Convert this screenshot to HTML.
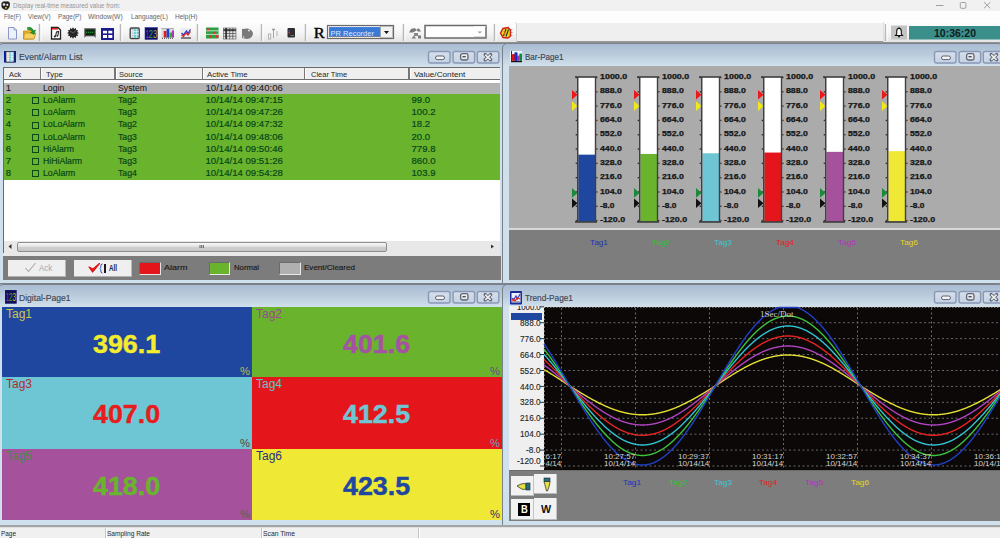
<!DOCTYPE html>
<html><head><meta charset="utf-8">
<style>
*{margin:0;padding:0;box-sizing:border-box}
html,body{width:1000px;height:538px;overflow:hidden;background:#aabcd4;font-family:"Liberation Sans",sans-serif;position:relative}
.a{position:absolute}
.t{position:absolute;white-space:nowrap}
.win{position:absolute;background:linear-gradient(#a9bcd3 0px,#b9cadb 10px,#d0e0ec 22px,#cfe1ed 100%);border:1px solid #7a8189;border-left-width:1.5px;border-radius:5px 5px 0 0;overflow:hidden}
.wt{position:absolute;font-size:9.5px;color:#3a4250;white-space:nowrap;line-height:12px}
.wb{position:absolute;width:23px;height:12px;border:1px solid #94a4bc;border-radius:2px;background:linear-gradient(#d7e1ec,#c3d0e0)}
.c{position:absolute;font-size:8.6px;white-space:nowrap;line-height:12px}
.hd{position:absolute;font-size:8px;white-space:nowrap;line-height:12px;color:#333}
.chk{position:absolute;width:7px;height:7px;border:1px solid #124a12}
.bl{font-size:9px;line-height:12px;font-weight:bold;color:#1a1a1a}
.dv{font-size:25px;line-height:30px;font-weight:bold;text-align:center;letter-spacing:0.6px}
.tl{font-size:9px;line-height:12px;color:#222}
.xl{font-size:8px;line-height:9px;color:#c8c8c8}
</style></head><body>
<!-- title bar -->
<div class="a" style="left:0;top:0;width:1000px;height:11px;background:#f1f1f1"></div>
<!-- menu -->
<div class="a" style="left:0;top:11px;width:1000px;height:10px;background:#fdfdfd"></div>
<!-- toolbar -->
<div class="a" style="left:0;top:21px;width:1000px;height:22.3px;background:linear-gradient(#ffffff 0,#ffffff 2px,#efefef 2px,#efefef 20.3px,#9a9a9a 20.3px,#8c8c8c 22.3px)"></div>
<div class="a" style="left:0;top:21.5px;width:517px;height:20px;background:linear-gradient(#fdfdfd,#f6f6f6 50%,#e4e4e4);border-right:1px solid #d0d0d0;border-radius:0 3px 0 0"></div>
<div class="a" style="left:883px;top:21.5px;width:117px;height:20px;background:linear-gradient(#fdfdfd,#f6f6f6 50%,#e4e4e4);border-left:1px solid #e0e0e0"></div>
<svg class="a" style="left:0;top:0" width="1000" height="45">
<line x1="39.5" y1="24" x2="39.5" y2="41" stroke="#b8b8b8" stroke-width="1.5"/>
<line x1="41.0" y1="24" x2="41.0" y2="41" stroke="#ffffff" stroke-width="1"/>
<line x1="120.5" y1="24" x2="120.5" y2="41" stroke="#b8b8b8" stroke-width="1.5"/>
<line x1="122.0" y1="24" x2="122.0" y2="41" stroke="#ffffff" stroke-width="1"/>
<line x1="197.5" y1="24" x2="197.5" y2="41" stroke="#b8b8b8" stroke-width="1.5"/>
<line x1="199.0" y1="24" x2="199.0" y2="41" stroke="#ffffff" stroke-width="1"/>
<line x1="261.5" y1="24" x2="261.5" y2="41" stroke="#b8b8b8" stroke-width="1.5"/>
<line x1="263.0" y1="24" x2="263.0" y2="41" stroke="#ffffff" stroke-width="1"/>
<line x1="305.5" y1="24" x2="305.5" y2="41" stroke="#b8b8b8" stroke-width="1.5"/>
<line x1="307.0" y1="24" x2="307.0" y2="41" stroke="#ffffff" stroke-width="1"/>
<line x1="403.5" y1="24" x2="403.5" y2="41" stroke="#b8b8b8" stroke-width="1.5"/>
<line x1="405.0" y1="24" x2="405.0" y2="41" stroke="#ffffff" stroke-width="1"/>
<line x1="494.5" y1="24" x2="494.5" y2="41" stroke="#b8b8b8" stroke-width="1.5"/>
<line x1="496.0" y1="24" x2="496.0" y2="41" stroke="#ffffff" stroke-width="1"/>
<line x1="885.5" y1="24" x2="885.5" y2="41" stroke="#b8b8b8" stroke-width="1.5"/>
<line x1="887.0" y1="24" x2="887.0" y2="41" stroke="#ffffff" stroke-width="1"/>
<path d="M8.5,27.5 H14 L16.5,30 V39 H8.5 Z" fill="#eaf2fb" stroke="#8c96c8" stroke-width="1"/>
<path d="M14,27.5 V30 H16.5" fill="#c8d0e8" stroke="#8c96c8" stroke-width="0.8"/>
<path d="M23.5,31 H28 L29,30 H33 V39 H23.5 Z" fill="#e8b830" stroke="#c08a10" stroke-width="0.8"/>
<path d="M24.5,33 H36 L34,39 H23.5 Z" fill="#f6d060" stroke="#c08a10" stroke-width="0.8"/>
<path d="M27.5,27.5 Q32,26.5 33.5,31 L35.5,30 L34,34.5 L30.5,32.5 L32.3,31.8 Q31,29 27.5,29.5 Z" fill="#1e9a30" stroke="#0c6a1c" stroke-width="0.5"/>
<path d="M51.5,27.5 H58 L60.5,30 V39 H51.5 Z" fill="#fff" stroke="#222" stroke-width="1.3"/>
<rect x="52" y="28" width="6" height="1.6" fill="#e82020"/>
<path d="M55.5,36.5 L56.5,32 L58.5,31.5 L58,35.5" fill="none" stroke="#222" stroke-width="1.1"/><circle cx="54.8" cy="36.6" r="1" fill="#222"/><circle cx="57.3" cy="35.8" r="0.9" fill="#222"/>
<polygon points="79.00,33.00 77.15,34.06 78.20,35.85 76.04,35.89 76.00,37.94 74.11,36.95 73.00,38.70 71.89,36.95 70.00,37.94 69.96,35.89 67.80,35.85 68.85,34.06 67.00,33.00 68.85,31.94 67.80,30.15 69.96,30.11 70.00,28.06 71.89,29.05 73.00,27.30 74.11,29.05 76.00,28.06 76.04,30.11 78.20,30.15 77.15,31.94" fill="#262626"/>
<path d="M70,31 L73,33 L76.5,30" stroke="#777" stroke-width="0.7" fill="none"/>
<rect x="84.3" y="28.3" width="11.4" height="8" fill="#4a4a4a"/>
<rect x="85.5" y="29.5" width="9" height="5.6" fill="#0a2a10"/>
<line x1="86" y1="32.3" x2="94" y2="32.3" stroke="#30b040" stroke-width="1.1" stroke-dasharray="1.2,0.8"/>
<path d="M84.5,37.5 L85.5,36 M95.5,37.5 L94.5,36" stroke="#555" stroke-width="1"/>
<rect x="101.5" y="28.5" width="12" height="11" fill="#1c1c90" stroke="#1c1c90"/>
<rect x="103" y="30.8" width="4" height="2.6" fill="#fff"/><rect x="108.3" y="30.8" width="4" height="2.6" fill="#fff"/>
<rect x="103" y="35" width="4" height="3" fill="#fff"/><rect x="108.3" y="35" width="4" height="3" fill="#fff"/>
<rect x="130.2" y="28" width="9" height="10.6" rx="1" fill="#c8f0f4" stroke="#444" stroke-width="1.4"/>
<line x1="132.8" y1="29" x2="132.8" y2="38" stroke="#e07070" stroke-width="0.8" stroke-dasharray="1,1"/><line x1="135" y1="29" x2="135" y2="38" stroke="#40c0d0" stroke-width="1.3"/><line x1="137.3" y1="29" x2="137.3" y2="38" stroke="#60d0e0" stroke-width="1.1"/>
<line x1="131" y1="31.5" x2="139" y2="31.5" stroke="#fff" stroke-width="0.5"/><line x1="131" y1="34.5" x2="139" y2="34.5" stroke="#fff" stroke-width="0.5"/>
<rect x="145" y="27.5" width="12.5" height="12" fill="#0e0e5a" stroke="#3a3aa0" stroke-width="0.6"/>
<text x="145.4" y="37.6" font-family="Liberation Sans" font-size="10" fill="#8a3ab8" textLength="3.6" lengthAdjust="spacingAndGlyphs">1</text><text x="148.8" y="37.6" font-family="Liberation Sans" font-size="10" fill="#28b040" textLength="4.2" lengthAdjust="spacingAndGlyphs">2</text><text x="153" y="37.6" font-family="Liberation Sans" font-size="10" fill="#b8a828" textLength="4.2" lengthAdjust="spacingAndGlyphs">3</text>
<rect x="161.5" y="28" width="12.5" height="10" fill="#d8d8d8"/>
<line x1="161.5" y1="28.5" x2="174" y2="28.5" stroke="#777" stroke-width="0.8" stroke-dasharray="1,1"/>
<rect x="163.8" y="31" width="2.6" height="6.5" fill="#e81818"/><rect x="166.6" y="29" width="2.6" height="8.5" fill="#2040d0"/><rect x="169.4" y="32.5" width="2.6" height="5" fill="#30b030"/><rect x="172" y="30.5" width="2" height="7" fill="#b030c0"/>
<line x1="162" y1="38.3" x2="174" y2="38.3" stroke="#444" stroke-width="1" stroke-dasharray="1,1"/>
<rect x="180.5" y="28.3" width="10.5" height="10" fill="#ececec"/>
<polyline points="181.5,33 183.5,35 186.5,31 188,33.5 190.5,29.5" fill="none" stroke="#2a40c8" stroke-width="1.4"/><polyline points="181.5,35 183.5,36.5 186,33 188,35 190.5,31.5" fill="none" stroke="#e02020" stroke-width="1.2"/>
<line x1="181" y1="38" x2="191" y2="38" stroke="#333" stroke-width="1.2"/>
<rect x="206" y="27.5" width="12.5" height="11" fill="#2aa040"/>
<rect x="206.8" y="28.5" width="2.6" height="2.6" fill="#e83030"/>
<rect x="213" y="31.8" width="2.6" height="2.6" fill="#e83030"/>
<rect x="209" y="35.2" width="2.6" height="2.6" fill="#e83030"/>
<rect x="216" y="35.2" width="2.6" height="2.6" fill="#e83030"/>
<line x1="206" y1="30.8" x2="218.5" y2="30.8" stroke="#fff" stroke-width="0.7"/><line x1="206" y1="34.4" x2="218.5" y2="34.4" stroke="#fff" stroke-width="0.7"/>
<rect x="223.5" y="28" width="12.5" height="11" fill="#e8e8e8" stroke="#555" stroke-width="0.6"/>
<line x1="226.6" y1="28" x2="226.6" y2="39" stroke="#555" stroke-width="0.8"/>
<line x1="223.5" y1="30.8" x2="236" y2="30.8" stroke="#555" stroke-width="0.8"/>
<line x1="229.7" y1="28" x2="229.7" y2="39" stroke="#555" stroke-width="0.8"/>
<line x1="223.5" y1="33.5" x2="236" y2="33.5" stroke="#555" stroke-width="0.8"/>
<line x1="232.8" y1="28" x2="232.8" y2="39" stroke="#555" stroke-width="0.8"/>
<line x1="223.5" y1="36.2" x2="236" y2="36.2" stroke="#555" stroke-width="0.8"/>
<line x1="226" y1="28" x2="226" y2="39" stroke="#222" stroke-width="1.4"/><line x1="223.5" y1="30" x2="236" y2="30" stroke="#222" stroke-width="1.4"/>
<path d="M242,29 L248,28.5 Q253,30 253,34 Q252,38.5 247,39 L242,38 Z" fill="#7a7a7a"/>
<circle cx="249" cy="30.5" r="0.9" fill="#eee"/><circle cx="243.5" cy="37" r="0.7" fill="#eee"/>
<rect x="268.5" y="34" width="2.2" height="5" fill="none" stroke="#b0b0b0" stroke-width="0.9"/>
<line x1="273.5" y1="30" x2="273.5" y2="38" stroke="#a8a8a8" stroke-width="1"/><ellipse cx="273.5" cy="29.5" rx="1.8" ry="1" fill="#a0a0a0"/><line x1="277" y1="31" x2="277" y2="36" stroke="#b0b0b0" stroke-width="1"/>
<rect x="287.5" y="28" width="7.5" height="9.5" rx="1" fill="#2e2e2e"/>
<rect x="288.5" y="30" width="1.5" height="1.5" fill="#3050c0"/><rect x="288.5" y="32" width="1.5" height="1.5" fill="#e03030"/><line x1="290.5" y1="35.5" x2="294" y2="35.5" stroke="#aaa" stroke-width="0.6"/>
<text x="313.8" y="38.3" font-family="Liberation Serif" font-size="14" fill="#000" stroke="#000" stroke-width="0.4" textLength="11" lengthAdjust="spacingAndGlyphs">R</text>
<rect x="327.5" y="25.5" width="66" height="13" fill="#fff" stroke="#6a6a6a" stroke-width="1.2"/>
<rect x="329" y="27" width="52" height="10" fill="#3a7ad6" stroke="#c8a070" stroke-width="0.7" stroke-dasharray="1,1"/>
<text x="330.5" y="35.5" font-family="Liberation Sans" font-size="8" fill="#dfe8ff" textLength="43.5" lengthAdjust="spacingAndGlyphs">PR Recorder</text>
<rect x="380.5" y="26.5" width="12" height="11" fill="#f2f2f2" stroke="#9a9a9a" stroke-width="0.6"/>
<path d="M384,31 H389 L386.5,34 Z" fill="#111"/>
<path d="M409,32.5 L411,29 L415,28 L416.5,30.5 L413,32.5 Z" fill="#7a7a7a"/><path d="M416.5,29 L419,28.5 L421,31.5 L417.5,31.5 Z" fill="#7a7a7a"/>
<rect x="414" y="33" width="4" height="3" fill="#888"/><path d="M411.5,38.5 L414,35.5 L416,38.5 Z" fill="#7a7a7a"/><rect x="418" y="35.5" width="3" height="3" fill="#7a7a7a"/>
<rect x="425" y="25.5" width="61" height="12.5" fill="#fff" stroke="#6a6a6a" stroke-width="1.5"/>
<path d="M474,37 V26.5 H486" fill="none" stroke="#fff" stroke-width="0.6"/><path d="M474,37.3 H486" stroke="#8a8a8a" stroke-width="1.2"/>
<path d="M477.5,31.5 H482 L479.8,33.5 Z" fill="#999"/>
<path d="M500.5,33 L503,28.5 L508,27.5 L510.5,30 L510.5,36 L508,38 L503,37.5 Z" fill="#e8d818" stroke="#d02020" stroke-width="1.5"/>
<path d="M503.5,36 L506,29 M506,36.5 L508.5,29.5" stroke="#2a2a2a" stroke-width="1.1"/><path d="M504,31 L505,35" stroke="#e07020" stroke-width="0.9"/>
<path d="M511.5,29 L512,30 M511.8,32 L512,33 M511.5,35 L512,36" stroke="#888" stroke-width="1"/>
<rect x="891" y="25.5" width="16" height="14" fill="#c4c4c4"/>
<path d="M895.5,35.5 H902.5 L901.3,34 V31.3 Q901.3,28.5 899,28.3 Q896.7,28.5 896.7,31.3 V34 Z" fill="#fff" stroke="#111" stroke-width="1.1"/>
<circle cx="899" cy="36.6" r="1" fill="#111"/><rect x="898.5" y="27.3" width="1" height="1.2" fill="#111"/>
<rect x="909" y="26" width="91" height="13.5" fill="#3a8f8b"/>
<text x="934" y="37.3" font-family="Liberation Sans" font-weight="bold" font-size="11.5" fill="#102020" textLength="42" lengthAdjust="spacingAndGlyphs">10:36:20</text>
</svg>
<svg class="a" style="left:0;top:0" width="1000" height="12">
<path d="M1.5,3 Q3,0.5 6,1.5 Q9,0.5 10,3.5 Q10,8 7,10 Q4,10 2,8 Q1,6 1.5,3 Z" fill="#222"/>
<circle cx="4" cy="4.5" r="1.3" fill="#eee"/><circle cx="7.3" cy="4.8" r="1.1" fill="#eee"/><circle cx="6" cy="7.8" r="1" fill="#c8c020"/>
<line x1="936" y1="5.5" x2="943.5" y2="5.5" stroke="#8a8a8a" stroke-width="0.8"/>
<rect x="960.3" y="2.5" width="5.6" height="5.8" rx="1" fill="none" stroke="#8a8a8a" stroke-width="0.8"/>
<path d="M984,2.2 L990.3,8.3 M990.3,2.2 L984,8.3" stroke="#8a8a8a" stroke-width="0.8"/>
</svg>
<div class="t" style="left:13.00px;top:2.31px;font-size:6.3px;line-height:8px;color:#959595;transform:scaleX(0.9791);transform-origin:0 0;">Display real-time measured value from:</div>
<div class="t" style="left:3.90px;top:12.48px;font-size:7px;line-height:9px;color:#666666;transform:scaleX(0.8359);transform-origin:0 0;">File(F)</div>
<div class="t" style="left:28.00px;top:12.48px;font-size:7px;line-height:9px;color:#666666;transform:scaleX(0.9311);transform-origin:0 0;">View(V)</div>
<div class="t" style="left:57.90px;top:12.48px;font-size:7px;line-height:9px;color:#666666;transform:scaleX(0.9112);transform-origin:0 0;">Page(P)</div>
<div class="t" style="left:88.20px;top:12.48px;font-size:7px;line-height:9px;color:#666666;transform:scaleX(0.9595);transform-origin:0 0;">Window(W)</div>
<div class="t" style="left:130.50px;top:12.48px;font-size:7px;line-height:9px;color:#666666;transform:scaleX(0.9320);transform-origin:0 0;">Language(L)</div>
<div class="t" style="left:175.00px;top:12.48px;font-size:7px;line-height:9px;color:#666666;transform:scaleX(0.9330);transform-origin:0 0;">Help(H)</div>

<!-- ============ Event window ============ -->
<div class="win" style="left:-2px;top:43px;width:512px;height:241px"></div>
<div class="t" style="left:18.50px;top:51.17px;font-size:9.6px;line-height:12px;color:#3c4452;transform:scaleX(0.9085);transform-origin:0 0;-webkit-text-stroke:0.15px #3c4452">Event/Alarm List</div>
<svg class="a" style="left:3.5px;top:50.5px" width="13" height="12"><rect x="0" y="0" width="12" height="11.5" fill="#0a1a9a"/><rect x="2" y="0.5" width="8" height="10.5" fill="#f4ffff" stroke="#333" stroke-width="0.8"/><line x1="4" y1="1" x2="4" y2="11" stroke="#f08080" stroke-width="1" stroke-dasharray="1.2,1.2"/><line x1="6" y1="1" x2="6" y2="11" stroke="#40c0c8" stroke-width="1.2"/><line x1="8" y1="1" x2="8" y2="11" stroke="#50c8d8" stroke-width="1" stroke-dasharray="1.5,1"/></svg>
<svg class="a" style="left:427.3px;top:50px" width="76" height="15">
<defs><linearGradient id="bg" x1="0" y1="0" x2="0" y2="1"><stop offset="0" stop-color="#d6e0ec"/><stop offset="1" stop-color="#c4d2e2"/></linearGradient></defs>
<rect x="1.5" y="1.5" width="21.5" height="11.5" rx="2" fill="url(#bg)" stroke="#8a98b6" stroke-width="1.4"/>
<rect x="26.1" y="1.5" width="21.5" height="11.5" rx="2" fill="url(#bg)" stroke="#8a98b6" stroke-width="1.4"/>
<rect x="50.3" y="1.5" width="21.5" height="11.5" rx="2" fill="url(#bg)" stroke="#8a98b6" stroke-width="1.4"/>
<rect x="8.5" y="6" width="9" height="3.6" rx="1.8" fill="#f4f4f4" stroke="#5a6070" stroke-width="1"/>
<rect x="33.6" y="3.6" width="7.4" height="6.4" rx="1.8" fill="#ececec" stroke="#5e6474" stroke-width="1.3"/>
<rect x="35.5" y="6" width="3.2" height="1.4" fill="#4a5060"/>
<path d="M58.2,4.6 L63.6,9.8 M63.6,4.6 L58.2,9.8" stroke="#5e6474" stroke-width="3.4" stroke-linecap="round"/>
<path d="M58.2,4.6 L63.6,9.8 M63.6,4.6 L58.2,9.8" stroke="#eeeeee" stroke-width="1.6"/>
</svg>
<div class="a" style="left:3px;top:67px;width:497px;height:189px;background:#fff;border-left:1px solid #6a6a6a;border-top:1px solid #6a6a6a"></div>
<div class="a" style="left:4px;top:68px;width:495.5px;height:12px;background:#efefef;border-bottom:1.5px solid #6e6e6e"></div>
<div class="a" style="left:39.6px;top:68px;width:1.5px;height:11px;background:#767676"></div>
<div class="a" style="left:41.1px;top:68px;width:1px;height:11px;background:#fff"></div>
<div class="a" style="left:114.1px;top:68px;width:1.5px;height:11px;background:#767676"></div>
<div class="a" style="left:115.6px;top:68px;width:1px;height:11px;background:#fff"></div>
<div class="a" style="left:201.9px;top:68px;width:1.5px;height:11px;background:#767676"></div>
<div class="a" style="left:203.4px;top:68px;width:1px;height:11px;background:#fff"></div>
<div class="a" style="left:303.8px;top:68px;width:1.5px;height:11px;background:#767676"></div>
<div class="a" style="left:305.3px;top:68px;width:1px;height:11px;background:#fff"></div>
<div class="a" style="left:408.1px;top:68px;width:1.5px;height:11px;background:#767676"></div>
<div class="a" style="left:409.6px;top:68px;width:1px;height:11px;background:#fff"></div>
<div class="t" style="left:9.00px;top:70.03px;font-size:7.4px;line-height:10px;color:#262626;transform:scaleX(0.9971);transform-origin:0 0;">Ack</div>
<div class="t" style="left:45.50px;top:70.03px;font-size:7.4px;line-height:10px;color:#262626;transform:scaleX(1.0471);transform-origin:0 0;">Type</div>
<div class="t" style="left:119.00px;top:70.03px;font-size:7.4px;line-height:10px;color:#262626;transform:scaleX(1.0193);transform-origin:0 0;">Source</div>
<div class="t" style="left:207.30px;top:70.03px;font-size:7.4px;line-height:10px;color:#262626;transform:scaleX(1.0642);transform-origin:0 0;">Active Time</div>
<div class="t" style="left:310.80px;top:70.03px;font-size:7.4px;line-height:10px;color:#262626;transform:scaleX(1.0146);transform-origin:0 0;">Clear Time</div>
<div class="t" style="left:413.70px;top:70.03px;font-size:7.4px;line-height:10px;color:#262626;transform:scaleX(1.1089);transform-origin:0 0;">Value/Content</div>
<div class="a" style="left:4px;top:82.5px;width:495.5px;height:11.5px;background:#b3b3b3"></div>
<div class="a" style="left:4px;top:94px;width:495.5px;height:86.2px;background:#6ab42d"></div>
<div class="t" style="left:5.80px;top:81.77px;font-size:9.6px;line-height:12px;color:#161616;transform:scaleX(1.0000);transform-origin:0 0;-webkit-text-stroke:0.05px #161616">1</div>
<div class="t" style="left:42.60px;top:81.77px;font-size:9.6px;line-height:12px;color:#161616;transform:scaleX(0.9050);transform-origin:0 0;-webkit-text-stroke:0.05px #161616">Login</div>
<div class="t" style="left:117.50px;top:81.77px;font-size:9.6px;line-height:12px;color:#161616;transform:scaleX(0.9050);transform-origin:0 0;-webkit-text-stroke:0.05px #161616">System</div>
<div class="t" style="left:205.50px;top:81.77px;font-size:9.6px;line-height:12px;color:#161616;transform:scaleX(1.0000);transform-origin:0 0;-webkit-text-stroke:0.05px #161616">10/14/14 09:40:06</div>
<div class="t" style="left:5.80px;top:93.97px;font-size:9.6px;line-height:12px;color:#07461a;transform:scaleX(1.0000);transform-origin:0 0;-webkit-text-stroke:0.2px #07461a">2</div>
<div class="a" style="left:32.2px;top:97.1px;width:7px;height:7px;border:1.3px solid #0a4a1a"></div>
<div class="t" style="left:42.60px;top:93.97px;font-size:9.6px;line-height:12px;color:#07461a;transform:scaleX(0.9050);transform-origin:0 0;-webkit-text-stroke:0.2px #07461a">LoAlarm</div>
<div class="t" style="left:117.50px;top:93.97px;font-size:9.6px;line-height:12px;color:#07461a;transform:scaleX(0.9050);transform-origin:0 0;-webkit-text-stroke:0.2px #07461a">Tag2</div>
<div class="t" style="left:205.50px;top:93.97px;font-size:9.6px;line-height:12px;color:#07461a;transform:scaleX(1.0000);transform-origin:0 0;-webkit-text-stroke:0.2px #07461a">10/14/14 09:47:15</div>
<div class="t" style="left:411.50px;top:93.97px;font-size:9.6px;line-height:12px;color:#07461a;transform:scaleX(1.0000);transform-origin:0 0;-webkit-text-stroke:0.2px #07461a">99.0</div>
<div class="t" style="left:5.80px;top:106.17px;font-size:9.6px;line-height:12px;color:#07461a;transform:scaleX(1.0000);transform-origin:0 0;-webkit-text-stroke:0.2px #07461a">3</div>
<div class="a" style="left:32.2px;top:109.3px;width:7px;height:7px;border:1.3px solid #0a4a1a"></div>
<div class="t" style="left:42.60px;top:106.17px;font-size:9.6px;line-height:12px;color:#07461a;transform:scaleX(0.9050);transform-origin:0 0;-webkit-text-stroke:0.2px #07461a">LoAlarm</div>
<div class="t" style="left:117.50px;top:106.17px;font-size:9.6px;line-height:12px;color:#07461a;transform:scaleX(0.9050);transform-origin:0 0;-webkit-text-stroke:0.2px #07461a">Tag3</div>
<div class="t" style="left:205.50px;top:106.17px;font-size:9.6px;line-height:12px;color:#07461a;transform:scaleX(1.0000);transform-origin:0 0;-webkit-text-stroke:0.2px #07461a">10/14/14 09:47:26</div>
<div class="t" style="left:411.50px;top:106.17px;font-size:9.6px;line-height:12px;color:#07461a;transform:scaleX(1.0000);transform-origin:0 0;-webkit-text-stroke:0.2px #07461a">100.2</div>
<div class="t" style="left:5.80px;top:118.37px;font-size:9.6px;line-height:12px;color:#07461a;transform:scaleX(1.0000);transform-origin:0 0;-webkit-text-stroke:0.2px #07461a">4</div>
<div class="a" style="left:32.2px;top:121.5px;width:7px;height:7px;border:1.3px solid #0a4a1a"></div>
<div class="t" style="left:42.60px;top:118.37px;font-size:9.6px;line-height:12px;color:#07461a;transform:scaleX(0.9050);transform-origin:0 0;-webkit-text-stroke:0.2px #07461a">LoLoAlarm</div>
<div class="t" style="left:117.50px;top:118.37px;font-size:9.6px;line-height:12px;color:#07461a;transform:scaleX(0.9050);transform-origin:0 0;-webkit-text-stroke:0.2px #07461a">Tag2</div>
<div class="t" style="left:205.50px;top:118.37px;font-size:9.6px;line-height:12px;color:#07461a;transform:scaleX(1.0000);transform-origin:0 0;-webkit-text-stroke:0.2px #07461a">10/14/14 09:47:32</div>
<div class="t" style="left:411.50px;top:118.37px;font-size:9.6px;line-height:12px;color:#07461a;transform:scaleX(1.0000);transform-origin:0 0;-webkit-text-stroke:0.2px #07461a">18.2</div>
<div class="t" style="left:5.80px;top:130.57px;font-size:9.6px;line-height:12px;color:#07461a;transform:scaleX(1.0000);transform-origin:0 0;-webkit-text-stroke:0.2px #07461a">5</div>
<div class="a" style="left:32.2px;top:133.7px;width:7px;height:7px;border:1.3px solid #0a4a1a"></div>
<div class="t" style="left:42.60px;top:130.57px;font-size:9.6px;line-height:12px;color:#07461a;transform:scaleX(0.9050);transform-origin:0 0;-webkit-text-stroke:0.2px #07461a">LoLoAlarm</div>
<div class="t" style="left:117.50px;top:130.57px;font-size:9.6px;line-height:12px;color:#07461a;transform:scaleX(0.9050);transform-origin:0 0;-webkit-text-stroke:0.2px #07461a">Tag3</div>
<div class="t" style="left:205.50px;top:130.57px;font-size:9.6px;line-height:12px;color:#07461a;transform:scaleX(1.0000);transform-origin:0 0;-webkit-text-stroke:0.2px #07461a">10/14/14 09:48:06</div>
<div class="t" style="left:411.50px;top:130.57px;font-size:9.6px;line-height:12px;color:#07461a;transform:scaleX(1.0000);transform-origin:0 0;-webkit-text-stroke:0.2px #07461a">20.0</div>
<div class="t" style="left:5.80px;top:142.77px;font-size:9.6px;line-height:12px;color:#07461a;transform:scaleX(1.0000);transform-origin:0 0;-webkit-text-stroke:0.2px #07461a">6</div>
<div class="a" style="left:32.2px;top:145.9px;width:7px;height:7px;border:1.3px solid #0a4a1a"></div>
<div class="t" style="left:42.60px;top:142.77px;font-size:9.6px;line-height:12px;color:#07461a;transform:scaleX(0.9050);transform-origin:0 0;-webkit-text-stroke:0.2px #07461a">HiAlarm</div>
<div class="t" style="left:117.50px;top:142.77px;font-size:9.6px;line-height:12px;color:#07461a;transform:scaleX(0.9050);transform-origin:0 0;-webkit-text-stroke:0.2px #07461a">Tag3</div>
<div class="t" style="left:205.50px;top:142.77px;font-size:9.6px;line-height:12px;color:#07461a;transform:scaleX(1.0000);transform-origin:0 0;-webkit-text-stroke:0.2px #07461a">10/14/14 09:50:46</div>
<div class="t" style="left:411.50px;top:142.77px;font-size:9.6px;line-height:12px;color:#07461a;transform:scaleX(1.0000);transform-origin:0 0;-webkit-text-stroke:0.2px #07461a">779.8</div>
<div class="t" style="left:5.80px;top:154.97px;font-size:9.6px;line-height:12px;color:#07461a;transform:scaleX(1.0000);transform-origin:0 0;-webkit-text-stroke:0.2px #07461a">7</div>
<div class="a" style="left:32.2px;top:158.1px;width:7px;height:7px;border:1.3px solid #0a4a1a"></div>
<div class="t" style="left:42.60px;top:154.97px;font-size:9.6px;line-height:12px;color:#07461a;transform:scaleX(0.9050);transform-origin:0 0;-webkit-text-stroke:0.2px #07461a">HiHiAlarm</div>
<div class="t" style="left:117.50px;top:154.97px;font-size:9.6px;line-height:12px;color:#07461a;transform:scaleX(0.9050);transform-origin:0 0;-webkit-text-stroke:0.2px #07461a">Tag3</div>
<div class="t" style="left:205.50px;top:154.97px;font-size:9.6px;line-height:12px;color:#07461a;transform:scaleX(1.0000);transform-origin:0 0;-webkit-text-stroke:0.2px #07461a">10/14/14 09:51:26</div>
<div class="t" style="left:411.50px;top:154.97px;font-size:9.6px;line-height:12px;color:#07461a;transform:scaleX(1.0000);transform-origin:0 0;-webkit-text-stroke:0.2px #07461a">860.0</div>
<div class="t" style="left:5.80px;top:167.17px;font-size:9.6px;line-height:12px;color:#07461a;transform:scaleX(1.0000);transform-origin:0 0;-webkit-text-stroke:0.2px #07461a">8</div>
<div class="a" style="left:32.2px;top:170.3px;width:7px;height:7px;border:1.3px solid #0a4a1a"></div>
<div class="t" style="left:42.60px;top:167.17px;font-size:9.6px;line-height:12px;color:#07461a;transform:scaleX(0.9050);transform-origin:0 0;-webkit-text-stroke:0.2px #07461a">LoAlarm</div>
<div class="t" style="left:117.50px;top:167.17px;font-size:9.6px;line-height:12px;color:#07461a;transform:scaleX(0.9050);transform-origin:0 0;-webkit-text-stroke:0.2px #07461a">Tag4</div>
<div class="t" style="left:205.50px;top:167.17px;font-size:9.6px;line-height:12px;color:#07461a;transform:scaleX(1.0000);transform-origin:0 0;-webkit-text-stroke:0.2px #07461a">10/14/14 09:54:28</div>
<div class="t" style="left:411.50px;top:167.17px;font-size:9.6px;line-height:12px;color:#07461a;transform:scaleX(1.0000);transform-origin:0 0;-webkit-text-stroke:0.2px #07461a">103.9</div>
<div class="a" style="left:4px;top:240.5px;width:495.5px;height:12px;background:#e8e8e8"></div>
<div class="a" style="left:17px;top:241.5px;width:370px;height:10px;background:linear-gradient(#fafafa,#e2e2e2 45%,#cfcfcf 55%,#c4c4c4);border:1px solid #8e8e8e;border-radius:2px"></div>
<svg class="a" style="left:0;top:236px" width="500" height="20"><path d="M8.5,10.5 L11.5,8 V13 Z" fill="#333"/><path d="M491,8.5 L494,10.5 L491,12.5 Z" fill="#333"/><path d="M200,9 V12 M201.7,9 V12 M203.4,9 V12" stroke="#444" stroke-width="0.8"/></svg>
<div class="a" style="left:3px;top:252.5px;width:497px;height:3px;background:#e8e8e8"></div>
<div class="a" style="left:3px;top:255.5px;width:498px;height:24px;background:#7b7c7b"></div>
<div class="a" style="left:8.1px;top:259.5px;width:57.7px;height:17.1px;background:#efefef;border-right:1px solid #b8b8b8;border-bottom:1.5px solid #b0b0b0"></div>
<div class="a" style="left:73.5px;top:259.5px;width:58.2px;height:17.1px;background:#efefef;border-right:1px solid #b8b8b8;border-bottom:1.5px solid #b0b0b0"></div>
<svg class="a" style="left:0;top:256px" width="140" height="24"><path d="M25.5,12 L28.5,15.5 L35.5,7" fill="none" stroke="#a8a8a8" stroke-width="1.1"/><path d="M89,11 L92.5,16 L99.5,7.5 L93,13 Z" fill="#e01818" stroke="#e01818" stroke-width="1.2" stroke-linejoin="round"/><path d="M102.5,8 Q100.5,8 100.8,10.5 Q101,12 99.8,12.5 Q101,13 100.8,14.5 Q100.5,17 102.5,17" fill="none" stroke="#3050c0" stroke-width="1"/><rect x="104" y="8" width="2" height="9" fill="#1a1a1a"/></svg>
<div class="t" style="left:38.50px;top:262.59px;font-size:8.6px;line-height:11px;color:#a2a8b8;transform:scaleX(0.9277);transform-origin:0 0;">Ack</div>
<div class="t" style="left:109.20px;top:262.59px;font-size:8.6px;line-height:11px;font-weight:bold;color:#1c2438;transform:scaleX(0.7280);transform-origin:0 0;">All</div>
<div class="a" style="left:139.4px;top:261.8px;width:21.6px;height:13px;background:#e5161b;border-top:1px solid #6a6a6a;border-left:1px solid #6a6a6a;border-right:1.5px solid #e8e8e8;border-bottom:1.5px solid #e8e8e8"></div>
<div class="a" style="left:208.8px;top:261.8px;width:21.6px;height:13px;background:#6ab42d;border-top:1px solid #6a6a6a;border-left:1px solid #6a6a6a;border-right:1.5px solid #e8e8e8;border-bottom:1.5px solid #e8e8e8"></div>
<div class="a" style="left:279px;top:261.8px;width:21.6px;height:13px;background:#b0b0b0;border-top:1px solid #6a6a6a;border-left:1px solid #6a6a6a;border-right:1.5px solid #e8e8e8;border-bottom:1.5px solid #e8e8e8"></div>
<div class="t" style="left:164.00px;top:262.91px;font-size:7.6px;line-height:10px;color:#1a1a1a;transform:scaleX(1.1840);transform-origin:0 0;-webkit-text-stroke:0.15px #1a1a1a">Alarm</div>
<div class="t" style="left:234.00px;top:262.91px;font-size:7.6px;line-height:10px;color:#1a1a1a;transform:scaleX(1.0207);transform-origin:0 0;-webkit-text-stroke:0.15px #1a1a1a">Normal</div>
<div class="t" style="left:304.00px;top:262.91px;font-size:7.6px;line-height:10px;color:#1a1a1a;transform:scaleX(1.0589);transform-origin:0 0;-webkit-text-stroke:0.15px #1a1a1a">Event/Cleared</div>

<!-- ============ Bar window ============ -->
<div class="win" style="left:502px;top:43px;width:501px;height:241px"></div>
<div class="t" style="left:525.00px;top:51.17px;font-size:9.6px;line-height:12px;color:#3c4452;transform:scaleX(0.8388);transform-origin:0 0;-webkit-text-stroke:0.15px #3c4452">Bar-Page1</div>
<svg class="a" style="left:509.5px;top:51px" width="13" height="12"><rect x="0" y="0" width="12" height="11" fill="#eef2f4"/><rect x="1" y="0" width="1" height="11" fill="#333"/><rect x="2" y="3" width="3" height="7" rx="1" fill="#f00a0a"/><rect x="4.5" y="1.3" width="3" height="8.7" rx="1" fill="#1030c8"/><rect x="7" y="4.5" width="2.5" height="5.5" rx="1" fill="#a030b0"/><rect x="9.3" y="2.5" width="2.7" height="7.5" rx="1" fill="#108a30"/><rect x="1" y="10" width="11" height="1.2" fill="#111"/></svg>
<svg class="a" style="left:932.6px;top:50px" width="76" height="15">
<defs><linearGradient id="bg" x1="0" y1="0" x2="0" y2="1"><stop offset="0" stop-color="#d6e0ec"/><stop offset="1" stop-color="#c4d2e2"/></linearGradient></defs>
<rect x="1.5" y="1.5" width="21.5" height="11.5" rx="2" fill="url(#bg)" stroke="#8a98b6" stroke-width="1.4"/>
<rect x="26.1" y="1.5" width="21.5" height="11.5" rx="2" fill="url(#bg)" stroke="#8a98b6" stroke-width="1.4"/>
<rect x="50.3" y="1.5" width="21.5" height="11.5" rx="2" fill="url(#bg)" stroke="#8a98b6" stroke-width="1.4"/>
<rect x="8.5" y="6" width="9" height="3.6" rx="1.8" fill="#f4f4f4" stroke="#5a6070" stroke-width="1"/>
<rect x="33.6" y="3.6" width="7.4" height="6.4" rx="1.8" fill="#ececec" stroke="#5e6474" stroke-width="1.3"/>
<rect x="35.5" y="6" width="3.2" height="1.4" fill="#4a5060"/>
<path d="M58.2,4.6 L63.6,9.8 M63.6,4.6 L58.2,9.8" stroke="#5e6474" stroke-width="3.4" stroke-linecap="round"/>
<path d="M58.2,4.6 L63.6,9.8 M63.6,4.6 L58.2,9.8" stroke="#eeeeee" stroke-width="1.6"/>
</svg>
<div class="a" style="left:509px;top:66px;width:491px;height:162px;background:#ababab"></div>
<div class="a" style="left:509px;top:228px;width:491px;height:2px;background:#d8d8d8"></div>
<div class="a" style="left:509px;top:230px;width:491px;height:49.5px;background:#7c7d7c"></div>
<svg class="a" style="left:509px;top:66px" width="491" height="162"><g transform="translate(-509,-66)">
<rect x="578.3" y="77" width="17.4" height="145" fill="#fff"/>
<rect x="578.3" y="154.66" width="17.4" height="67.34" fill="#1f47a0"/>
<rect x="577" y="77" width="1.4" height="145" fill="#404040"/>
<rect x="594.8" y="77" width="1.4" height="145" fill="#404040"/>
<rect x="575" y="76.2" width="22" height="1.6" fill="#404040"/>
<rect x="575" y="221.1" width="22" height="1.7" fill="#404040"/>
<rect x="575.7" y="76.80" width="1.3" height="1.4" fill="#333"/>
<rect x="596.2" y="76.80" width="1.3" height="1.4" fill="#333"/>
<rect x="575.7" y="91.11" width="1.3" height="1.4" fill="#333"/>
<rect x="596.2" y="91.11" width="1.3" height="1.4" fill="#333"/>
<rect x="575.7" y="105.42" width="1.3" height="1.4" fill="#333"/>
<rect x="596.2" y="105.42" width="1.3" height="1.4" fill="#333"/>
<rect x="575.7" y="119.73" width="1.3" height="1.4" fill="#333"/>
<rect x="596.2" y="119.73" width="1.3" height="1.4" fill="#333"/>
<rect x="575.7" y="134.04" width="1.3" height="1.4" fill="#333"/>
<rect x="596.2" y="134.04" width="1.3" height="1.4" fill="#333"/>
<rect x="575.7" y="148.35" width="1.3" height="1.4" fill="#333"/>
<rect x="596.2" y="148.35" width="1.3" height="1.4" fill="#333"/>
<rect x="575.7" y="162.66" width="1.3" height="1.4" fill="#333"/>
<rect x="596.2" y="162.66" width="1.3" height="1.4" fill="#333"/>
<rect x="575.7" y="176.97" width="1.3" height="1.4" fill="#333"/>
<rect x="596.2" y="176.97" width="1.3" height="1.4" fill="#333"/>
<rect x="575.7" y="191.28" width="1.3" height="1.4" fill="#333"/>
<rect x="596.2" y="191.28" width="1.3" height="1.4" fill="#333"/>
<rect x="575.7" y="205.59" width="1.3" height="1.4" fill="#333"/>
<rect x="596.2" y="205.59" width="1.3" height="1.4" fill="#333"/>
<rect x="575.7" y="219.90" width="1.3" height="1.4" fill="#333"/>
<rect x="596.2" y="219.90" width="1.3" height="1.4" fill="#333"/>
<path d="M572,89.9 L577.5,94.7 L572,99.5 Z" fill="#ee1818"/>
<path d="M572,101.3 L577.5,106.1 L572,110.9 Z" fill="#f0e818"/>
<path d="M572,188.1 L577.5,192.9 L572,197.7 Z" fill="#1a8a3a"/>
<path d="M572,198.5 L577.5,203.3 L572,208.1 Z" fill="#111"/>
<rect x="640.3" y="77" width="17.4" height="145" fill="#fff"/>
<rect x="640.3" y="153.96" width="17.4" height="68.04" fill="#6ab42d"/>
<rect x="639" y="77" width="1.4" height="145" fill="#404040"/>
<rect x="656.8" y="77" width="1.4" height="145" fill="#404040"/>
<rect x="637" y="76.2" width="22" height="1.6" fill="#404040"/>
<rect x="637" y="221.1" width="22" height="1.7" fill="#404040"/>
<rect x="637.7" y="76.80" width="1.3" height="1.4" fill="#333"/>
<rect x="658.2" y="76.80" width="1.3" height="1.4" fill="#333"/>
<rect x="637.7" y="91.11" width="1.3" height="1.4" fill="#333"/>
<rect x="658.2" y="91.11" width="1.3" height="1.4" fill="#333"/>
<rect x="637.7" y="105.42" width="1.3" height="1.4" fill="#333"/>
<rect x="658.2" y="105.42" width="1.3" height="1.4" fill="#333"/>
<rect x="637.7" y="119.73" width="1.3" height="1.4" fill="#333"/>
<rect x="658.2" y="119.73" width="1.3" height="1.4" fill="#333"/>
<rect x="637.7" y="134.04" width="1.3" height="1.4" fill="#333"/>
<rect x="658.2" y="134.04" width="1.3" height="1.4" fill="#333"/>
<rect x="637.7" y="148.35" width="1.3" height="1.4" fill="#333"/>
<rect x="658.2" y="148.35" width="1.3" height="1.4" fill="#333"/>
<rect x="637.7" y="162.66" width="1.3" height="1.4" fill="#333"/>
<rect x="658.2" y="162.66" width="1.3" height="1.4" fill="#333"/>
<rect x="637.7" y="176.97" width="1.3" height="1.4" fill="#333"/>
<rect x="658.2" y="176.97" width="1.3" height="1.4" fill="#333"/>
<rect x="637.7" y="191.28" width="1.3" height="1.4" fill="#333"/>
<rect x="658.2" y="191.28" width="1.3" height="1.4" fill="#333"/>
<rect x="637.7" y="205.59" width="1.3" height="1.4" fill="#333"/>
<rect x="658.2" y="205.59" width="1.3" height="1.4" fill="#333"/>
<rect x="637.7" y="219.90" width="1.3" height="1.4" fill="#333"/>
<rect x="658.2" y="219.90" width="1.3" height="1.4" fill="#333"/>
<path d="M634,89.9 L639.5,94.7 L634,99.5 Z" fill="#ee1818"/>
<path d="M634,101.3 L639.5,106.1 L634,110.9 Z" fill="#f0e818"/>
<path d="M634,188.1 L639.5,192.9 L634,197.7 Z" fill="#1a8a3a"/>
<path d="M634,198.5 L639.5,203.3 L634,208.1 Z" fill="#111"/>
<rect x="702.3" y="77" width="17.4" height="145" fill="#fff"/>
<rect x="702.3" y="153.27" width="17.4" height="68.73" fill="#6ec6d5"/>
<rect x="701" y="77" width="1.4" height="145" fill="#404040"/>
<rect x="718.8" y="77" width="1.4" height="145" fill="#404040"/>
<rect x="699" y="76.2" width="22" height="1.6" fill="#404040"/>
<rect x="699" y="221.1" width="22" height="1.7" fill="#404040"/>
<rect x="699.7" y="76.80" width="1.3" height="1.4" fill="#333"/>
<rect x="720.2" y="76.80" width="1.3" height="1.4" fill="#333"/>
<rect x="699.7" y="91.11" width="1.3" height="1.4" fill="#333"/>
<rect x="720.2" y="91.11" width="1.3" height="1.4" fill="#333"/>
<rect x="699.7" y="105.42" width="1.3" height="1.4" fill="#333"/>
<rect x="720.2" y="105.42" width="1.3" height="1.4" fill="#333"/>
<rect x="699.7" y="119.73" width="1.3" height="1.4" fill="#333"/>
<rect x="720.2" y="119.73" width="1.3" height="1.4" fill="#333"/>
<rect x="699.7" y="134.04" width="1.3" height="1.4" fill="#333"/>
<rect x="720.2" y="134.04" width="1.3" height="1.4" fill="#333"/>
<rect x="699.7" y="148.35" width="1.3" height="1.4" fill="#333"/>
<rect x="720.2" y="148.35" width="1.3" height="1.4" fill="#333"/>
<rect x="699.7" y="162.66" width="1.3" height="1.4" fill="#333"/>
<rect x="720.2" y="162.66" width="1.3" height="1.4" fill="#333"/>
<rect x="699.7" y="176.97" width="1.3" height="1.4" fill="#333"/>
<rect x="720.2" y="176.97" width="1.3" height="1.4" fill="#333"/>
<rect x="699.7" y="191.28" width="1.3" height="1.4" fill="#333"/>
<rect x="720.2" y="191.28" width="1.3" height="1.4" fill="#333"/>
<rect x="699.7" y="205.59" width="1.3" height="1.4" fill="#333"/>
<rect x="720.2" y="205.59" width="1.3" height="1.4" fill="#333"/>
<rect x="699.7" y="219.90" width="1.3" height="1.4" fill="#333"/>
<rect x="720.2" y="219.90" width="1.3" height="1.4" fill="#333"/>
<path d="M696,89.9 L701.5,94.7 L696,99.5 Z" fill="#ee1818"/>
<path d="M696,101.3 L701.5,106.1 L696,110.9 Z" fill="#f0e818"/>
<path d="M696,188.1 L701.5,192.9 L696,197.7 Z" fill="#1a8a3a"/>
<path d="M696,198.5 L701.5,203.3 L696,208.1 Z" fill="#111"/>
<rect x="764.3" y="77" width="17.4" height="145" fill="#fff"/>
<rect x="764.3" y="152.56" width="17.4" height="69.44" fill="#e5161b"/>
<rect x="763" y="77" width="1.4" height="145" fill="#404040"/>
<rect x="780.8" y="77" width="1.4" height="145" fill="#404040"/>
<rect x="761" y="76.2" width="22" height="1.6" fill="#404040"/>
<rect x="761" y="221.1" width="22" height="1.7" fill="#404040"/>
<rect x="761.7" y="76.80" width="1.3" height="1.4" fill="#333"/>
<rect x="782.2" y="76.80" width="1.3" height="1.4" fill="#333"/>
<rect x="761.7" y="91.11" width="1.3" height="1.4" fill="#333"/>
<rect x="782.2" y="91.11" width="1.3" height="1.4" fill="#333"/>
<rect x="761.7" y="105.42" width="1.3" height="1.4" fill="#333"/>
<rect x="782.2" y="105.42" width="1.3" height="1.4" fill="#333"/>
<rect x="761.7" y="119.73" width="1.3" height="1.4" fill="#333"/>
<rect x="782.2" y="119.73" width="1.3" height="1.4" fill="#333"/>
<rect x="761.7" y="134.04" width="1.3" height="1.4" fill="#333"/>
<rect x="782.2" y="134.04" width="1.3" height="1.4" fill="#333"/>
<rect x="761.7" y="148.35" width="1.3" height="1.4" fill="#333"/>
<rect x="782.2" y="148.35" width="1.3" height="1.4" fill="#333"/>
<rect x="761.7" y="162.66" width="1.3" height="1.4" fill="#333"/>
<rect x="782.2" y="162.66" width="1.3" height="1.4" fill="#333"/>
<rect x="761.7" y="176.97" width="1.3" height="1.4" fill="#333"/>
<rect x="782.2" y="176.97" width="1.3" height="1.4" fill="#333"/>
<rect x="761.7" y="191.28" width="1.3" height="1.4" fill="#333"/>
<rect x="782.2" y="191.28" width="1.3" height="1.4" fill="#333"/>
<rect x="761.7" y="205.59" width="1.3" height="1.4" fill="#333"/>
<rect x="782.2" y="205.59" width="1.3" height="1.4" fill="#333"/>
<rect x="761.7" y="219.90" width="1.3" height="1.4" fill="#333"/>
<rect x="782.2" y="219.90" width="1.3" height="1.4" fill="#333"/>
<path d="M758,89.9 L763.5,94.7 L758,99.5 Z" fill="#ee1818"/>
<path d="M758,101.3 L763.5,106.1 L758,110.9 Z" fill="#f0e818"/>
<path d="M758,188.1 L763.5,192.9 L758,197.7 Z" fill="#1a8a3a"/>
<path d="M758,198.5 L763.5,203.3 L758,208.1 Z" fill="#111"/>
<rect x="826.3" y="77" width="17.4" height="145" fill="#fff"/>
<rect x="826.3" y="151.86" width="17.4" height="70.14" fill="#a5519c"/>
<rect x="825" y="77" width="1.4" height="145" fill="#404040"/>
<rect x="842.8" y="77" width="1.4" height="145" fill="#404040"/>
<rect x="823" y="76.2" width="22" height="1.6" fill="#404040"/>
<rect x="823" y="221.1" width="22" height="1.7" fill="#404040"/>
<rect x="823.7" y="76.80" width="1.3" height="1.4" fill="#333"/>
<rect x="844.2" y="76.80" width="1.3" height="1.4" fill="#333"/>
<rect x="823.7" y="91.11" width="1.3" height="1.4" fill="#333"/>
<rect x="844.2" y="91.11" width="1.3" height="1.4" fill="#333"/>
<rect x="823.7" y="105.42" width="1.3" height="1.4" fill="#333"/>
<rect x="844.2" y="105.42" width="1.3" height="1.4" fill="#333"/>
<rect x="823.7" y="119.73" width="1.3" height="1.4" fill="#333"/>
<rect x="844.2" y="119.73" width="1.3" height="1.4" fill="#333"/>
<rect x="823.7" y="134.04" width="1.3" height="1.4" fill="#333"/>
<rect x="844.2" y="134.04" width="1.3" height="1.4" fill="#333"/>
<rect x="823.7" y="148.35" width="1.3" height="1.4" fill="#333"/>
<rect x="844.2" y="148.35" width="1.3" height="1.4" fill="#333"/>
<rect x="823.7" y="162.66" width="1.3" height="1.4" fill="#333"/>
<rect x="844.2" y="162.66" width="1.3" height="1.4" fill="#333"/>
<rect x="823.7" y="176.97" width="1.3" height="1.4" fill="#333"/>
<rect x="844.2" y="176.97" width="1.3" height="1.4" fill="#333"/>
<rect x="823.7" y="191.28" width="1.3" height="1.4" fill="#333"/>
<rect x="844.2" y="191.28" width="1.3" height="1.4" fill="#333"/>
<rect x="823.7" y="205.59" width="1.3" height="1.4" fill="#333"/>
<rect x="844.2" y="205.59" width="1.3" height="1.4" fill="#333"/>
<rect x="823.7" y="219.90" width="1.3" height="1.4" fill="#333"/>
<rect x="844.2" y="219.90" width="1.3" height="1.4" fill="#333"/>
<path d="M820,89.9 L825.5,94.7 L820,99.5 Z" fill="#ee1818"/>
<path d="M820,101.3 L825.5,106.1 L820,110.9 Z" fill="#f0e818"/>
<path d="M820,188.1 L825.5,192.9 L820,197.7 Z" fill="#1a8a3a"/>
<path d="M820,198.5 L825.5,203.3 L820,208.1 Z" fill="#111"/>
<rect x="888.3" y="77" width="17.4" height="145" fill="#fff"/>
<rect x="888.3" y="151.16" width="17.4" height="70.84" fill="#efe936"/>
<rect x="887" y="77" width="1.4" height="145" fill="#404040"/>
<rect x="904.8" y="77" width="1.4" height="145" fill="#404040"/>
<rect x="885" y="76.2" width="22" height="1.6" fill="#404040"/>
<rect x="885" y="221.1" width="22" height="1.7" fill="#404040"/>
<rect x="885.7" y="76.80" width="1.3" height="1.4" fill="#333"/>
<rect x="906.2" y="76.80" width="1.3" height="1.4" fill="#333"/>
<rect x="885.7" y="91.11" width="1.3" height="1.4" fill="#333"/>
<rect x="906.2" y="91.11" width="1.3" height="1.4" fill="#333"/>
<rect x="885.7" y="105.42" width="1.3" height="1.4" fill="#333"/>
<rect x="906.2" y="105.42" width="1.3" height="1.4" fill="#333"/>
<rect x="885.7" y="119.73" width="1.3" height="1.4" fill="#333"/>
<rect x="906.2" y="119.73" width="1.3" height="1.4" fill="#333"/>
<rect x="885.7" y="134.04" width="1.3" height="1.4" fill="#333"/>
<rect x="906.2" y="134.04" width="1.3" height="1.4" fill="#333"/>
<rect x="885.7" y="148.35" width="1.3" height="1.4" fill="#333"/>
<rect x="906.2" y="148.35" width="1.3" height="1.4" fill="#333"/>
<rect x="885.7" y="162.66" width="1.3" height="1.4" fill="#333"/>
<rect x="906.2" y="162.66" width="1.3" height="1.4" fill="#333"/>
<rect x="885.7" y="176.97" width="1.3" height="1.4" fill="#333"/>
<rect x="906.2" y="176.97" width="1.3" height="1.4" fill="#333"/>
<rect x="885.7" y="191.28" width="1.3" height="1.4" fill="#333"/>
<rect x="906.2" y="191.28" width="1.3" height="1.4" fill="#333"/>
<rect x="885.7" y="205.59" width="1.3" height="1.4" fill="#333"/>
<rect x="906.2" y="205.59" width="1.3" height="1.4" fill="#333"/>
<rect x="885.7" y="219.90" width="1.3" height="1.4" fill="#333"/>
<rect x="906.2" y="219.90" width="1.3" height="1.4" fill="#333"/>
<path d="M882,89.9 L887.5,94.7 L882,99.5 Z" fill="#ee1818"/>
<path d="M882,101.3 L887.5,106.1 L882,110.9 Z" fill="#f0e818"/>
<path d="M882,188.1 L887.5,192.9 L882,197.7 Z" fill="#1a8a3a"/>
<path d="M882,198.5 L887.5,203.3 L882,208.1 Z" fill="#111"/>
</g></svg>
<div class="t" style="left:599.50px;top:72.08px;font-size:7px;line-height:9px;font-weight:bold;color:#161616;transform:scaleX(1.2704);transform-origin:0 0;-webkit-text-stroke:0.25px #161616">1000.0</div>
<div class="t" style="left:599.50px;top:86.39px;font-size:7px;line-height:9px;font-weight:bold;color:#161616;transform:scaleX(1.2445);transform-origin:0 0;-webkit-text-stroke:0.25px #161616">888.0</div>
<div class="t" style="left:599.50px;top:100.70px;font-size:7px;line-height:9px;font-weight:bold;color:#161616;transform:scaleX(1.2445);transform-origin:0 0;-webkit-text-stroke:0.25px #161616">776.0</div>
<div class="t" style="left:599.50px;top:115.01px;font-size:7px;line-height:9px;font-weight:bold;color:#161616;transform:scaleX(1.2445);transform-origin:0 0;-webkit-text-stroke:0.25px #161616">664.0</div>
<div class="t" style="left:599.50px;top:129.32px;font-size:7px;line-height:9px;font-weight:bold;color:#161616;transform:scaleX(1.2445);transform-origin:0 0;-webkit-text-stroke:0.25px #161616">552.0</div>
<div class="t" style="left:599.50px;top:143.63px;font-size:7px;line-height:9px;font-weight:bold;color:#161616;transform:scaleX(1.2445);transform-origin:0 0;-webkit-text-stroke:0.25px #161616">440.0</div>
<div class="t" style="left:599.50px;top:157.94px;font-size:7px;line-height:9px;font-weight:bold;color:#161616;transform:scaleX(1.2445);transform-origin:0 0;-webkit-text-stroke:0.25px #161616">328.0</div>
<div class="t" style="left:599.50px;top:172.25px;font-size:7px;line-height:9px;font-weight:bold;color:#161616;transform:scaleX(1.2445);transform-origin:0 0;-webkit-text-stroke:0.25px #161616">216.0</div>
<div class="t" style="left:599.50px;top:186.56px;font-size:7px;line-height:9px;font-weight:bold;color:#161616;transform:scaleX(1.2445);transform-origin:0 0;-webkit-text-stroke:0.25px #161616">104.0</div>
<div class="t" style="left:599.50px;top:200.87px;font-size:7px;line-height:9px;font-weight:bold;color:#161616;transform:scaleX(1.1938);transform-origin:0 0;-webkit-text-stroke:0.25px #161616">-8.0</div>
<div class="t" style="left:599.50px;top:215.18px;font-size:7px;line-height:9px;font-weight:bold;color:#161616;transform:scaleX(1.2646);transform-origin:0 0;-webkit-text-stroke:0.25px #161616">-120.0</div>
<div class="t" style="left:589.80px;top:237.91px;font-size:7.6px;line-height:10px;color:#2434b8;transform:scaleX(1.0922);transform-origin:0 0;">Tag1</div>
<div class="t" style="left:661.50px;top:72.08px;font-size:7px;line-height:9px;font-weight:bold;color:#161616;transform:scaleX(1.2704);transform-origin:0 0;-webkit-text-stroke:0.25px #161616">1000.0</div>
<div class="t" style="left:661.50px;top:86.39px;font-size:7px;line-height:9px;font-weight:bold;color:#161616;transform:scaleX(1.2445);transform-origin:0 0;-webkit-text-stroke:0.25px #161616">888.0</div>
<div class="t" style="left:661.50px;top:100.70px;font-size:7px;line-height:9px;font-weight:bold;color:#161616;transform:scaleX(1.2445);transform-origin:0 0;-webkit-text-stroke:0.25px #161616">776.0</div>
<div class="t" style="left:661.50px;top:115.01px;font-size:7px;line-height:9px;font-weight:bold;color:#161616;transform:scaleX(1.2445);transform-origin:0 0;-webkit-text-stroke:0.25px #161616">664.0</div>
<div class="t" style="left:661.50px;top:129.32px;font-size:7px;line-height:9px;font-weight:bold;color:#161616;transform:scaleX(1.2445);transform-origin:0 0;-webkit-text-stroke:0.25px #161616">552.0</div>
<div class="t" style="left:661.50px;top:143.63px;font-size:7px;line-height:9px;font-weight:bold;color:#161616;transform:scaleX(1.2445);transform-origin:0 0;-webkit-text-stroke:0.25px #161616">440.0</div>
<div class="t" style="left:661.50px;top:157.94px;font-size:7px;line-height:9px;font-weight:bold;color:#161616;transform:scaleX(1.2445);transform-origin:0 0;-webkit-text-stroke:0.25px #161616">328.0</div>
<div class="t" style="left:661.50px;top:172.25px;font-size:7px;line-height:9px;font-weight:bold;color:#161616;transform:scaleX(1.2445);transform-origin:0 0;-webkit-text-stroke:0.25px #161616">216.0</div>
<div class="t" style="left:661.50px;top:186.56px;font-size:7px;line-height:9px;font-weight:bold;color:#161616;transform:scaleX(1.2445);transform-origin:0 0;-webkit-text-stroke:0.25px #161616">104.0</div>
<div class="t" style="left:661.50px;top:200.87px;font-size:7px;line-height:9px;font-weight:bold;color:#161616;transform:scaleX(1.1938);transform-origin:0 0;-webkit-text-stroke:0.25px #161616">-8.0</div>
<div class="t" style="left:661.50px;top:215.18px;font-size:7px;line-height:9px;font-weight:bold;color:#161616;transform:scaleX(1.2646);transform-origin:0 0;-webkit-text-stroke:0.25px #161616">-120.0</div>
<div class="t" style="left:651.80px;top:237.91px;font-size:7.6px;line-height:10px;color:#34c034;transform:scaleX(1.0922);transform-origin:0 0;">Tag2</div>
<div class="t" style="left:723.50px;top:72.08px;font-size:7px;line-height:9px;font-weight:bold;color:#161616;transform:scaleX(1.2704);transform-origin:0 0;-webkit-text-stroke:0.25px #161616">1000.0</div>
<div class="t" style="left:723.50px;top:86.39px;font-size:7px;line-height:9px;font-weight:bold;color:#161616;transform:scaleX(1.2445);transform-origin:0 0;-webkit-text-stroke:0.25px #161616">888.0</div>
<div class="t" style="left:723.50px;top:100.70px;font-size:7px;line-height:9px;font-weight:bold;color:#161616;transform:scaleX(1.2445);transform-origin:0 0;-webkit-text-stroke:0.25px #161616">776.0</div>
<div class="t" style="left:723.50px;top:115.01px;font-size:7px;line-height:9px;font-weight:bold;color:#161616;transform:scaleX(1.2445);transform-origin:0 0;-webkit-text-stroke:0.25px #161616">664.0</div>
<div class="t" style="left:723.50px;top:129.32px;font-size:7px;line-height:9px;font-weight:bold;color:#161616;transform:scaleX(1.2445);transform-origin:0 0;-webkit-text-stroke:0.25px #161616">552.0</div>
<div class="t" style="left:723.50px;top:143.63px;font-size:7px;line-height:9px;font-weight:bold;color:#161616;transform:scaleX(1.2445);transform-origin:0 0;-webkit-text-stroke:0.25px #161616">440.0</div>
<div class="t" style="left:723.50px;top:157.94px;font-size:7px;line-height:9px;font-weight:bold;color:#161616;transform:scaleX(1.2445);transform-origin:0 0;-webkit-text-stroke:0.25px #161616">328.0</div>
<div class="t" style="left:723.50px;top:172.25px;font-size:7px;line-height:9px;font-weight:bold;color:#161616;transform:scaleX(1.2445);transform-origin:0 0;-webkit-text-stroke:0.25px #161616">216.0</div>
<div class="t" style="left:723.50px;top:186.56px;font-size:7px;line-height:9px;font-weight:bold;color:#161616;transform:scaleX(1.2445);transform-origin:0 0;-webkit-text-stroke:0.25px #161616">104.0</div>
<div class="t" style="left:723.50px;top:200.87px;font-size:7px;line-height:9px;font-weight:bold;color:#161616;transform:scaleX(1.1938);transform-origin:0 0;-webkit-text-stroke:0.25px #161616">-8.0</div>
<div class="t" style="left:723.50px;top:215.18px;font-size:7px;line-height:9px;font-weight:bold;color:#161616;transform:scaleX(1.2646);transform-origin:0 0;-webkit-text-stroke:0.25px #161616">-120.0</div>
<div class="t" style="left:713.80px;top:237.91px;font-size:7.6px;line-height:10px;color:#44c4d4;transform:scaleX(1.0922);transform-origin:0 0;">Tag3</div>
<div class="t" style="left:785.50px;top:72.08px;font-size:7px;line-height:9px;font-weight:bold;color:#161616;transform:scaleX(1.2704);transform-origin:0 0;-webkit-text-stroke:0.25px #161616">1000.0</div>
<div class="t" style="left:785.50px;top:86.39px;font-size:7px;line-height:9px;font-weight:bold;color:#161616;transform:scaleX(1.2445);transform-origin:0 0;-webkit-text-stroke:0.25px #161616">888.0</div>
<div class="t" style="left:785.50px;top:100.70px;font-size:7px;line-height:9px;font-weight:bold;color:#161616;transform:scaleX(1.2445);transform-origin:0 0;-webkit-text-stroke:0.25px #161616">776.0</div>
<div class="t" style="left:785.50px;top:115.01px;font-size:7px;line-height:9px;font-weight:bold;color:#161616;transform:scaleX(1.2445);transform-origin:0 0;-webkit-text-stroke:0.25px #161616">664.0</div>
<div class="t" style="left:785.50px;top:129.32px;font-size:7px;line-height:9px;font-weight:bold;color:#161616;transform:scaleX(1.2445);transform-origin:0 0;-webkit-text-stroke:0.25px #161616">552.0</div>
<div class="t" style="left:785.50px;top:143.63px;font-size:7px;line-height:9px;font-weight:bold;color:#161616;transform:scaleX(1.2445);transform-origin:0 0;-webkit-text-stroke:0.25px #161616">440.0</div>
<div class="t" style="left:785.50px;top:157.94px;font-size:7px;line-height:9px;font-weight:bold;color:#161616;transform:scaleX(1.2445);transform-origin:0 0;-webkit-text-stroke:0.25px #161616">328.0</div>
<div class="t" style="left:785.50px;top:172.25px;font-size:7px;line-height:9px;font-weight:bold;color:#161616;transform:scaleX(1.2445);transform-origin:0 0;-webkit-text-stroke:0.25px #161616">216.0</div>
<div class="t" style="left:785.50px;top:186.56px;font-size:7px;line-height:9px;font-weight:bold;color:#161616;transform:scaleX(1.2445);transform-origin:0 0;-webkit-text-stroke:0.25px #161616">104.0</div>
<div class="t" style="left:785.50px;top:200.87px;font-size:7px;line-height:9px;font-weight:bold;color:#161616;transform:scaleX(1.1938);transform-origin:0 0;-webkit-text-stroke:0.25px #161616">-8.0</div>
<div class="t" style="left:785.50px;top:215.18px;font-size:7px;line-height:9px;font-weight:bold;color:#161616;transform:scaleX(1.2646);transform-origin:0 0;-webkit-text-stroke:0.25px #161616">-120.0</div>
<div class="t" style="left:775.80px;top:237.91px;font-size:7.6px;line-height:10px;color:#e42222;transform:scaleX(1.0922);transform-origin:0 0;">Tag4</div>
<div class="t" style="left:847.50px;top:72.08px;font-size:7px;line-height:9px;font-weight:bold;color:#161616;transform:scaleX(1.2704);transform-origin:0 0;-webkit-text-stroke:0.25px #161616">1000.0</div>
<div class="t" style="left:847.50px;top:86.39px;font-size:7px;line-height:9px;font-weight:bold;color:#161616;transform:scaleX(1.2445);transform-origin:0 0;-webkit-text-stroke:0.25px #161616">888.0</div>
<div class="t" style="left:847.50px;top:100.70px;font-size:7px;line-height:9px;font-weight:bold;color:#161616;transform:scaleX(1.2445);transform-origin:0 0;-webkit-text-stroke:0.25px #161616">776.0</div>
<div class="t" style="left:847.50px;top:115.01px;font-size:7px;line-height:9px;font-weight:bold;color:#161616;transform:scaleX(1.2445);transform-origin:0 0;-webkit-text-stroke:0.25px #161616">664.0</div>
<div class="t" style="left:847.50px;top:129.32px;font-size:7px;line-height:9px;font-weight:bold;color:#161616;transform:scaleX(1.2445);transform-origin:0 0;-webkit-text-stroke:0.25px #161616">552.0</div>
<div class="t" style="left:847.50px;top:143.63px;font-size:7px;line-height:9px;font-weight:bold;color:#161616;transform:scaleX(1.2445);transform-origin:0 0;-webkit-text-stroke:0.25px #161616">440.0</div>
<div class="t" style="left:847.50px;top:157.94px;font-size:7px;line-height:9px;font-weight:bold;color:#161616;transform:scaleX(1.2445);transform-origin:0 0;-webkit-text-stroke:0.25px #161616">328.0</div>
<div class="t" style="left:847.50px;top:172.25px;font-size:7px;line-height:9px;font-weight:bold;color:#161616;transform:scaleX(1.2445);transform-origin:0 0;-webkit-text-stroke:0.25px #161616">216.0</div>
<div class="t" style="left:847.50px;top:186.56px;font-size:7px;line-height:9px;font-weight:bold;color:#161616;transform:scaleX(1.2445);transform-origin:0 0;-webkit-text-stroke:0.25px #161616">104.0</div>
<div class="t" style="left:847.50px;top:200.87px;font-size:7px;line-height:9px;font-weight:bold;color:#161616;transform:scaleX(1.1938);transform-origin:0 0;-webkit-text-stroke:0.25px #161616">-8.0</div>
<div class="t" style="left:847.50px;top:215.18px;font-size:7px;line-height:9px;font-weight:bold;color:#161616;transform:scaleX(1.2646);transform-origin:0 0;-webkit-text-stroke:0.25px #161616">-120.0</div>
<div class="t" style="left:837.80px;top:237.91px;font-size:7.6px;line-height:10px;color:#b434c4;transform:scaleX(1.0922);transform-origin:0 0;">Tag5</div>
<div class="t" style="left:909.50px;top:72.08px;font-size:7px;line-height:9px;font-weight:bold;color:#161616;transform:scaleX(1.2704);transform-origin:0 0;-webkit-text-stroke:0.25px #161616">1000.0</div>
<div class="t" style="left:909.50px;top:86.39px;font-size:7px;line-height:9px;font-weight:bold;color:#161616;transform:scaleX(1.2445);transform-origin:0 0;-webkit-text-stroke:0.25px #161616">888.0</div>
<div class="t" style="left:909.50px;top:100.70px;font-size:7px;line-height:9px;font-weight:bold;color:#161616;transform:scaleX(1.2445);transform-origin:0 0;-webkit-text-stroke:0.25px #161616">776.0</div>
<div class="t" style="left:909.50px;top:115.01px;font-size:7px;line-height:9px;font-weight:bold;color:#161616;transform:scaleX(1.2445);transform-origin:0 0;-webkit-text-stroke:0.25px #161616">664.0</div>
<div class="t" style="left:909.50px;top:129.32px;font-size:7px;line-height:9px;font-weight:bold;color:#161616;transform:scaleX(1.2445);transform-origin:0 0;-webkit-text-stroke:0.25px #161616">552.0</div>
<div class="t" style="left:909.50px;top:143.63px;font-size:7px;line-height:9px;font-weight:bold;color:#161616;transform:scaleX(1.2445);transform-origin:0 0;-webkit-text-stroke:0.25px #161616">440.0</div>
<div class="t" style="left:909.50px;top:157.94px;font-size:7px;line-height:9px;font-weight:bold;color:#161616;transform:scaleX(1.2445);transform-origin:0 0;-webkit-text-stroke:0.25px #161616">328.0</div>
<div class="t" style="left:909.50px;top:172.25px;font-size:7px;line-height:9px;font-weight:bold;color:#161616;transform:scaleX(1.2445);transform-origin:0 0;-webkit-text-stroke:0.25px #161616">216.0</div>
<div class="t" style="left:909.50px;top:186.56px;font-size:7px;line-height:9px;font-weight:bold;color:#161616;transform:scaleX(1.2445);transform-origin:0 0;-webkit-text-stroke:0.25px #161616">104.0</div>
<div class="t" style="left:909.50px;top:200.87px;font-size:7px;line-height:9px;font-weight:bold;color:#161616;transform:scaleX(1.1938);transform-origin:0 0;-webkit-text-stroke:0.25px #161616">-8.0</div>
<div class="t" style="left:909.50px;top:215.18px;font-size:7px;line-height:9px;font-weight:bold;color:#161616;transform:scaleX(1.2646);transform-origin:0 0;-webkit-text-stroke:0.25px #161616">-120.0</div>
<div class="t" style="left:899.80px;top:237.91px;font-size:7.6px;line-height:10px;color:#e4d424;transform:scaleX(1.0922);transform-origin:0 0;">Tag6</div>

<!-- ============ Digital window ============ -->
<div class="win" style="left:-2px;top:284px;width:512px;height:242px"></div>
<div class="t" style="left:19.00px;top:292.17px;font-size:9.6px;line-height:12px;color:#3c4452;transform:scaleX(0.8936);transform-origin:0 0;-webkit-text-stroke:0.15px #3c4452">Digital-Page1</div>
<svg class="a" style="left:4.5px;top:290.3px" width="13" height="14"><rect x="0" y="0" width="11.5" height="13.5" fill="#101058" stroke="#30308a" stroke-width="0.6"/><text x="1" y="11.3" font-family="Liberation Sans" font-size="11" fill="#a040c0" textLength="3" lengthAdjust="spacingAndGlyphs">1</text><text x="4" y="11.3" font-family="Liberation Sans" font-size="11" fill="#30b040" textLength="3.6" lengthAdjust="spacingAndGlyphs">2</text><text x="7.5" y="11.3" font-family="Liberation Sans" font-size="11" fill="#d0b830" textLength="3.6" lengthAdjust="spacingAndGlyphs">3</text></svg>
<svg class="a" style="left:427.3px;top:290px" width="76" height="15">
<defs><linearGradient id="bg" x1="0" y1="0" x2="0" y2="1"><stop offset="0" stop-color="#d6e0ec"/><stop offset="1" stop-color="#c4d2e2"/></linearGradient></defs>
<rect x="1.5" y="1.5" width="21.5" height="11.5" rx="2" fill="url(#bg)" stroke="#8a98b6" stroke-width="1.4"/>
<rect x="26.1" y="1.5" width="21.5" height="11.5" rx="2" fill="url(#bg)" stroke="#8a98b6" stroke-width="1.4"/>
<rect x="50.3" y="1.5" width="21.5" height="11.5" rx="2" fill="url(#bg)" stroke="#8a98b6" stroke-width="1.4"/>
<rect x="8.5" y="6" width="9" height="3.6" rx="1.8" fill="#f4f4f4" stroke="#5a6070" stroke-width="1"/>
<rect x="33.6" y="3.6" width="7.4" height="6.4" rx="1.8" fill="#ececec" stroke="#5e6474" stroke-width="1.3"/>
<rect x="35.5" y="6" width="3.2" height="1.4" fill="#4a5060"/>
<path d="M58.2,4.6 L63.6,9.8 M63.6,4.6 L58.2,9.8" stroke="#5e6474" stroke-width="3.4" stroke-linecap="round"/>
<path d="M58.2,4.6 L63.6,9.8 M63.6,4.6 L58.2,9.8" stroke="#eeeeee" stroke-width="1.6"/>
</svg>
<div class="a" style="left:2px;top:307px;width:250px;height:70px;background:#1f47a0"></div>
<div class="t" style="left:6.30px;top:307.10px;font-size:12.3px;line-height:15px;color:#d2c44a;transform:scaleX(0.9748);transform-origin:0 0;">Tag1</div>
<div class="t" style="left:93.40px;top:328.68px;font-size:25.3px;line-height:30px;font-weight:bold;color:#f4ec2c;transform:scaleX(1.0614);transform-origin:0 0;-webkit-text-stroke:0.45px #f4ec2c">396.1</div>
<div class="t" style="left:240.40px;top:363.90px;font-size:11.5px;line-height:14px;color:#c8b850;transform:scaleX(0.9780);transform-origin:0 0;">%</div>
<div class="a" style="left:252px;top:307px;width:250px;height:70px;background:#6ab42d"></div>
<div class="t" style="left:256.30px;top:307.10px;font-size:12.3px;line-height:15px;color:#9a4898;transform:scaleX(0.9748);transform-origin:0 0;">Tag2</div>
<div class="t" style="left:343.40px;top:328.68px;font-size:25.3px;line-height:30px;font-weight:bold;color:#a552a2;transform:scaleX(1.0614);transform-origin:0 0;-webkit-text-stroke:0.45px #a552a2">401.6</div>
<div class="t" style="left:490.40px;top:363.90px;font-size:11.5px;line-height:14px;color:#6a4880;transform:scaleX(0.9780);transform-origin:0 0;">%</div>
<div class="a" style="left:2px;top:377px;width:250px;height:72px;background:#6ec6d5"></div>
<div class="t" style="left:6.30px;top:377.10px;font-size:12.3px;line-height:15px;color:#b02a2a;transform:scaleX(0.9748);transform-origin:0 0;">Tag3</div>
<div class="t" style="left:93.40px;top:398.68px;font-size:25.3px;line-height:30px;font-weight:bold;color:#e51d1d;transform:scaleX(1.0614);transform-origin:0 0;-webkit-text-stroke:0.45px #e51d1d">407.0</div>
<div class="t" style="left:240.40px;top:435.90px;font-size:11.5px;line-height:14px;color:#5a4040;transform:scaleX(0.9780);transform-origin:0 0;">%</div>
<div class="a" style="left:252px;top:377px;width:250px;height:72px;background:#e5161b"></div>
<div class="t" style="left:256.30px;top:377.10px;font-size:12.3px;line-height:15px;color:#68c0cc;transform:scaleX(0.9748);transform-origin:0 0;">Tag4</div>
<div class="t" style="left:343.40px;top:398.68px;font-size:25.3px;line-height:30px;font-weight:bold;color:#6ec6d5;transform:scaleX(1.0614);transform-origin:0 0;-webkit-text-stroke:0.45px #6ec6d5">412.5</div>
<div class="t" style="left:490.40px;top:435.90px;font-size:11.5px;line-height:14px;color:#5aa8b8;transform:scaleX(0.9780);transform-origin:0 0;">%</div>
<div class="a" style="left:2px;top:449px;width:250px;height:71px;background:#a5519c"></div>
<div class="t" style="left:6.30px;top:449.10px;font-size:12.3px;line-height:15px;color:#4e8848;transform:scaleX(0.9748);transform-origin:0 0;">Tag5</div>
<div class="t" style="left:93.40px;top:470.68px;font-size:25.3px;line-height:30px;font-weight:bold;color:#6ab42d;transform:scaleX(1.0614);transform-origin:0 0;-webkit-text-stroke:0.45px #6ab42d">418.0</div>
<div class="t" style="left:240.40px;top:506.90px;font-size:11.5px;line-height:14px;color:#506a50;transform:scaleX(0.9780);transform-origin:0 0;">%</div>
<div class="a" style="left:252px;top:449px;width:250px;height:71px;background:#efe936"></div>
<div class="t" style="left:256.30px;top:449.10px;font-size:12.3px;line-height:15px;color:#283080;transform:scaleX(0.9748);transform-origin:0 0;">Tag6</div>
<div class="t" style="left:343.40px;top:470.68px;font-size:25.3px;line-height:30px;font-weight:bold;color:#1f47a0;transform:scaleX(1.0614);transform-origin:0 0;-webkit-text-stroke:0.45px #1f47a0">423.5</div>
<div class="t" style="left:490.40px;top:506.90px;font-size:11.5px;line-height:14px;color:#303060;transform:scaleX(0.9780);transform-origin:0 0;">%</div>

<!-- ============ Trend window ============ -->
<div class="win" style="left:502px;top:284px;width:501px;height:242px"></div>
<div class="t" style="left:525.00px;top:292.17px;font-size:9.6px;line-height:12px;color:#3c4452;transform:scaleX(0.8621);transform-origin:0 0;-webkit-text-stroke:0.15px #3c4452">Trend-Page1</div>
<svg class="a" style="left:510px;top:290.5px" width="13" height="14"><rect x="0" y="0" width="12" height="13.5" rx="1" fill="#1a2a9a"/><rect x="1.5" y="2" width="9" height="9.5" fill="#f0f0f8"/><polyline points="2,7 3.5,9 6,5 7.5,8 10,3" fill="none" stroke="#3040c0" stroke-width="1.2"/><polyline points="2,9.5 3.5,8 5,10 7.5,6.5 10,8" fill="none" stroke="#e02828" stroke-width="1.3"/><rect x="2" y="10.3" width="8" height="1" fill="#888"/></svg>
<svg class="a" style="left:932.6px;top:290px" width="76" height="15">
<defs><linearGradient id="bg" x1="0" y1="0" x2="0" y2="1"><stop offset="0" stop-color="#d6e0ec"/><stop offset="1" stop-color="#c4d2e2"/></linearGradient></defs>
<rect x="1.5" y="1.5" width="21.5" height="11.5" rx="2" fill="url(#bg)" stroke="#8a98b6" stroke-width="1.4"/>
<rect x="26.1" y="1.5" width="21.5" height="11.5" rx="2" fill="url(#bg)" stroke="#8a98b6" stroke-width="1.4"/>
<rect x="50.3" y="1.5" width="21.5" height="11.5" rx="2" fill="url(#bg)" stroke="#8a98b6" stroke-width="1.4"/>
<rect x="8.5" y="6" width="9" height="3.6" rx="1.8" fill="#f4f4f4" stroke="#5a6070" stroke-width="1"/>
<rect x="33.6" y="3.6" width="7.4" height="6.4" rx="1.8" fill="#ececec" stroke="#5e6474" stroke-width="1.3"/>
<rect x="35.5" y="6" width="3.2" height="1.4" fill="#4a5060"/>
<path d="M58.2,4.6 L63.6,9.8 M63.6,4.6 L58.2,9.8" stroke="#5e6474" stroke-width="3.4" stroke-linecap="round"/>
<path d="M58.2,4.6 L63.6,9.8 M63.6,4.6 L58.2,9.8" stroke="#eeeeee" stroke-width="1.6"/>
</svg>
<div class="a" style="left:509px;top:306px;width:36px;height:164px;background:#efefef"></div>
<div class="a" style="left:544px;top:306.5px;width:456px;height:163px;background:#0b0807"></div>
<div class="a" style="left:509px;top:469.5px;width:491px;height:51px;background:#7c7d7c;border-top:1.2px solid #6a6a6a"></div>
<svg class="a" style="left:0;top:0" width="1000" height="538">
<line x1="546" y1="322.72" x2="1000" y2="322.72" stroke="#6a6a6a" stroke-width="1" stroke-dasharray="2,2.5"/>
<line x1="546" y1="338.64" x2="1000" y2="338.64" stroke="#6a6a6a" stroke-width="1" stroke-dasharray="2,2.5"/>
<line x1="546" y1="354.56" x2="1000" y2="354.56" stroke="#6a6a6a" stroke-width="1" stroke-dasharray="2,2.5"/>
<line x1="546" y1="370.48" x2="1000" y2="370.48" stroke="#6a6a6a" stroke-width="1" stroke-dasharray="2,2.5"/>
<line x1="546" y1="386.40" x2="1000" y2="386.40" stroke="#6a6a6a" stroke-width="1" stroke-dasharray="2,2.5"/>
<line x1="546" y1="402.32" x2="1000" y2="402.32" stroke="#6a6a6a" stroke-width="1" stroke-dasharray="2,2.5"/>
<line x1="546" y1="418.24" x2="1000" y2="418.24" stroke="#6a6a6a" stroke-width="1" stroke-dasharray="2,2.5"/>
<line x1="546" y1="434.16" x2="1000" y2="434.16" stroke="#6a6a6a" stroke-width="1" stroke-dasharray="2,2.5"/>
<line x1="546" y1="450.08" x2="1000" y2="450.08" stroke="#6a6a6a" stroke-width="1" stroke-dasharray="2,2.5"/>
<line x1="546" y1="466.00" x2="1000" y2="466.00" stroke="#6a6a6a" stroke-width="1" stroke-dasharray="2,2.5"/>
<line x1="561.5" y1="308" x2="561.5" y2="469" stroke="#6a6a6a" stroke-width="1" stroke-dasharray="2,2.5"/>
<line x1="635.5" y1="308" x2="635.5" y2="469" stroke="#6a6a6a" stroke-width="1" stroke-dasharray="2,2.5"/>
<line x1="709.5" y1="308" x2="709.5" y2="469" stroke="#6a6a6a" stroke-width="1" stroke-dasharray="2,2.5"/>
<line x1="783.5" y1="308" x2="783.5" y2="469" stroke="#6a6a6a" stroke-width="1" stroke-dasharray="2,2.5"/>
<line x1="857.5" y1="308" x2="857.5" y2="469" stroke="#6a6a6a" stroke-width="1" stroke-dasharray="2,2.5"/>
<line x1="931.5" y1="308" x2="931.5" y2="469" stroke="#6a6a6a" stroke-width="1" stroke-dasharray="2,2.5"/>
<line x1="1005.5" y1="308" x2="1005.5" y2="469" stroke="#6a6a6a" stroke-width="1" stroke-dasharray="2,2.5"/>
<line x1="544" y1="307" x2="1000" y2="307" stroke="#d8d8d8" stroke-width="1.2" stroke-dasharray="1.5,1.5"/>
<line x1="544" y1="306.5" x2="544" y2="469" stroke="#d8d8d8" stroke-width="1" stroke-dasharray="1.5,2.5"/>
<polyline points="544.0,369.64 544.5,369.92 545.0,370.21 545.5,370.50 546.0,370.79 546.5,371.08 547.0,371.38 547.5,371.67 548.0,371.97 548.5,372.27 549.0,372.57 549.5,372.87 550.0,373.18 550.5,373.48 551.0,373.79 551.5,374.10 552.0,374.41 552.5,374.72 553.0,375.03 553.5,375.34 554.0,375.66 554.5,375.98 555.0,376.29 555.5,376.61 556.0,376.93 556.5,377.25 557.0,377.57 557.5,377.90 558.0,378.22 558.5,378.54 559.0,378.87 559.5,379.20 560.0,379.52 560.5,379.85 561.0,380.18 561.5,380.51 562.0,380.84 562.5,381.17 563.0,381.50 563.5,381.83 564.0,382.16 564.5,382.49 565.0,382.83 565.5,383.16 566.0,383.49 566.5,383.83 567.0,384.16 567.5,384.49 568.0,384.83 568.5,385.16 569.0,385.50 569.5,385.83 570.0,386.16 570.5,386.47 571.0,386.78 571.5,387.09 572.0,387.40 572.5,387.71 573.0,388.02 573.5,388.33 574.0,388.64 574.5,388.95 575.0,389.26 575.5,389.57 576.0,389.87 576.5,390.18 577.0,390.49 577.5,390.80 578.0,391.10 578.5,391.41 579.0,391.71 579.5,392.02 580.0,392.32 580.5,392.62 581.0,392.93 581.5,393.23 582.0,393.53 582.5,393.83 583.0,394.13 583.5,394.43 584.0,394.72 584.5,395.02 585.0,395.31 585.5,395.61 586.0,395.90 586.5,396.19 587.0,396.48 587.5,396.77 588.0,397.06 588.5,397.34 589.0,397.63 589.5,397.91 590.0,398.19 590.5,398.48 591.0,398.76 591.5,399.03 592.0,399.31 592.5,399.58 593.0,399.86 593.5,400.13 594.0,400.40 594.5,400.67 595.0,400.94 595.5,401.20 596.0,401.46 596.5,401.72 597.0,401.98 597.5,402.24 598.0,402.50 598.5,402.75 599.0,403.00 599.5,403.25 600.0,403.50 600.5,403.75 601.0,403.99 601.5,404.23 602.0,404.47 602.5,404.71 603.0,404.95 603.5,405.18 604.0,405.41 604.5,405.64 605.0,405.86 605.5,406.09 606.0,406.31 606.5,406.53 607.0,406.75 607.5,406.96 608.0,407.17 608.5,407.38 609.0,407.59 609.5,407.79 610.0,408.00 610.5,408.19 611.0,408.39 611.5,408.59 612.0,408.78 612.5,408.97 613.0,409.15 613.5,409.34 614.0,409.52 614.5,409.70 615.0,409.87 615.5,410.04 616.0,410.21 616.5,410.38 617.0,410.54 617.5,410.71 618.0,410.86 618.5,411.02 619.0,411.17 619.5,411.32 620.0,411.47 620.5,411.61 621.0,411.75 621.5,411.89 622.0,412.02 622.5,412.16 623.0,412.28 623.5,412.41 624.0,412.53 624.5,412.65 625.0,412.77 625.5,412.88 626.0,412.99 626.5,413.10 627.0,413.20 627.5,413.30 628.0,413.40 628.5,413.49 629.0,413.59 629.5,413.67 630.0,413.76 630.5,413.84 631.0,413.92 631.5,413.99 632.0,414.06 632.5,414.13 633.0,414.20 633.5,414.26 634.0,414.32 634.5,414.37 635.0,414.42 635.5,414.47 636.0,414.52 636.5,414.56 637.0,414.60 637.5,414.63 638.0,414.66 638.5,414.69 639.0,414.72 639.5,414.74 640.0,414.76 640.5,414.77 641.0,414.78 641.5,414.79 642.0,414.80 642.5,414.80 643.0,414.80 643.5,414.79 644.0,414.78 644.5,414.77 645.0,414.76 645.5,414.74 646.0,414.72 646.5,414.69 647.0,414.66 647.5,414.63 648.0,414.60 648.5,414.56 649.0,414.52 649.5,414.47 650.0,414.42 650.5,414.37 651.0,414.32 651.5,414.26 652.0,414.20 652.5,414.13 653.0,414.06 653.5,413.99 654.0,413.92 654.5,413.84 655.0,413.76 655.5,413.67 656.0,413.59 656.5,413.49 657.0,413.40 657.5,413.30 658.0,413.20 658.5,413.10 659.0,412.99 659.5,412.88 660.0,412.77 660.5,412.65 661.0,412.53 661.5,412.41 662.0,412.28 662.5,412.16 663.0,412.02 663.5,411.89 664.0,411.75 664.5,411.61 665.0,411.47 665.5,411.32 666.0,411.17 666.5,411.02 667.0,410.86 667.5,410.71 668.0,410.54 668.5,410.38 669.0,410.21 669.5,410.04 670.0,409.87 670.5,409.70 671.0,409.52 671.5,409.34 672.0,409.15 672.5,408.97 673.0,408.78 673.5,408.59 674.0,408.39 674.5,408.19 675.0,408.00 675.5,407.79 676.0,407.59 676.5,407.38 677.0,407.17 677.5,406.96 678.0,406.75 678.5,406.53 679.0,406.31 679.5,406.09 680.0,405.86 680.5,405.64 681.0,405.41 681.5,405.18 682.0,404.95 682.5,404.71 683.0,404.47 683.5,404.23 684.0,403.99 684.5,403.75 685.0,403.50 685.5,403.25 686.0,403.00 686.5,402.75 687.0,402.50 687.5,402.24 688.0,401.98 688.5,401.72 689.0,401.46 689.5,401.20 690.0,400.94 690.5,400.67 691.0,400.40 691.5,400.13 692.0,399.86 692.5,399.58 693.0,399.31 693.5,399.03 694.0,398.76 694.5,398.48 695.0,398.19 695.5,397.91 696.0,397.63 696.5,397.34 697.0,397.06 697.5,396.77 698.0,396.48 698.5,396.19 699.0,395.90 699.5,395.61 700.0,395.31 700.5,395.02 701.0,394.72 701.5,394.43 702.0,394.13 702.5,393.83 703.0,393.53 703.5,393.23 704.0,392.93 704.5,392.62 705.0,392.32 705.5,392.02 706.0,391.71 706.5,391.41 707.0,391.10 707.5,390.80 708.0,390.49 708.5,390.18 709.0,389.87 709.5,389.57 710.0,389.26 710.5,388.95 711.0,388.64 711.5,388.33 712.0,388.02 712.5,387.71 713.0,387.40 713.5,387.09 714.0,386.78 714.5,386.47 715.0,386.16 715.5,385.83 716.0,385.50 716.5,385.16 717.0,384.83 717.5,384.49 718.0,384.16 718.5,383.83 719.0,383.49 719.5,383.16 720.0,382.83 720.5,382.49 721.0,382.16 721.5,381.83 722.0,381.50 722.5,381.17 723.0,380.84 723.5,380.51 724.0,380.18 724.5,379.85 725.0,379.52 725.5,379.20 726.0,378.87 726.5,378.54 727.0,378.22 727.5,377.90 728.0,377.57 728.5,377.25 729.0,376.93 729.5,376.61 730.0,376.29 730.5,375.98 731.0,375.66 731.5,375.34 732.0,375.03 732.5,374.72 733.0,374.41 733.5,374.10 734.0,373.79 734.5,373.48 735.0,373.18 735.5,372.87 736.0,372.57 736.5,372.27 737.0,371.97 737.5,371.67 738.0,371.38 738.5,371.08 739.0,370.79 739.5,370.50 740.0,370.21 740.5,369.92 741.0,369.64 741.5,369.36 742.0,369.07 742.5,368.79 743.0,368.52 743.5,368.24 744.0,367.97 744.5,367.70 745.0,367.43 745.5,367.16 746.0,366.90 746.5,366.63 747.0,366.37 747.5,366.12 748.0,365.86 748.5,365.61 749.0,365.36 749.5,365.11 750.0,364.86 750.5,364.62 751.0,364.38 751.5,364.14 752.0,363.90 752.5,363.67 753.0,363.44 753.5,363.21 754.0,362.98 754.5,362.76 755.0,362.54 755.5,362.32 756.0,362.11 756.5,361.90 757.0,361.69 757.5,361.48 758.0,361.28 758.5,361.08 759.0,360.88 759.5,360.69 760.0,360.49 760.5,360.31 761.0,360.12 761.5,359.94 762.0,359.76 762.5,359.58 763.0,359.41 763.5,359.24 764.0,359.07 764.5,358.91 765.0,358.74 765.5,358.59 766.0,358.43 766.5,358.28 767.0,358.13 767.5,357.99 768.0,357.85 768.5,357.71 769.0,357.57 769.5,357.44 770.0,357.31 770.5,357.19 771.0,357.07 771.5,356.95 772.0,356.83 772.5,356.72 773.0,356.61 773.5,356.51 774.0,356.41 774.5,356.31 775.0,356.21 775.5,356.12 776.0,356.03 776.5,355.95 777.0,355.87 777.5,355.79 778.0,355.72 778.5,355.65 779.0,355.58 779.5,355.52 780.0,355.46 780.5,355.41 781.0,355.35 781.5,355.30 782.0,355.26 782.5,355.22 783.0,355.18 783.5,355.15 784.0,355.12 784.5,355.09 785.0,355.07 785.5,355.05 786.0,355.03 786.5,355.02 787.0,355.01 787.5,355.00 788.0,355.00 788.5,355.00 789.0,355.01 789.5,355.02 790.0,355.03 790.5,355.05 791.0,355.07 791.5,355.09 792.0,355.12 792.5,355.15 793.0,355.18 793.5,355.22 794.0,355.26 794.5,355.30 795.0,355.35 795.5,355.41 796.0,355.46 796.5,355.52 797.0,355.58 797.5,355.65 798.0,355.72 798.5,355.79 799.0,355.87 799.5,355.95 800.0,356.03 800.5,356.12 801.0,356.21 801.5,356.31 802.0,356.41 802.5,356.51 803.0,356.61 803.5,356.72 804.0,356.83 804.5,356.95 805.0,357.07 805.5,357.19 806.0,357.31 806.5,357.44 807.0,357.57 807.5,357.71 808.0,357.85 808.5,357.99 809.0,358.13 809.5,358.28 810.0,358.43 810.5,358.59 811.0,358.74 811.5,358.91 812.0,359.07 812.5,359.24 813.0,359.41 813.5,359.58 814.0,359.76 814.5,359.94 815.0,360.12 815.5,360.31 816.0,360.49 816.5,360.69 817.0,360.88 817.5,361.08 818.0,361.28 818.5,361.48 819.0,361.69 819.5,361.90 820.0,362.11 820.5,362.32 821.0,362.54 821.5,362.76 822.0,362.98 822.5,363.21 823.0,363.44 823.5,363.67 824.0,363.90 824.5,364.14 825.0,364.38 825.5,364.62 826.0,364.86 826.5,365.11 827.0,365.36 827.5,365.61 828.0,365.86 828.5,366.12 829.0,366.37 829.5,366.63 830.0,366.90 830.5,367.16 831.0,367.43 831.5,367.70 832.0,367.97 832.5,368.24 833.0,368.52 833.5,368.79 834.0,369.07 834.5,369.36 835.0,369.64 835.5,369.92 836.0,370.21 836.5,370.50 837.0,370.79 837.5,371.08 838.0,371.38 838.5,371.67 839.0,371.97 839.5,372.27 840.0,372.57 840.5,372.87 841.0,373.18 841.5,373.48 842.0,373.79 842.5,374.10 843.0,374.41 843.5,374.72 844.0,375.03 844.5,375.34 845.0,375.66 845.5,375.98 846.0,376.29 846.5,376.61 847.0,376.93 847.5,377.25 848.0,377.57 848.5,377.90 849.0,378.22 849.5,378.54 850.0,378.87 850.5,379.20 851.0,379.52 851.5,379.85 852.0,380.18 852.5,380.51 853.0,380.84 853.5,381.17 854.0,381.50 854.5,381.83 855.0,382.16 855.5,382.49 856.0,382.83 856.5,383.16 857.0,383.49 857.5,383.83 858.0,384.16 858.5,384.49 859.0,384.83 859.5,385.16 860.0,385.50 860.5,385.83 861.0,386.16 861.5,386.47 862.0,386.78 862.5,387.09 863.0,387.40 863.5,387.71 864.0,388.02 864.5,388.33 865.0,388.64 865.5,388.95 866.0,389.26 866.5,389.57 867.0,389.87 867.5,390.18 868.0,390.49 868.5,390.80 869.0,391.10 869.5,391.41 870.0,391.71 870.5,392.02 871.0,392.32 871.5,392.62 872.0,392.93 872.5,393.23 873.0,393.53 873.5,393.83 874.0,394.13 874.5,394.43 875.0,394.72 875.5,395.02 876.0,395.31 876.5,395.61 877.0,395.90 877.5,396.19 878.0,396.48 878.5,396.77 879.0,397.06 879.5,397.34 880.0,397.63 880.5,397.91 881.0,398.19 881.5,398.48 882.0,398.76 882.5,399.03 883.0,399.31 883.5,399.58 884.0,399.86 884.5,400.13 885.0,400.40 885.5,400.67 886.0,400.94 886.5,401.20 887.0,401.46 887.5,401.72 888.0,401.98 888.5,402.24 889.0,402.50 889.5,402.75 890.0,403.00 890.5,403.25 891.0,403.50 891.5,403.75 892.0,403.99 892.5,404.23 893.0,404.47 893.5,404.71 894.0,404.95 894.5,405.18 895.0,405.41 895.5,405.64 896.0,405.86 896.5,406.09 897.0,406.31 897.5,406.53 898.0,406.75 898.5,406.96 899.0,407.17 899.5,407.38 900.0,407.59 900.5,407.79 901.0,408.00 901.5,408.19 902.0,408.39 902.5,408.59 903.0,408.78 903.5,408.97 904.0,409.15 904.5,409.34 905.0,409.52 905.5,409.70 906.0,409.87 906.5,410.04 907.0,410.21 907.5,410.38 908.0,410.54 908.5,410.71 909.0,410.86 909.5,411.02 910.0,411.17 910.5,411.32 911.0,411.47 911.5,411.61 912.0,411.75 912.5,411.89 913.0,412.02 913.5,412.16 914.0,412.28 914.5,412.41 915.0,412.53 915.5,412.65 916.0,412.77 916.5,412.88 917.0,412.99 917.5,413.10 918.0,413.20 918.5,413.30 919.0,413.40 919.5,413.49 920.0,413.59 920.5,413.67 921.0,413.76 921.5,413.84 922.0,413.92 922.5,413.99 923.0,414.06 923.5,414.13 924.0,414.20 924.5,414.26 925.0,414.32 925.5,414.37 926.0,414.42 926.5,414.47 927.0,414.52 927.5,414.56 928.0,414.60 928.5,414.63 929.0,414.66 929.5,414.69 930.0,414.72 930.5,414.74 931.0,414.76 931.5,414.77 932.0,414.78 932.5,414.79 933.0,414.80 933.5,414.80 934.0,414.80 934.5,414.79 935.0,414.78 935.5,414.77 936.0,414.76 936.5,414.74 937.0,414.72 937.5,414.69 938.0,414.66 938.5,414.63 939.0,414.60 939.5,414.56 940.0,414.52 940.5,414.47 941.0,414.42 941.5,414.37 942.0,414.32 942.5,414.26 943.0,414.20 943.5,414.13 944.0,414.06 944.5,413.99 945.0,413.92 945.5,413.84 946.0,413.76 946.5,413.67 947.0,413.59 947.5,413.49 948.0,413.40 948.5,413.30 949.0,413.20 949.5,413.10 950.0,412.99 950.5,412.88 951.0,412.77 951.5,412.65 952.0,412.53 952.5,412.41 953.0,412.28 953.5,412.16 954.0,412.02 954.5,411.89 955.0,411.75 955.5,411.61 956.0,411.47 956.5,411.32 957.0,411.17 957.5,411.02 958.0,410.86 958.5,410.71 959.0,410.54 959.5,410.38 960.0,410.21 960.5,410.04 961.0,409.87 961.5,409.70 962.0,409.52 962.5,409.34 963.0,409.15 963.5,408.97 964.0,408.78 964.5,408.59 965.0,408.39 965.5,408.19 966.0,408.00 966.5,407.79 967.0,407.59 967.5,407.38 968.0,407.17 968.5,406.96 969.0,406.75 969.5,406.53 970.0,406.31 970.5,406.09 971.0,405.86 971.5,405.64 972.0,405.41 972.5,405.18 973.0,404.95 973.5,404.71 974.0,404.47 974.5,404.23 975.0,403.99 975.5,403.75 976.0,403.50 976.5,403.25 977.0,403.00 977.5,402.75 978.0,402.50 978.5,402.24 979.0,401.98 979.5,401.72 980.0,401.46 980.5,401.20 981.0,400.94 981.5,400.67 982.0,400.40 982.5,400.13 983.0,399.86 983.5,399.58 984.0,399.31 984.5,399.03 985.0,398.76 985.5,398.48 986.0,398.19 986.5,397.91 987.0,397.63 987.5,397.34 988.0,397.06 988.5,396.77 989.0,396.48 989.5,396.19 990.0,395.90 990.5,395.61 991.0,395.31 991.5,395.02 992.0,394.72 992.5,394.43 993.0,394.13 993.5,393.83 994.0,393.53 994.5,393.23 995.0,392.93 995.5,392.62 996.0,392.32 996.5,392.02 997.0,391.71 997.5,391.41 998.0,391.10 998.5,390.80 999.0,390.49 999.5,390.18 1000.0,389.87 1000.5,389.57" fill="none" stroke="#e4e034" stroke-width="1.4"/>
<polyline points="544.0,364.89 544.5,365.26 545.0,365.63 545.5,366.00 546.0,366.38 546.5,366.75 547.0,367.13 547.5,367.51 548.0,367.90 548.5,368.28 549.0,368.67 549.5,369.06 550.0,369.45 550.5,369.85 551.0,370.24 551.5,370.64 552.0,371.04 552.5,371.44 553.0,371.85 553.5,372.25 554.0,372.66 554.5,373.07 555.0,373.48 555.5,373.89 556.0,374.30 556.5,374.71 557.0,375.13 557.5,375.54 558.0,375.96 558.5,376.38 559.0,376.80 559.5,377.22 560.0,377.64 560.5,378.06 561.0,378.49 561.5,378.91 562.0,379.34 562.5,379.76 563.0,380.19 563.5,380.62 564.0,381.05 564.5,381.48 565.0,381.90 565.5,382.33 566.0,382.76 566.5,383.20 567.0,383.63 567.5,384.06 568.0,384.49 568.5,384.92 569.0,385.35 569.5,385.78 570.0,386.21 570.5,386.63 571.0,387.05 571.5,387.47 572.0,387.89 572.5,388.31 573.0,388.73 573.5,389.15 574.0,389.57 574.5,389.99 575.0,390.41 575.5,390.83 576.0,391.25 576.5,391.66 577.0,392.08 577.5,392.50 578.0,392.91 578.5,393.32 579.0,393.74 579.5,394.15 580.0,394.56 580.5,394.97 581.0,395.38 581.5,395.79 582.0,396.20 582.5,396.60 583.0,397.01 583.5,397.41 584.0,397.81 584.5,398.21 585.0,398.61 585.5,399.01 586.0,399.40 586.5,399.80 587.0,400.19 587.5,400.58 588.0,400.97 588.5,401.36 589.0,401.75 589.5,402.13 590.0,402.51 590.5,402.89 591.0,403.27 591.5,403.65 592.0,404.02 592.5,404.40 593.0,404.77 593.5,405.13 594.0,405.50 594.5,405.86 595.0,406.22 595.5,406.58 596.0,406.94 596.5,407.29 597.0,407.65 597.5,407.99 598.0,408.34 598.5,408.68 599.0,409.03 599.5,409.36 600.0,409.70 600.5,410.03 601.0,410.36 601.5,410.69 602.0,411.01 602.5,411.34 603.0,411.66 603.5,411.97 604.0,412.28 604.5,412.59 605.0,412.90 605.5,413.20 606.0,413.50 606.5,413.80 607.0,414.09 607.5,414.38 608.0,414.67 608.5,414.95 609.0,415.23 609.5,415.51 610.0,415.79 610.5,416.06 611.0,416.32 611.5,416.58 612.0,416.84 612.5,417.10 613.0,417.35 613.5,417.60 614.0,417.85 614.5,418.09 615.0,418.32 615.5,418.56 616.0,418.79 616.5,419.01 617.0,419.24 617.5,419.45 618.0,419.67 618.5,419.88 619.0,420.09 619.5,420.29 620.0,420.49 620.5,420.68 621.0,420.87 621.5,421.06 622.0,421.24 622.5,421.42 623.0,421.59 623.5,421.76 624.0,421.93 624.5,422.09 625.0,422.25 625.5,422.40 626.0,422.55 626.5,422.70 627.0,422.84 627.5,422.97 628.0,423.10 628.5,423.23 629.0,423.35 629.5,423.47 630.0,423.59 630.5,423.70 631.0,423.80 631.5,423.91 632.0,424.00 632.5,424.09 633.0,424.18 633.5,424.27 634.0,424.35 634.5,424.42 635.0,424.49 635.5,424.56 636.0,424.62 636.5,424.67 637.0,424.73 637.5,424.77 638.0,424.82 638.5,424.85 639.0,424.89 639.5,424.92 640.0,424.94 640.5,424.96 641.0,424.98 641.5,424.99 642.0,425.00 642.5,425.00 643.0,425.00 643.5,424.99 644.0,424.98 644.5,424.96 645.0,424.94 645.5,424.92 646.0,424.89 646.5,424.85 647.0,424.82 647.5,424.77 648.0,424.73 648.5,424.67 649.0,424.62 649.5,424.56 650.0,424.49 650.5,424.42 651.0,424.35 651.5,424.27 652.0,424.18 652.5,424.09 653.0,424.00 653.5,423.91 654.0,423.80 654.5,423.70 655.0,423.59 655.5,423.47 656.0,423.35 656.5,423.23 657.0,423.10 657.5,422.97 658.0,422.84 658.5,422.70 659.0,422.55 659.5,422.40 660.0,422.25 660.5,422.09 661.0,421.93 661.5,421.76 662.0,421.59 662.5,421.42 663.0,421.24 663.5,421.06 664.0,420.87 664.5,420.68 665.0,420.49 665.5,420.29 666.0,420.09 666.5,419.88 667.0,419.67 667.5,419.45 668.0,419.24 668.5,419.01 669.0,418.79 669.5,418.56 670.0,418.32 670.5,418.09 671.0,417.85 671.5,417.60 672.0,417.35 672.5,417.10 673.0,416.84 673.5,416.58 674.0,416.32 674.5,416.06 675.0,415.79 675.5,415.51 676.0,415.23 676.5,414.95 677.0,414.67 677.5,414.38 678.0,414.09 678.5,413.80 679.0,413.50 679.5,413.20 680.0,412.90 680.5,412.59 681.0,412.28 681.5,411.97 682.0,411.66 682.5,411.34 683.0,411.01 683.5,410.69 684.0,410.36 684.5,410.03 685.0,409.70 685.5,409.36 686.0,409.03 686.5,408.68 687.0,408.34 687.5,407.99 688.0,407.65 688.5,407.29 689.0,406.94 689.5,406.58 690.0,406.22 690.5,405.86 691.0,405.50 691.5,405.13 692.0,404.77 692.5,404.40 693.0,404.02 693.5,403.65 694.0,403.27 694.5,402.89 695.0,402.51 695.5,402.13 696.0,401.75 696.5,401.36 697.0,400.97 697.5,400.58 698.0,400.19 698.5,399.80 699.0,399.40 699.5,399.01 700.0,398.61 700.5,398.21 701.0,397.81 701.5,397.41 702.0,397.01 702.5,396.60 703.0,396.20 703.5,395.79 704.0,395.38 704.5,394.97 705.0,394.56 705.5,394.15 706.0,393.74 706.5,393.32 707.0,392.91 707.5,392.50 708.0,392.08 708.5,391.66 709.0,391.25 709.5,390.83 710.0,390.41 710.5,389.99 711.0,389.57 711.5,389.15 712.0,388.73 712.5,388.31 713.0,387.89 713.5,387.47 714.0,387.05 714.5,386.63 715.0,386.21 715.5,385.78 716.0,385.35 716.5,384.92 717.0,384.49 717.5,384.06 718.0,383.63 718.5,383.20 719.0,382.76 719.5,382.33 720.0,381.90 720.5,381.48 721.0,381.05 721.5,380.62 722.0,380.19 722.5,379.76 723.0,379.34 723.5,378.91 724.0,378.49 724.5,378.06 725.0,377.64 725.5,377.22 726.0,376.80 726.5,376.38 727.0,375.96 727.5,375.54 728.0,375.13 728.5,374.71 729.0,374.30 729.5,373.89 730.0,373.48 730.5,373.07 731.0,372.66 731.5,372.25 732.0,371.85 732.5,371.44 733.0,371.04 733.5,370.64 734.0,370.24 734.5,369.85 735.0,369.45 735.5,369.06 736.0,368.67 736.5,368.28 737.0,367.90 737.5,367.51 738.0,367.13 738.5,366.75 739.0,366.38 739.5,366.00 740.0,365.63 740.5,365.26 741.0,364.89 741.5,364.52 742.0,364.16 742.5,363.80 743.0,363.44 743.5,363.09 744.0,362.73 744.5,362.38 745.0,362.04 745.5,361.69 746.0,361.35 746.5,361.01 747.0,360.68 747.5,360.34 748.0,360.01 748.5,359.69 749.0,359.36 749.5,359.04 750.0,358.73 750.5,358.41 751.0,358.10 751.5,357.79 752.0,357.49 752.5,357.19 753.0,356.89 753.5,356.59 754.0,356.30 754.5,356.02 755.0,355.73 755.5,355.45 756.0,355.17 756.5,354.90 757.0,354.63 757.5,354.36 758.0,354.10 758.5,353.84 759.0,353.59 759.5,353.34 760.0,353.09 760.5,352.85 761.0,352.61 761.5,352.37 762.0,352.14 762.5,351.91 763.0,351.69 763.5,351.47 764.0,351.25 764.5,351.04 765.0,350.83 765.5,350.63 766.0,350.43 766.5,350.23 767.0,350.04 767.5,349.85 768.0,349.67 768.5,349.49 769.0,349.32 769.5,349.15 770.0,348.98 770.5,348.82 771.0,348.66 771.5,348.51 772.0,348.36 772.5,348.22 773.0,348.08 773.5,347.94 774.0,347.81 774.5,347.69 775.0,347.57 775.5,347.45 776.0,347.34 776.5,347.23 777.0,347.12 777.5,347.02 778.0,346.93 778.5,346.84 779.0,346.75 779.5,346.67 780.0,346.60 780.5,346.52 781.0,346.46 781.5,346.39 782.0,346.34 782.5,346.28 783.0,346.23 783.5,346.19 784.0,346.15 784.5,346.11 785.0,346.08 785.5,346.06 786.0,346.04 786.5,346.02 787.0,346.01 787.5,346.00 788.0,346.00 788.5,346.00 789.0,346.01 789.5,346.02 790.0,346.04 790.5,346.06 791.0,346.08 791.5,346.11 792.0,346.15 792.5,346.19 793.0,346.23 793.5,346.28 794.0,346.34 794.5,346.39 795.0,346.46 795.5,346.52 796.0,346.60 796.5,346.67 797.0,346.75 797.5,346.84 798.0,346.93 798.5,347.02 799.0,347.12 799.5,347.23 800.0,347.34 800.5,347.45 801.0,347.57 801.5,347.69 802.0,347.81 802.5,347.94 803.0,348.08 803.5,348.22 804.0,348.36 804.5,348.51 805.0,348.66 805.5,348.82 806.0,348.98 806.5,349.15 807.0,349.32 807.5,349.49 808.0,349.67 808.5,349.85 809.0,350.04 809.5,350.23 810.0,350.43 810.5,350.63 811.0,350.83 811.5,351.04 812.0,351.25 812.5,351.47 813.0,351.69 813.5,351.91 814.0,352.14 814.5,352.37 815.0,352.61 815.5,352.85 816.0,353.09 816.5,353.34 817.0,353.59 817.5,353.84 818.0,354.10 818.5,354.36 819.0,354.63 819.5,354.90 820.0,355.17 820.5,355.45 821.0,355.73 821.5,356.02 822.0,356.30 822.5,356.59 823.0,356.89 823.5,357.19 824.0,357.49 824.5,357.79 825.0,358.10 825.5,358.41 826.0,358.73 826.5,359.04 827.0,359.36 827.5,359.69 828.0,360.01 828.5,360.34 829.0,360.68 829.5,361.01 830.0,361.35 830.5,361.69 831.0,362.04 831.5,362.38 832.0,362.73 832.5,363.09 833.0,363.44 833.5,363.80 834.0,364.16 834.5,364.52 835.0,364.89 835.5,365.26 836.0,365.63 836.5,366.00 837.0,366.38 837.5,366.75 838.0,367.13 838.5,367.51 839.0,367.90 839.5,368.28 840.0,368.67 840.5,369.06 841.0,369.45 841.5,369.85 842.0,370.24 842.5,370.64 843.0,371.04 843.5,371.44 844.0,371.85 844.5,372.25 845.0,372.66 845.5,373.07 846.0,373.48 846.5,373.89 847.0,374.30 847.5,374.71 848.0,375.13 848.5,375.54 849.0,375.96 849.5,376.38 850.0,376.80 850.5,377.22 851.0,377.64 851.5,378.06 852.0,378.49 852.5,378.91 853.0,379.34 853.5,379.76 854.0,380.19 854.5,380.62 855.0,381.05 855.5,381.48 856.0,381.90 856.5,382.33 857.0,382.76 857.5,383.20 858.0,383.63 858.5,384.06 859.0,384.49 859.5,384.92 860.0,385.35 860.5,385.78 861.0,386.21 861.5,386.63 862.0,387.05 862.5,387.47 863.0,387.89 863.5,388.31 864.0,388.73 864.5,389.15 865.0,389.57 865.5,389.99 866.0,390.41 866.5,390.83 867.0,391.25 867.5,391.66 868.0,392.08 868.5,392.50 869.0,392.91 869.5,393.32 870.0,393.74 870.5,394.15 871.0,394.56 871.5,394.97 872.0,395.38 872.5,395.79 873.0,396.20 873.5,396.60 874.0,397.01 874.5,397.41 875.0,397.81 875.5,398.21 876.0,398.61 876.5,399.01 877.0,399.40 877.5,399.80 878.0,400.19 878.5,400.58 879.0,400.97 879.5,401.36 880.0,401.75 880.5,402.13 881.0,402.51 881.5,402.89 882.0,403.27 882.5,403.65 883.0,404.02 883.5,404.40 884.0,404.77 884.5,405.13 885.0,405.50 885.5,405.86 886.0,406.22 886.5,406.58 887.0,406.94 887.5,407.29 888.0,407.65 888.5,407.99 889.0,408.34 889.5,408.68 890.0,409.03 890.5,409.36 891.0,409.70 891.5,410.03 892.0,410.36 892.5,410.69 893.0,411.01 893.5,411.34 894.0,411.66 894.5,411.97 895.0,412.28 895.5,412.59 896.0,412.90 896.5,413.20 897.0,413.50 897.5,413.80 898.0,414.09 898.5,414.38 899.0,414.67 899.5,414.95 900.0,415.23 900.5,415.51 901.0,415.79 901.5,416.06 902.0,416.32 902.5,416.58 903.0,416.84 903.5,417.10 904.0,417.35 904.5,417.60 905.0,417.85 905.5,418.09 906.0,418.32 906.5,418.56 907.0,418.79 907.5,419.01 908.0,419.24 908.5,419.45 909.0,419.67 909.5,419.88 910.0,420.09 910.5,420.29 911.0,420.49 911.5,420.68 912.0,420.87 912.5,421.06 913.0,421.24 913.5,421.42 914.0,421.59 914.5,421.76 915.0,421.93 915.5,422.09 916.0,422.25 916.5,422.40 917.0,422.55 917.5,422.70 918.0,422.84 918.5,422.97 919.0,423.10 919.5,423.23 920.0,423.35 920.5,423.47 921.0,423.59 921.5,423.70 922.0,423.80 922.5,423.91 923.0,424.00 923.5,424.09 924.0,424.18 924.5,424.27 925.0,424.35 925.5,424.42 926.0,424.49 926.5,424.56 927.0,424.62 927.5,424.67 928.0,424.73 928.5,424.77 929.0,424.82 929.5,424.85 930.0,424.89 930.5,424.92 931.0,424.94 931.5,424.96 932.0,424.98 932.5,424.99 933.0,425.00 933.5,425.00 934.0,425.00 934.5,424.99 935.0,424.98 935.5,424.96 936.0,424.94 936.5,424.92 937.0,424.89 937.5,424.85 938.0,424.82 938.5,424.77 939.0,424.73 939.5,424.67 940.0,424.62 940.5,424.56 941.0,424.49 941.5,424.42 942.0,424.35 942.5,424.27 943.0,424.18 943.5,424.09 944.0,424.00 944.5,423.91 945.0,423.80 945.5,423.70 946.0,423.59 946.5,423.47 947.0,423.35 947.5,423.23 948.0,423.10 948.5,422.97 949.0,422.84 949.5,422.70 950.0,422.55 950.5,422.40 951.0,422.25 951.5,422.09 952.0,421.93 952.5,421.76 953.0,421.59 953.5,421.42 954.0,421.24 954.5,421.06 955.0,420.87 955.5,420.68 956.0,420.49 956.5,420.29 957.0,420.09 957.5,419.88 958.0,419.67 958.5,419.45 959.0,419.24 959.5,419.01 960.0,418.79 960.5,418.56 961.0,418.32 961.5,418.09 962.0,417.85 962.5,417.60 963.0,417.35 963.5,417.10 964.0,416.84 964.5,416.58 965.0,416.32 965.5,416.06 966.0,415.79 966.5,415.51 967.0,415.23 967.5,414.95 968.0,414.67 968.5,414.38 969.0,414.09 969.5,413.80 970.0,413.50 970.5,413.20 971.0,412.90 971.5,412.59 972.0,412.28 972.5,411.97 973.0,411.66 973.5,411.34 974.0,411.01 974.5,410.69 975.0,410.36 975.5,410.03 976.0,409.70 976.5,409.36 977.0,409.03 977.5,408.68 978.0,408.34 978.5,407.99 979.0,407.65 979.5,407.29 980.0,406.94 980.5,406.58 981.0,406.22 981.5,405.86 982.0,405.50 982.5,405.13 983.0,404.77 983.5,404.40 984.0,404.02 984.5,403.65 985.0,403.27 985.5,402.89 986.0,402.51 986.5,402.13 987.0,401.75 987.5,401.36 988.0,400.97 988.5,400.58 989.0,400.19 989.5,399.80 990.0,399.40 990.5,399.01 991.0,398.61 991.5,398.21 992.0,397.81 992.5,397.41 993.0,397.01 993.5,396.60 994.0,396.20 994.5,395.79 995.0,395.38 995.5,394.97 996.0,394.56 996.5,394.15 997.0,393.74 997.5,393.32 998.0,392.91 998.5,392.50 999.0,392.08 999.5,391.66 1000.0,391.25 1000.5,390.83" fill="none" stroke="#b044c0" stroke-width="1.4"/>
<polyline points="544.0,359.61 544.5,360.07 545.0,360.53 545.5,361.00 546.0,361.47 546.5,361.94 547.0,362.42 547.5,362.89 548.0,363.37 548.5,363.86 549.0,364.34 549.5,364.83 550.0,365.32 550.5,365.81 551.0,366.31 551.5,366.80 552.0,367.30 552.5,367.80 553.0,368.31 553.5,368.81 554.0,369.32 554.5,369.83 555.0,370.34 555.5,370.86 556.0,371.37 556.5,371.89 557.0,372.41 557.5,372.93 558.0,373.45 558.5,373.97 559.0,374.50 559.5,375.02 560.0,375.55 560.5,376.08 561.0,376.61 561.5,377.14 562.0,377.67 562.5,378.20 563.0,378.74 563.5,379.27 564.0,379.81 564.5,380.34 565.0,380.88 565.5,381.42 566.0,381.96 566.5,382.49 567.0,383.03 567.5,383.57 568.0,384.11 568.5,384.65 569.0,385.19 569.5,385.73 570.0,386.27 570.5,386.80 571.0,387.33 571.5,387.86 572.0,388.39 572.5,388.93 573.0,389.46 573.5,389.99 574.0,390.52 574.5,391.05 575.0,391.58 575.5,392.10 576.0,392.63 576.5,393.16 577.0,393.69 577.5,394.21 578.0,394.74 578.5,395.26 579.0,395.78 579.5,396.30 580.0,396.82 580.5,397.34 581.0,397.86 581.5,398.37 582.0,398.89 582.5,399.40 583.0,399.91 583.5,400.42 584.0,400.93 584.5,401.44 585.0,401.94 585.5,402.44 586.0,402.94 586.5,403.44 587.0,403.94 587.5,404.44 588.0,404.93 588.5,405.42 589.0,405.91 589.5,406.39 590.0,406.88 590.5,407.36 591.0,407.83 591.5,408.31 592.0,408.78 592.5,409.25 593.0,409.72 593.5,410.19 594.0,410.65 594.5,411.11 595.0,411.57 595.5,412.02 596.0,412.47 596.5,412.92 597.0,413.36 597.5,413.80 598.0,414.24 598.5,414.68 599.0,415.11 599.5,415.53 600.0,415.96 600.5,416.38 601.0,416.80 601.5,417.21 602.0,417.62 602.5,418.03 603.0,418.43 603.5,418.83 604.0,419.22 604.5,419.62 605.0,420.00 605.5,420.39 606.0,420.77 606.5,421.14 607.0,421.51 607.5,421.88 608.0,422.24 608.5,422.60 609.0,422.96 609.5,423.31 610.0,423.65 610.5,423.99 611.0,424.33 611.5,424.66 612.0,424.99 612.5,425.31 613.0,425.63 613.5,425.95 614.0,426.26 614.5,426.56 615.0,426.86 615.5,427.16 616.0,427.45 616.5,427.73 617.0,428.01 617.5,428.29 618.0,428.56 618.5,428.83 619.0,429.09 619.5,429.34 620.0,429.60 620.5,429.84 621.0,430.08 621.5,430.32 622.0,430.55 622.5,430.77 623.0,430.99 623.5,431.21 624.0,431.42 624.5,431.62 625.0,431.82 625.5,432.02 626.0,432.20 626.5,432.39 627.0,432.56 627.5,432.74 628.0,432.90 628.5,433.06 629.0,433.22 629.5,433.37 630.0,433.52 630.5,433.65 631.0,433.79 631.5,433.92 632.0,434.04 632.5,434.16 633.0,434.27 633.5,434.37 634.0,434.47 634.5,434.57 635.0,434.65 635.5,434.74 636.0,434.82 636.5,434.89 637.0,434.95 637.5,435.01 638.0,435.07 638.5,435.12 639.0,435.16 639.5,435.20 640.0,435.23 640.5,435.25 641.0,435.27 641.5,435.29 642.0,435.30 642.5,435.30 643.0,435.30 643.5,435.29 644.0,435.27 644.5,435.25 645.0,435.23 645.5,435.20 646.0,435.16 646.5,435.12 647.0,435.07 647.5,435.01 648.0,434.95 648.5,434.89 649.0,434.82 649.5,434.74 650.0,434.65 650.5,434.57 651.0,434.47 651.5,434.37 652.0,434.27 652.5,434.16 653.0,434.04 653.5,433.92 654.0,433.79 654.5,433.65 655.0,433.52 655.5,433.37 656.0,433.22 656.5,433.06 657.0,432.90 657.5,432.74 658.0,432.56 658.5,432.39 659.0,432.20 659.5,432.02 660.0,431.82 660.5,431.62 661.0,431.42 661.5,431.21 662.0,430.99 662.5,430.77 663.0,430.55 663.5,430.32 664.0,430.08 664.5,429.84 665.0,429.60 665.5,429.34 666.0,429.09 666.5,428.83 667.0,428.56 667.5,428.29 668.0,428.01 668.5,427.73 669.0,427.45 669.5,427.16 670.0,426.86 670.5,426.56 671.0,426.26 671.5,425.95 672.0,425.63 672.5,425.31 673.0,424.99 673.5,424.66 674.0,424.33 674.5,423.99 675.0,423.65 675.5,423.31 676.0,422.96 676.5,422.60 677.0,422.24 677.5,421.88 678.0,421.51 678.5,421.14 679.0,420.77 679.5,420.39 680.0,420.00 680.5,419.62 681.0,419.22 681.5,418.83 682.0,418.43 682.5,418.03 683.0,417.62 683.5,417.21 684.0,416.80 684.5,416.38 685.0,415.96 685.5,415.53 686.0,415.11 686.5,414.68 687.0,414.24 687.5,413.80 688.0,413.36 688.5,412.92 689.0,412.47 689.5,412.02 690.0,411.57 690.5,411.11 691.0,410.65 691.5,410.19 692.0,409.72 692.5,409.25 693.0,408.78 693.5,408.31 694.0,407.83 694.5,407.36 695.0,406.88 695.5,406.39 696.0,405.91 696.5,405.42 697.0,404.93 697.5,404.44 698.0,403.94 698.5,403.44 699.0,402.94 699.5,402.44 700.0,401.94 700.5,401.44 701.0,400.93 701.5,400.42 702.0,399.91 702.5,399.40 703.0,398.89 703.5,398.37 704.0,397.86 704.5,397.34 705.0,396.82 705.5,396.30 706.0,395.78 706.5,395.26 707.0,394.74 707.5,394.21 708.0,393.69 708.5,393.16 709.0,392.63 709.5,392.10 710.0,391.58 710.5,391.05 711.0,390.52 711.5,389.99 712.0,389.46 712.5,388.93 713.0,388.39 713.5,387.86 714.0,387.33 714.5,386.80 715.0,386.27 715.5,385.73 716.0,385.19 716.5,384.65 717.0,384.11 717.5,383.57 718.0,383.03 718.5,382.49 719.0,381.96 719.5,381.42 720.0,380.88 720.5,380.34 721.0,379.81 721.5,379.27 722.0,378.74 722.5,378.20 723.0,377.67 723.5,377.14 724.0,376.61 724.5,376.08 725.0,375.55 725.5,375.02 726.0,374.50 726.5,373.97 727.0,373.45 727.5,372.93 728.0,372.41 728.5,371.89 729.0,371.37 729.5,370.86 730.0,370.34 730.5,369.83 731.0,369.32 731.5,368.81 732.0,368.31 732.5,367.80 733.0,367.30 733.5,366.80 734.0,366.31 734.5,365.81 735.0,365.32 735.5,364.83 736.0,364.34 736.5,363.86 737.0,363.37 737.5,362.89 738.0,362.42 738.5,361.94 739.0,361.47 739.5,361.00 740.0,360.53 740.5,360.07 741.0,359.61 741.5,359.15 742.0,358.70 742.5,358.25 743.0,357.80 743.5,357.36 744.0,356.92 744.5,356.48 745.0,356.05 745.5,355.62 746.0,355.19 746.5,354.77 747.0,354.35 747.5,353.93 748.0,353.52 748.5,353.11 749.0,352.70 749.5,352.30 750.0,351.91 750.5,351.51 751.0,351.12 751.5,350.74 752.0,350.36 752.5,349.98 753.0,349.61 753.5,349.24 754.0,348.88 754.5,348.52 755.0,348.16 755.5,347.81 756.0,347.47 756.5,347.13 757.0,346.79 757.5,346.46 758.0,346.13 758.5,345.80 759.0,345.49 759.5,345.17 760.0,344.86 760.5,344.56 761.0,344.26 761.5,343.96 762.0,343.67 762.5,343.39 763.0,343.11 763.5,342.83 764.0,342.56 764.5,342.30 765.0,342.04 765.5,341.79 766.0,341.54 766.5,341.29 767.0,341.05 767.5,340.82 768.0,340.59 768.5,340.37 769.0,340.15 769.5,339.94 770.0,339.73 770.5,339.53 771.0,339.33 771.5,339.14 772.0,338.95 772.5,338.77 773.0,338.60 773.5,338.43 774.0,338.27 774.5,338.11 775.0,337.96 775.5,337.81 776.0,337.67 776.5,337.53 777.0,337.40 777.5,337.28 778.0,337.16 778.5,337.05 779.0,336.94 779.5,336.84 780.0,336.74 780.5,336.65 781.0,336.57 781.5,336.49 782.0,336.42 782.5,336.35 783.0,336.29 783.5,336.24 784.0,336.19 784.5,336.14 785.0,336.10 785.5,336.07 786.0,336.05 786.5,336.03 787.0,336.01 787.5,336.00 788.0,336.00 788.5,336.00 789.0,336.01 789.5,336.03 790.0,336.05 790.5,336.07 791.0,336.10 791.5,336.14 792.0,336.19 792.5,336.24 793.0,336.29 793.5,336.35 794.0,336.42 794.5,336.49 795.0,336.57 795.5,336.65 796.0,336.74 796.5,336.84 797.0,336.94 797.5,337.05 798.0,337.16 798.5,337.28 799.0,337.40 799.5,337.53 800.0,337.67 800.5,337.81 801.0,337.96 801.5,338.11 802.0,338.27 802.5,338.43 803.0,338.60 803.5,338.77 804.0,338.95 804.5,339.14 805.0,339.33 805.5,339.53 806.0,339.73 806.5,339.94 807.0,340.15 807.5,340.37 808.0,340.59 808.5,340.82 809.0,341.05 809.5,341.29 810.0,341.54 810.5,341.79 811.0,342.04 811.5,342.30 812.0,342.56 812.5,342.83 813.0,343.11 813.5,343.39 814.0,343.67 814.5,343.96 815.0,344.26 815.5,344.56 816.0,344.86 816.5,345.17 817.0,345.49 817.5,345.80 818.0,346.13 818.5,346.46 819.0,346.79 819.5,347.13 820.0,347.47 820.5,347.81 821.0,348.16 821.5,348.52 822.0,348.88 822.5,349.24 823.0,349.61 823.5,349.98 824.0,350.36 824.5,350.74 825.0,351.12 825.5,351.51 826.0,351.91 826.5,352.30 827.0,352.70 827.5,353.11 828.0,353.52 828.5,353.93 829.0,354.35 829.5,354.77 830.0,355.19 830.5,355.62 831.0,356.05 831.5,356.48 832.0,356.92 832.5,357.36 833.0,357.80 833.5,358.25 834.0,358.70 834.5,359.15 835.0,359.61 835.5,360.07 836.0,360.53 836.5,361.00 837.0,361.47 837.5,361.94 838.0,362.42 838.5,362.89 839.0,363.37 839.5,363.86 840.0,364.34 840.5,364.83 841.0,365.32 841.5,365.81 842.0,366.31 842.5,366.80 843.0,367.30 843.5,367.80 844.0,368.31 844.5,368.81 845.0,369.32 845.5,369.83 846.0,370.34 846.5,370.86 847.0,371.37 847.5,371.89 848.0,372.41 848.5,372.93 849.0,373.45 849.5,373.97 850.0,374.50 850.5,375.02 851.0,375.55 851.5,376.08 852.0,376.61 852.5,377.14 853.0,377.67 853.5,378.20 854.0,378.74 854.5,379.27 855.0,379.81 855.5,380.34 856.0,380.88 856.5,381.42 857.0,381.96 857.5,382.49 858.0,383.03 858.5,383.57 859.0,384.11 859.5,384.65 860.0,385.19 860.5,385.73 861.0,386.27 861.5,386.80 862.0,387.33 862.5,387.86 863.0,388.39 863.5,388.93 864.0,389.46 864.5,389.99 865.0,390.52 865.5,391.05 866.0,391.58 866.5,392.10 867.0,392.63 867.5,393.16 868.0,393.69 868.5,394.21 869.0,394.74 869.5,395.26 870.0,395.78 870.5,396.30 871.0,396.82 871.5,397.34 872.0,397.86 872.5,398.37 873.0,398.89 873.5,399.40 874.0,399.91 874.5,400.42 875.0,400.93 875.5,401.44 876.0,401.94 876.5,402.44 877.0,402.94 877.5,403.44 878.0,403.94 878.5,404.44 879.0,404.93 879.5,405.42 880.0,405.91 880.5,406.39 881.0,406.88 881.5,407.36 882.0,407.83 882.5,408.31 883.0,408.78 883.5,409.25 884.0,409.72 884.5,410.19 885.0,410.65 885.5,411.11 886.0,411.57 886.5,412.02 887.0,412.47 887.5,412.92 888.0,413.36 888.5,413.80 889.0,414.24 889.5,414.68 890.0,415.11 890.5,415.53 891.0,415.96 891.5,416.38 892.0,416.80 892.5,417.21 893.0,417.62 893.5,418.03 894.0,418.43 894.5,418.83 895.0,419.22 895.5,419.62 896.0,420.00 896.5,420.39 897.0,420.77 897.5,421.14 898.0,421.51 898.5,421.88 899.0,422.24 899.5,422.60 900.0,422.96 900.5,423.31 901.0,423.65 901.5,423.99 902.0,424.33 902.5,424.66 903.0,424.99 903.5,425.31 904.0,425.63 904.5,425.95 905.0,426.26 905.5,426.56 906.0,426.86 906.5,427.16 907.0,427.45 907.5,427.73 908.0,428.01 908.5,428.29 909.0,428.56 909.5,428.83 910.0,429.09 910.5,429.34 911.0,429.60 911.5,429.84 912.0,430.08 912.5,430.32 913.0,430.55 913.5,430.77 914.0,430.99 914.5,431.21 915.0,431.42 915.5,431.62 916.0,431.82 916.5,432.02 917.0,432.20 917.5,432.39 918.0,432.56 918.5,432.74 919.0,432.90 919.5,433.06 920.0,433.22 920.5,433.37 921.0,433.52 921.5,433.65 922.0,433.79 922.5,433.92 923.0,434.04 923.5,434.16 924.0,434.27 924.5,434.37 925.0,434.47 925.5,434.57 926.0,434.65 926.5,434.74 927.0,434.82 927.5,434.89 928.0,434.95 928.5,435.01 929.0,435.07 929.5,435.12 930.0,435.16 930.5,435.20 931.0,435.23 931.5,435.25 932.0,435.27 932.5,435.29 933.0,435.30 933.5,435.30 934.0,435.30 934.5,435.29 935.0,435.27 935.5,435.25 936.0,435.23 936.5,435.20 937.0,435.16 937.5,435.12 938.0,435.07 938.5,435.01 939.0,434.95 939.5,434.89 940.0,434.82 940.5,434.74 941.0,434.65 941.5,434.57 942.0,434.47 942.5,434.37 943.0,434.27 943.5,434.16 944.0,434.04 944.5,433.92 945.0,433.79 945.5,433.65 946.0,433.52 946.5,433.37 947.0,433.22 947.5,433.06 948.0,432.90 948.5,432.74 949.0,432.56 949.5,432.39 950.0,432.20 950.5,432.02 951.0,431.82 951.5,431.62 952.0,431.42 952.5,431.21 953.0,430.99 953.5,430.77 954.0,430.55 954.5,430.32 955.0,430.08 955.5,429.84 956.0,429.60 956.5,429.34 957.0,429.09 957.5,428.83 958.0,428.56 958.5,428.29 959.0,428.01 959.5,427.73 960.0,427.45 960.5,427.16 961.0,426.86 961.5,426.56 962.0,426.26 962.5,425.95 963.0,425.63 963.5,425.31 964.0,424.99 964.5,424.66 965.0,424.33 965.5,423.99 966.0,423.65 966.5,423.31 967.0,422.96 967.5,422.60 968.0,422.24 968.5,421.88 969.0,421.51 969.5,421.14 970.0,420.77 970.5,420.39 971.0,420.00 971.5,419.62 972.0,419.22 972.5,418.83 973.0,418.43 973.5,418.03 974.0,417.62 974.5,417.21 975.0,416.80 975.5,416.38 976.0,415.96 976.5,415.53 977.0,415.11 977.5,414.68 978.0,414.24 978.5,413.80 979.0,413.36 979.5,412.92 980.0,412.47 980.5,412.02 981.0,411.57 981.5,411.11 982.0,410.65 982.5,410.19 983.0,409.72 983.5,409.25 984.0,408.78 984.5,408.31 985.0,407.83 985.5,407.36 986.0,406.88 986.5,406.39 987.0,405.91 987.5,405.42 988.0,404.93 988.5,404.44 989.0,403.94 989.5,403.44 990.0,402.94 990.5,402.44 991.0,401.94 991.5,401.44 992.0,400.93 992.5,400.42 993.0,399.91 993.5,399.40 994.0,398.89 994.5,398.37 995.0,397.86 995.5,397.34 996.0,396.82 996.5,396.30 997.0,395.78 997.5,395.26 998.0,394.74 998.5,394.21 999.0,393.69 999.5,393.16 1000.0,392.63 1000.5,392.10" fill="none" stroke="#e82424" stroke-width="1.4"/>
<polyline points="544.0,354.33 544.5,354.89 545.0,355.44 545.5,356.00 546.0,356.56 546.5,357.13 547.0,357.70 547.5,358.27 548.0,358.85 548.5,359.43 549.0,360.01 549.5,360.59 550.0,361.18 550.5,361.77 551.0,362.37 551.5,362.96 552.0,363.56 552.5,364.17 553.0,364.77 553.5,365.38 554.0,365.99 554.5,366.60 555.0,367.21 555.5,367.83 556.0,368.45 556.5,369.07 557.0,369.69 557.5,370.31 558.0,370.94 558.5,371.57 559.0,372.20 559.5,372.83 560.0,373.46 560.5,374.10 561.0,374.73 561.5,375.37 562.0,376.01 562.5,376.65 563.0,377.29 563.5,377.93 564.0,378.57 564.5,379.21 565.0,379.86 565.5,380.50 566.0,381.15 566.5,381.79 567.0,382.44 567.5,383.09 568.0,383.73 568.5,384.38 569.0,385.03 569.5,385.68 570.0,386.32 570.5,386.96 571.0,387.59 571.5,388.23 572.0,388.87 572.5,389.50 573.0,390.14 573.5,390.77 574.0,391.41 574.5,392.04 575.0,392.67 575.5,393.31 576.0,393.94 576.5,394.57 577.0,395.20 577.5,395.83 578.0,396.45 578.5,397.08 579.0,397.71 579.5,398.33 580.0,398.95 580.5,399.57 581.0,400.19 581.5,400.81 582.0,401.42 582.5,402.04 583.0,402.65 583.5,403.26 584.0,403.87 584.5,404.47 585.0,405.08 585.5,405.68 586.0,406.28 586.5,406.88 587.0,407.47 587.5,408.06 588.0,408.65 588.5,409.24 589.0,409.82 589.5,410.40 590.0,410.98 590.5,411.56 591.0,412.13 591.5,412.70 592.0,413.27 592.5,413.83 593.0,414.39 593.5,414.95 594.0,415.50 594.5,416.05 595.0,416.60 595.5,417.14 596.0,417.68 596.5,418.21 597.0,418.75 597.5,419.27 598.0,419.80 598.5,420.32 599.0,420.83 599.5,421.35 600.0,421.85 600.5,422.36 601.0,422.86 601.5,423.35 602.0,423.84 602.5,424.33 603.0,424.81 603.5,425.29 604.0,425.76 604.5,426.23 605.0,426.69 605.5,427.15 606.0,427.61 606.5,428.06 607.0,428.50 607.5,428.94 608.0,429.37 608.5,429.80 609.0,430.23 609.5,430.65 610.0,431.06 610.5,431.47 611.0,431.87 611.5,432.27 612.0,432.66 612.5,433.05 613.0,433.43 613.5,433.81 614.0,434.18 614.5,434.54 615.0,434.90 615.5,435.25 616.0,435.60 616.5,435.94 617.0,436.28 617.5,436.61 618.0,436.94 618.5,437.25 619.0,437.57 619.5,437.87 620.0,438.17 620.5,438.47 621.0,438.76 621.5,439.04 622.0,439.31 622.5,439.58 623.0,439.85 623.5,440.10 624.0,440.36 624.5,440.60 625.0,440.84 625.5,441.07 626.0,441.30 626.5,441.51 627.0,441.73 627.5,441.93 628.0,442.13 628.5,442.32 629.0,442.51 629.5,442.69 630.0,442.86 630.5,443.03 631.0,443.19 631.5,443.34 632.0,443.49 632.5,443.63 633.0,443.76 633.5,443.89 634.0,444.01 634.5,444.12 635.0,444.23 635.5,444.33 636.0,444.42 636.5,444.51 637.0,444.58 637.5,444.66 638.0,444.72 638.5,444.78 639.0,444.83 639.5,444.88 640.0,444.91 640.5,444.94 641.0,444.97 641.5,444.99 642.0,445.00 642.5,445.00 643.0,445.00 643.5,444.99 644.0,444.97 644.5,444.94 645.0,444.91 645.5,444.88 646.0,444.83 646.5,444.78 647.0,444.72 647.5,444.66 648.0,444.58 648.5,444.51 649.0,444.42 649.5,444.33 650.0,444.23 650.5,444.12 651.0,444.01 651.5,443.89 652.0,443.76 652.5,443.63 653.0,443.49 653.5,443.34 654.0,443.19 654.5,443.03 655.0,442.86 655.5,442.69 656.0,442.51 656.5,442.32 657.0,442.13 657.5,441.93 658.0,441.73 658.5,441.51 659.0,441.30 659.5,441.07 660.0,440.84 660.5,440.60 661.0,440.36 661.5,440.10 662.0,439.85 662.5,439.58 663.0,439.31 663.5,439.04 664.0,438.76 664.5,438.47 665.0,438.17 665.5,437.87 666.0,437.57 666.5,437.25 667.0,436.94 667.5,436.61 668.0,436.28 668.5,435.94 669.0,435.60 669.5,435.25 670.0,434.90 670.5,434.54 671.0,434.18 671.5,433.81 672.0,433.43 672.5,433.05 673.0,432.66 673.5,432.27 674.0,431.87 674.5,431.47 675.0,431.06 675.5,430.65 676.0,430.23 676.5,429.80 677.0,429.37 677.5,428.94 678.0,428.50 678.5,428.06 679.0,427.61 679.5,427.15 680.0,426.69 680.5,426.23 681.0,425.76 681.5,425.29 682.0,424.81 682.5,424.33 683.0,423.84 683.5,423.35 684.0,422.86 684.5,422.36 685.0,421.85 685.5,421.35 686.0,420.83 686.5,420.32 687.0,419.80 687.5,419.27 688.0,418.75 688.5,418.21 689.0,417.68 689.5,417.14 690.0,416.60 690.5,416.05 691.0,415.50 691.5,414.95 692.0,414.39 692.5,413.83 693.0,413.27 693.5,412.70 694.0,412.13 694.5,411.56 695.0,410.98 695.5,410.40 696.0,409.82 696.5,409.24 697.0,408.65 697.5,408.06 698.0,407.47 698.5,406.88 699.0,406.28 699.5,405.68 700.0,405.08 700.5,404.47 701.0,403.87 701.5,403.26 702.0,402.65 702.5,402.04 703.0,401.42 703.5,400.81 704.0,400.19 704.5,399.57 705.0,398.95 705.5,398.33 706.0,397.71 706.5,397.08 707.0,396.45 707.5,395.83 708.0,395.20 708.5,394.57 709.0,393.94 709.5,393.31 710.0,392.67 710.5,392.04 711.0,391.41 711.5,390.77 712.0,390.14 712.5,389.50 713.0,388.87 713.5,388.23 714.0,387.59 714.5,386.96 715.0,386.32 715.5,385.68 716.0,385.03 716.5,384.38 717.0,383.73 717.5,383.09 718.0,382.44 718.5,381.79 719.0,381.15 719.5,380.50 720.0,379.86 720.5,379.21 721.0,378.57 721.5,377.93 722.0,377.29 722.5,376.65 723.0,376.01 723.5,375.37 724.0,374.73 724.5,374.10 725.0,373.46 725.5,372.83 726.0,372.20 726.5,371.57 727.0,370.94 727.5,370.31 728.0,369.69 728.5,369.07 729.0,368.45 729.5,367.83 730.0,367.21 730.5,366.60 731.0,365.99 731.5,365.38 732.0,364.77 732.5,364.17 733.0,363.56 733.5,362.96 734.0,362.37 734.5,361.77 735.0,361.18 735.5,360.59 736.0,360.01 736.5,359.43 737.0,358.85 737.5,358.27 738.0,357.70 738.5,357.13 739.0,356.56 739.5,356.00 740.0,355.44 740.5,354.89 741.0,354.33 741.5,353.78 742.0,353.24 742.5,352.70 743.0,352.16 743.5,351.63 744.0,351.10 744.5,350.58 745.0,350.06 745.5,349.54 746.0,349.03 746.5,348.52 747.0,348.01 747.5,347.52 748.0,347.02 748.5,346.53 749.0,346.05 749.5,345.56 750.0,345.09 750.5,344.62 751.0,344.15 751.5,343.69 752.0,343.23 752.5,342.78 753.0,342.33 753.5,341.89 754.0,341.45 754.5,341.02 755.0,340.60 755.5,340.18 756.0,339.76 756.5,339.35 757.0,338.95 757.5,338.55 758.0,338.15 758.5,337.77 759.0,337.38 759.5,337.01 760.0,336.64 760.5,336.27 761.0,335.91 761.5,335.56 762.0,335.21 762.5,334.87 763.0,334.53 763.5,334.20 764.0,333.88 764.5,333.56 765.0,333.25 765.5,332.94 766.0,332.64 766.5,332.35 767.0,332.06 767.5,331.78 768.0,331.51 768.5,331.24 769.0,330.98 769.5,330.72 770.0,330.47 770.5,330.23 771.0,330.00 771.5,329.77 772.0,329.54 772.5,329.33 773.0,329.12 773.5,328.92 774.0,328.72 774.5,328.53 775.0,328.35 775.5,328.17 776.0,328.00 776.5,327.84 777.0,327.68 777.5,327.54 778.0,327.39 778.5,327.26 779.0,327.13 779.5,327.01 780.0,326.89 780.5,326.78 781.0,326.68 781.5,326.59 782.0,326.50 782.5,326.42 783.0,326.35 783.5,326.28 784.0,326.22 784.5,326.17 785.0,326.13 785.5,326.09 786.0,326.06 786.5,326.03 787.0,326.01 787.5,326.00 788.0,326.00 788.5,326.00 789.0,326.01 789.5,326.03 790.0,326.06 790.5,326.09 791.0,326.13 791.5,326.17 792.0,326.22 792.5,326.28 793.0,326.35 793.5,326.42 794.0,326.50 794.5,326.59 795.0,326.68 795.5,326.78 796.0,326.89 796.5,327.01 797.0,327.13 797.5,327.26 798.0,327.39 798.5,327.54 799.0,327.68 799.5,327.84 800.0,328.00 800.5,328.17 801.0,328.35 801.5,328.53 802.0,328.72 802.5,328.92 803.0,329.12 803.5,329.33 804.0,329.54 804.5,329.77 805.0,330.00 805.5,330.23 806.0,330.47 806.5,330.72 807.0,330.98 807.5,331.24 808.0,331.51 808.5,331.78 809.0,332.06 809.5,332.35 810.0,332.64 810.5,332.94 811.0,333.25 811.5,333.56 812.0,333.88 812.5,334.20 813.0,334.53 813.5,334.87 814.0,335.21 814.5,335.56 815.0,335.91 815.5,336.27 816.0,336.64 816.5,337.01 817.0,337.38 817.5,337.77 818.0,338.15 818.5,338.55 819.0,338.95 819.5,339.35 820.0,339.76 820.5,340.18 821.0,340.60 821.5,341.02 822.0,341.45 822.5,341.89 823.0,342.33 823.5,342.78 824.0,343.23 824.5,343.69 825.0,344.15 825.5,344.62 826.0,345.09 826.5,345.56 827.0,346.05 827.5,346.53 828.0,347.02 828.5,347.52 829.0,348.01 829.5,348.52 830.0,349.03 830.5,349.54 831.0,350.06 831.5,350.58 832.0,351.10 832.5,351.63 833.0,352.16 833.5,352.70 834.0,353.24 834.5,353.78 835.0,354.33 835.5,354.89 836.0,355.44 836.5,356.00 837.0,356.56 837.5,357.13 838.0,357.70 838.5,358.27 839.0,358.85 839.5,359.43 840.0,360.01 840.5,360.59 841.0,361.18 841.5,361.77 842.0,362.37 842.5,362.96 843.0,363.56 843.5,364.17 844.0,364.77 844.5,365.38 845.0,365.99 845.5,366.60 846.0,367.21 846.5,367.83 847.0,368.45 847.5,369.07 848.0,369.69 848.5,370.31 849.0,370.94 849.5,371.57 850.0,372.20 850.5,372.83 851.0,373.46 851.5,374.10 852.0,374.73 852.5,375.37 853.0,376.01 853.5,376.65 854.0,377.29 854.5,377.93 855.0,378.57 855.5,379.21 856.0,379.86 856.5,380.50 857.0,381.15 857.5,381.79 858.0,382.44 858.5,383.09 859.0,383.73 859.5,384.38 860.0,385.03 860.5,385.68 861.0,386.32 861.5,386.96 862.0,387.59 862.5,388.23 863.0,388.87 863.5,389.50 864.0,390.14 864.5,390.77 865.0,391.41 865.5,392.04 866.0,392.67 866.5,393.31 867.0,393.94 867.5,394.57 868.0,395.20 868.5,395.83 869.0,396.45 869.5,397.08 870.0,397.71 870.5,398.33 871.0,398.95 871.5,399.57 872.0,400.19 872.5,400.81 873.0,401.42 873.5,402.04 874.0,402.65 874.5,403.26 875.0,403.87 875.5,404.47 876.0,405.08 876.5,405.68 877.0,406.28 877.5,406.88 878.0,407.47 878.5,408.06 879.0,408.65 879.5,409.24 880.0,409.82 880.5,410.40 881.0,410.98 881.5,411.56 882.0,412.13 882.5,412.70 883.0,413.27 883.5,413.83 884.0,414.39 884.5,414.95 885.0,415.50 885.5,416.05 886.0,416.60 886.5,417.14 887.0,417.68 887.5,418.21 888.0,418.75 888.5,419.27 889.0,419.80 889.5,420.32 890.0,420.83 890.5,421.35 891.0,421.85 891.5,422.36 892.0,422.86 892.5,423.35 893.0,423.84 893.5,424.33 894.0,424.81 894.5,425.29 895.0,425.76 895.5,426.23 896.0,426.69 896.5,427.15 897.0,427.61 897.5,428.06 898.0,428.50 898.5,428.94 899.0,429.37 899.5,429.80 900.0,430.23 900.5,430.65 901.0,431.06 901.5,431.47 902.0,431.87 902.5,432.27 903.0,432.66 903.5,433.05 904.0,433.43 904.5,433.81 905.0,434.18 905.5,434.54 906.0,434.90 906.5,435.25 907.0,435.60 907.5,435.94 908.0,436.28 908.5,436.61 909.0,436.94 909.5,437.25 910.0,437.57 910.5,437.87 911.0,438.17 911.5,438.47 912.0,438.76 912.5,439.04 913.0,439.31 913.5,439.58 914.0,439.85 914.5,440.10 915.0,440.36 915.5,440.60 916.0,440.84 916.5,441.07 917.0,441.30 917.5,441.51 918.0,441.73 918.5,441.93 919.0,442.13 919.5,442.32 920.0,442.51 920.5,442.69 921.0,442.86 921.5,443.03 922.0,443.19 922.5,443.34 923.0,443.49 923.5,443.63 924.0,443.76 924.5,443.89 925.0,444.01 925.5,444.12 926.0,444.23 926.5,444.33 927.0,444.42 927.5,444.51 928.0,444.58 928.5,444.66 929.0,444.72 929.5,444.78 930.0,444.83 930.5,444.88 931.0,444.91 931.5,444.94 932.0,444.97 932.5,444.99 933.0,445.00 933.5,445.00 934.0,445.00 934.5,444.99 935.0,444.97 935.5,444.94 936.0,444.91 936.5,444.88 937.0,444.83 937.5,444.78 938.0,444.72 938.5,444.66 939.0,444.58 939.5,444.51 940.0,444.42 940.5,444.33 941.0,444.23 941.5,444.12 942.0,444.01 942.5,443.89 943.0,443.76 943.5,443.63 944.0,443.49 944.5,443.34 945.0,443.19 945.5,443.03 946.0,442.86 946.5,442.69 947.0,442.51 947.5,442.32 948.0,442.13 948.5,441.93 949.0,441.73 949.5,441.51 950.0,441.30 950.5,441.07 951.0,440.84 951.5,440.60 952.0,440.36 952.5,440.10 953.0,439.85 953.5,439.58 954.0,439.31 954.5,439.04 955.0,438.76 955.5,438.47 956.0,438.17 956.5,437.87 957.0,437.57 957.5,437.25 958.0,436.94 958.5,436.61 959.0,436.28 959.5,435.94 960.0,435.60 960.5,435.25 961.0,434.90 961.5,434.54 962.0,434.18 962.5,433.81 963.0,433.43 963.5,433.05 964.0,432.66 964.5,432.27 965.0,431.87 965.5,431.47 966.0,431.06 966.5,430.65 967.0,430.23 967.5,429.80 968.0,429.37 968.5,428.94 969.0,428.50 969.5,428.06 970.0,427.61 970.5,427.15 971.0,426.69 971.5,426.23 972.0,425.76 972.5,425.29 973.0,424.81 973.5,424.33 974.0,423.84 974.5,423.35 975.0,422.86 975.5,422.36 976.0,421.85 976.5,421.35 977.0,420.83 977.5,420.32 978.0,419.80 978.5,419.27 979.0,418.75 979.5,418.21 980.0,417.68 980.5,417.14 981.0,416.60 981.5,416.05 982.0,415.50 982.5,414.95 983.0,414.39 983.5,413.83 984.0,413.27 984.5,412.70 985.0,412.13 985.5,411.56 986.0,410.98 986.5,410.40 987.0,409.82 987.5,409.24 988.0,408.65 988.5,408.06 989.0,407.47 989.5,406.88 990.0,406.28 990.5,405.68 991.0,405.08 991.5,404.47 992.0,403.87 992.5,403.26 993.0,402.65 993.5,402.04 994.0,401.42 994.5,400.81 995.0,400.19 995.5,399.57 996.0,398.95 996.5,398.33 997.0,397.71 997.5,397.08 998.0,396.45 998.5,395.83 999.0,395.20 999.5,394.57 1000.0,393.94 1000.5,393.31" fill="none" stroke="#30c4d4" stroke-width="1.4"/>
<polyline points="544.0,349.06 544.5,349.70 545.0,350.35 545.5,351.00 546.0,351.66 546.5,352.32 547.0,352.98 547.5,353.65 548.0,354.32 548.5,355.00 549.0,355.68 549.5,356.36 550.0,357.05 550.5,357.74 551.0,358.43 551.5,359.12 552.0,359.82 552.5,360.53 553.0,361.23 553.5,361.94 554.0,362.65 554.5,363.37 555.0,364.08 555.5,364.80 556.0,365.52 556.5,366.25 557.0,366.97 557.5,367.70 558.0,368.43 558.5,369.16 559.0,369.90 559.5,370.63 560.0,371.37 560.5,372.11 561.0,372.85 561.5,373.60 562.0,374.34 562.5,375.09 563.0,375.83 563.5,376.58 564.0,377.33 564.5,378.08 565.0,378.83 565.5,379.59 566.0,380.34 566.5,381.09 567.0,381.85 567.5,382.60 568.0,383.36 568.5,384.11 569.0,384.87 569.5,385.62 570.0,386.38 570.5,387.13 571.0,387.88 571.5,388.63 572.0,389.38 572.5,390.12 573.0,390.87 573.5,391.62 574.0,392.37 574.5,393.12 575.0,393.86 575.5,394.61 576.0,395.35 576.5,396.09 577.0,396.84 577.5,397.58 578.0,398.31 578.5,399.05 579.0,399.79 579.5,400.52 580.0,401.26 580.5,401.99 581.0,402.72 581.5,403.44 582.0,404.17 582.5,404.89 583.0,405.61 583.5,406.33 584.0,407.05 584.5,407.76 585.0,408.47 585.5,409.18 586.0,409.89 586.5,410.59 587.0,411.29 587.5,411.99 588.0,412.68 588.5,413.37 589.0,414.06 589.5,414.75 590.0,415.43 590.5,416.11 591.0,416.78 591.5,417.45 592.0,418.12 592.5,418.78 593.0,419.44 593.5,420.10 594.0,420.75 594.5,421.40 595.0,422.04 595.5,422.68 596.0,423.32 596.5,423.95 597.0,424.57 597.5,425.20 598.0,425.81 598.5,426.43 599.0,427.03 599.5,427.64 600.0,428.23 600.5,428.83 601.0,429.42 601.5,430.00 602.0,430.58 602.5,431.15 603.0,431.72 603.5,432.28 604.0,432.84 604.5,433.39 605.0,433.94 605.5,434.48 606.0,435.01 606.5,435.54 607.0,436.06 607.5,436.58 608.0,437.09 608.5,437.60 609.0,438.10 609.5,438.59 610.0,439.08 610.5,439.56 611.0,440.04 611.5,440.50 612.0,440.97 612.5,441.42 613.0,441.87 613.5,442.31 614.0,442.75 614.5,443.18 615.0,443.60 615.5,444.02 616.0,444.43 616.5,444.83 617.0,445.23 617.5,445.62 618.0,446.00 618.5,446.38 619.0,446.74 619.5,447.10 620.0,447.46 620.5,447.81 621.0,448.14 621.5,448.48 622.0,448.80 622.5,449.12 623.0,449.43 623.5,449.73 624.0,450.03 624.5,450.32 625.0,450.60 625.5,450.87 626.0,451.14 626.5,451.39 627.0,451.64 627.5,451.89 628.0,452.12 628.5,452.35 629.0,452.57 629.5,452.78 630.0,452.98 630.5,453.18 631.0,453.37 631.5,453.55 632.0,453.72 632.5,453.89 633.0,454.04 633.5,454.19 634.0,454.33 634.5,454.47 635.0,454.59 635.5,454.71 636.0,454.82 636.5,454.92 637.0,455.01 637.5,455.10 638.0,455.17 638.5,455.24 639.0,455.30 639.5,455.35 640.0,455.40 640.5,455.44 641.0,455.46 641.5,455.48 642.0,455.50 642.5,455.50 643.0,455.50 643.5,455.48 644.0,455.46 644.5,455.44 645.0,455.40 645.5,455.35 646.0,455.30 646.5,455.24 647.0,455.17 647.5,455.10 648.0,455.01 648.5,454.92 649.0,454.82 649.5,454.71 650.0,454.59 650.5,454.47 651.0,454.33 651.5,454.19 652.0,454.04 652.5,453.89 653.0,453.72 653.5,453.55 654.0,453.37 654.5,453.18 655.0,452.98 655.5,452.78 656.0,452.57 656.5,452.35 657.0,452.12 657.5,451.89 658.0,451.64 658.5,451.39 659.0,451.14 659.5,450.87 660.0,450.60 660.5,450.32 661.0,450.03 661.5,449.73 662.0,449.43 662.5,449.12 663.0,448.80 663.5,448.48 664.0,448.14 664.5,447.81 665.0,447.46 665.5,447.10 666.0,446.74 666.5,446.38 667.0,446.00 667.5,445.62 668.0,445.23 668.5,444.83 669.0,444.43 669.5,444.02 670.0,443.60 670.5,443.18 671.0,442.75 671.5,442.31 672.0,441.87 672.5,441.42 673.0,440.97 673.5,440.50 674.0,440.04 674.5,439.56 675.0,439.08 675.5,438.59 676.0,438.10 676.5,437.60 677.0,437.09 677.5,436.58 678.0,436.06 678.5,435.54 679.0,435.01 679.5,434.48 680.0,433.94 680.5,433.39 681.0,432.84 681.5,432.28 682.0,431.72 682.5,431.15 683.0,430.58 683.5,430.00 684.0,429.42 684.5,428.83 685.0,428.23 685.5,427.64 686.0,427.03 686.5,426.43 687.0,425.81 687.5,425.20 688.0,424.57 688.5,423.95 689.0,423.32 689.5,422.68 690.0,422.04 690.5,421.40 691.0,420.75 691.5,420.10 692.0,419.44 692.5,418.78 693.0,418.12 693.5,417.45 694.0,416.78 694.5,416.11 695.0,415.43 695.5,414.75 696.0,414.06 696.5,413.37 697.0,412.68 697.5,411.99 698.0,411.29 698.5,410.59 699.0,409.89 699.5,409.18 700.0,408.47 700.5,407.76 701.0,407.05 701.5,406.33 702.0,405.61 702.5,404.89 703.0,404.17 703.5,403.44 704.0,402.72 704.5,401.99 705.0,401.26 705.5,400.52 706.0,399.79 706.5,399.05 707.0,398.31 707.5,397.58 708.0,396.84 708.5,396.09 709.0,395.35 709.5,394.61 710.0,393.86 710.5,393.12 711.0,392.37 711.5,391.62 712.0,390.87 712.5,390.12 713.0,389.38 713.5,388.63 714.0,387.88 714.5,387.13 715.0,386.38 715.5,385.62 716.0,384.87 716.5,384.11 717.0,383.36 717.5,382.60 718.0,381.85 718.5,381.09 719.0,380.34 719.5,379.59 720.0,378.83 720.5,378.08 721.0,377.33 721.5,376.58 722.0,375.83 722.5,375.09 723.0,374.34 723.5,373.60 724.0,372.85 724.5,372.11 725.0,371.37 725.5,370.63 726.0,369.90 726.5,369.16 727.0,368.43 727.5,367.70 728.0,366.97 728.5,366.25 729.0,365.52 729.5,364.80 730.0,364.08 730.5,363.37 731.0,362.65 731.5,361.94 732.0,361.23 732.5,360.53 733.0,359.82 733.5,359.12 734.0,358.43 734.5,357.74 735.0,357.05 735.5,356.36 736.0,355.68 736.5,355.00 737.0,354.32 737.5,353.65 738.0,352.98 738.5,352.32 739.0,351.66 739.5,351.00 740.0,350.35 740.5,349.70 741.0,349.06 741.5,348.42 742.0,347.78 742.5,347.15 743.0,346.52 743.5,345.90 744.0,345.28 744.5,344.67 745.0,344.06 745.5,343.46 746.0,342.86 746.5,342.27 747.0,341.68 747.5,341.10 748.0,340.52 748.5,339.95 749.0,339.39 749.5,338.82 750.0,338.27 750.5,337.72 751.0,337.17 751.5,336.64 752.0,336.10 752.5,335.58 753.0,335.06 753.5,334.54 754.0,334.03 754.5,333.53 755.0,333.03 755.5,332.54 756.0,332.05 756.5,331.58 757.0,331.10 757.5,330.64 758.0,330.18 758.5,329.73 759.0,329.28 759.5,328.84 760.0,328.41 760.5,327.98 761.0,327.56 761.5,327.15 762.0,326.74 762.5,326.34 763.0,325.95 763.5,325.57 764.0,325.19 764.5,324.82 765.0,324.46 765.5,324.10 766.0,323.75 766.5,323.41 767.0,323.07 767.5,322.75 768.0,322.43 768.5,322.11 769.0,321.81 769.5,321.51 770.0,321.22 770.5,320.94 771.0,320.66 771.5,320.40 772.0,320.14 772.5,319.88 773.0,319.64 773.5,319.40 774.0,319.17 774.5,318.95 775.0,318.74 775.5,318.53 776.0,318.34 776.5,318.15 777.0,317.97 777.5,317.79 778.0,317.63 778.5,317.47 779.0,317.32 779.5,317.18 780.0,317.04 780.5,316.92 781.0,316.80 781.5,316.69 782.0,316.59 782.5,316.49 783.0,316.41 783.5,316.33 784.0,316.26 784.5,316.20 785.0,316.15 785.5,316.10 786.0,316.07 786.5,316.04 787.0,316.02 787.5,316.00 788.0,316.00 788.5,316.00 789.0,316.02 789.5,316.04 790.0,316.07 790.5,316.10 791.0,316.15 791.5,316.20 792.0,316.26 792.5,316.33 793.0,316.41 793.5,316.49 794.0,316.59 794.5,316.69 795.0,316.80 795.5,316.92 796.0,317.04 796.5,317.18 797.0,317.32 797.5,317.47 798.0,317.63 798.5,317.79 799.0,317.97 799.5,318.15 800.0,318.34 800.5,318.53 801.0,318.74 801.5,318.95 802.0,319.17 802.5,319.40 803.0,319.64 803.5,319.88 804.0,320.14 804.5,320.40 805.0,320.66 805.5,320.94 806.0,321.22 806.5,321.51 807.0,321.81 807.5,322.11 808.0,322.43 808.5,322.75 809.0,323.07 809.5,323.41 810.0,323.75 810.5,324.10 811.0,324.46 811.5,324.82 812.0,325.19 812.5,325.57 813.0,325.95 813.5,326.34 814.0,326.74 814.5,327.15 815.0,327.56 815.5,327.98 816.0,328.41 816.5,328.84 817.0,329.28 817.5,329.73 818.0,330.18 818.5,330.64 819.0,331.10 819.5,331.58 820.0,332.05 820.5,332.54 821.0,333.03 821.5,333.53 822.0,334.03 822.5,334.54 823.0,335.06 823.5,335.58 824.0,336.10 824.5,336.64 825.0,337.17 825.5,337.72 826.0,338.27 826.5,338.82 827.0,339.39 827.5,339.95 828.0,340.52 828.5,341.10 829.0,341.68 829.5,342.27 830.0,342.86 830.5,343.46 831.0,344.06 831.5,344.67 832.0,345.28 832.5,345.90 833.0,346.52 833.5,347.15 834.0,347.78 834.5,348.42 835.0,349.06 835.5,349.70 836.0,350.35 836.5,351.00 837.0,351.66 837.5,352.32 838.0,352.98 838.5,353.65 839.0,354.32 839.5,355.00 840.0,355.68 840.5,356.36 841.0,357.05 841.5,357.74 842.0,358.43 842.5,359.12 843.0,359.82 843.5,360.53 844.0,361.23 844.5,361.94 845.0,362.65 845.5,363.37 846.0,364.08 846.5,364.80 847.0,365.52 847.5,366.25 848.0,366.97 848.5,367.70 849.0,368.43 849.5,369.16 850.0,369.90 850.5,370.63 851.0,371.37 851.5,372.11 852.0,372.85 852.5,373.60 853.0,374.34 853.5,375.09 854.0,375.83 854.5,376.58 855.0,377.33 855.5,378.08 856.0,378.83 856.5,379.59 857.0,380.34 857.5,381.09 858.0,381.85 858.5,382.60 859.0,383.36 859.5,384.11 860.0,384.87 860.5,385.62 861.0,386.38 861.5,387.13 862.0,387.88 862.5,388.63 863.0,389.38 863.5,390.12 864.0,390.87 864.5,391.62 865.0,392.37 865.5,393.12 866.0,393.86 866.5,394.61 867.0,395.35 867.5,396.09 868.0,396.84 868.5,397.58 869.0,398.31 869.5,399.05 870.0,399.79 870.5,400.52 871.0,401.26 871.5,401.99 872.0,402.72 872.5,403.44 873.0,404.17 873.5,404.89 874.0,405.61 874.5,406.33 875.0,407.05 875.5,407.76 876.0,408.47 876.5,409.18 877.0,409.89 877.5,410.59 878.0,411.29 878.5,411.99 879.0,412.68 879.5,413.37 880.0,414.06 880.5,414.75 881.0,415.43 881.5,416.11 882.0,416.78 882.5,417.45 883.0,418.12 883.5,418.78 884.0,419.44 884.5,420.10 885.0,420.75 885.5,421.40 886.0,422.04 886.5,422.68 887.0,423.32 887.5,423.95 888.0,424.57 888.5,425.20 889.0,425.81 889.5,426.43 890.0,427.03 890.5,427.64 891.0,428.23 891.5,428.83 892.0,429.42 892.5,430.00 893.0,430.58 893.5,431.15 894.0,431.72 894.5,432.28 895.0,432.84 895.5,433.39 896.0,433.94 896.5,434.48 897.0,435.01 897.5,435.54 898.0,436.06 898.5,436.58 899.0,437.09 899.5,437.60 900.0,438.10 900.5,438.59 901.0,439.08 901.5,439.56 902.0,440.04 902.5,440.50 903.0,440.97 903.5,441.42 904.0,441.87 904.5,442.31 905.0,442.75 905.5,443.18 906.0,443.60 906.5,444.02 907.0,444.43 907.5,444.83 908.0,445.23 908.5,445.62 909.0,446.00 909.5,446.38 910.0,446.74 910.5,447.10 911.0,447.46 911.5,447.81 912.0,448.14 912.5,448.48 913.0,448.80 913.5,449.12 914.0,449.43 914.5,449.73 915.0,450.03 915.5,450.32 916.0,450.60 916.5,450.87 917.0,451.14 917.5,451.39 918.0,451.64 918.5,451.89 919.0,452.12 919.5,452.35 920.0,452.57 920.5,452.78 921.0,452.98 921.5,453.18 922.0,453.37 922.5,453.55 923.0,453.72 923.5,453.89 924.0,454.04 924.5,454.19 925.0,454.33 925.5,454.47 926.0,454.59 926.5,454.71 927.0,454.82 927.5,454.92 928.0,455.01 928.5,455.10 929.0,455.17 929.5,455.24 930.0,455.30 930.5,455.35 931.0,455.40 931.5,455.44 932.0,455.46 932.5,455.48 933.0,455.50 933.5,455.50 934.0,455.50 934.5,455.48 935.0,455.46 935.5,455.44 936.0,455.40 936.5,455.35 937.0,455.30 937.5,455.24 938.0,455.17 938.5,455.10 939.0,455.01 939.5,454.92 940.0,454.82 940.5,454.71 941.0,454.59 941.5,454.47 942.0,454.33 942.5,454.19 943.0,454.04 943.5,453.89 944.0,453.72 944.5,453.55 945.0,453.37 945.5,453.18 946.0,452.98 946.5,452.78 947.0,452.57 947.5,452.35 948.0,452.12 948.5,451.89 949.0,451.64 949.5,451.39 950.0,451.14 950.5,450.87 951.0,450.60 951.5,450.32 952.0,450.03 952.5,449.73 953.0,449.43 953.5,449.12 954.0,448.80 954.5,448.48 955.0,448.14 955.5,447.81 956.0,447.46 956.5,447.10 957.0,446.74 957.5,446.38 958.0,446.00 958.5,445.62 959.0,445.23 959.5,444.83 960.0,444.43 960.5,444.02 961.0,443.60 961.5,443.18 962.0,442.75 962.5,442.31 963.0,441.87 963.5,441.42 964.0,440.97 964.5,440.50 965.0,440.04 965.5,439.56 966.0,439.08 966.5,438.59 967.0,438.10 967.5,437.60 968.0,437.09 968.5,436.58 969.0,436.06 969.5,435.54 970.0,435.01 970.5,434.48 971.0,433.94 971.5,433.39 972.0,432.84 972.5,432.28 973.0,431.72 973.5,431.15 974.0,430.58 974.5,430.00 975.0,429.42 975.5,428.83 976.0,428.23 976.5,427.64 977.0,427.03 977.5,426.43 978.0,425.81 978.5,425.20 979.0,424.57 979.5,423.95 980.0,423.32 980.5,422.68 981.0,422.04 981.5,421.40 982.0,420.75 982.5,420.10 983.0,419.44 983.5,418.78 984.0,418.12 984.5,417.45 985.0,416.78 985.5,416.11 986.0,415.43 986.5,414.75 987.0,414.06 987.5,413.37 988.0,412.68 988.5,411.99 989.0,411.29 989.5,410.59 990.0,409.89 990.5,409.18 991.0,408.47 991.5,407.76 992.0,407.05 992.5,406.33 993.0,405.61 993.5,404.89 994.0,404.17 994.5,403.44 995.0,402.72 995.5,401.99 996.0,401.26 996.5,400.52 997.0,399.79 997.5,399.05 998.0,398.31 998.5,397.58 999.0,396.84 999.5,396.09 1000.0,395.35 1000.5,394.61" fill="none" stroke="#3cc43c" stroke-width="1.4"/>
<polyline points="544.0,343.78 544.5,344.51 545.0,345.25 545.5,346.00 546.0,346.75 546.5,347.51 547.0,348.26 547.5,349.03 548.0,349.80 548.5,350.57 549.0,351.34 549.5,352.13 550.0,352.91 550.5,353.70 551.0,354.49 551.5,355.29 552.0,356.08 552.5,356.89 553.0,357.69 553.5,358.50 554.0,359.32 554.5,360.13 555.0,360.95 555.5,361.77 556.0,362.60 556.5,363.42 557.0,364.25 557.5,365.09 558.0,365.92 558.5,366.76 559.0,367.60 559.5,368.44 560.0,369.28 560.5,370.13 561.0,370.98 561.5,371.82 562.0,372.68 562.5,373.53 563.0,374.38 563.5,375.24 564.0,376.09 564.5,376.95 565.0,377.81 565.5,378.67 566.0,379.53 566.5,380.39 567.0,381.25 567.5,382.12 568.0,382.98 568.5,383.84 569.0,384.70 569.5,385.57 570.0,386.43 570.5,387.28 571.0,388.13 571.5,388.98 572.0,389.84 572.5,390.69 573.0,391.54 573.5,392.39 574.0,393.24 574.5,394.09 575.0,394.94 575.5,395.78 576.0,396.63 576.5,397.47 577.0,398.32 577.5,399.16 578.0,400.00 578.5,400.84 579.0,401.67 579.5,402.51 580.0,403.34 580.5,404.17 581.0,405.00 581.5,405.83 582.0,406.65 582.5,407.47 583.0,408.29 583.5,409.11 584.0,409.93 584.5,410.74 585.0,411.55 585.5,412.35 586.0,413.15 586.5,413.95 587.0,414.75 587.5,415.54 588.0,416.33 588.5,417.12 589.0,417.90 589.5,418.68 590.0,419.45 590.5,420.22 591.0,420.99 591.5,421.75 592.0,422.51 592.5,423.26 593.0,424.01 593.5,424.76 594.0,425.50 594.5,426.24 595.0,426.97 595.5,427.69 596.0,428.42 596.5,429.13 597.0,429.85 597.5,430.55 598.0,431.25 598.5,431.95 599.0,432.64 599.5,433.33 600.0,434.01 600.5,434.68 601.0,435.35 601.5,436.01 602.0,436.67 602.5,437.32 603.0,437.97 603.5,438.61 604.0,439.24 604.5,439.87 605.0,440.49 605.5,441.10 606.0,441.71 606.5,442.31 607.0,442.91 607.5,443.50 608.0,444.08 608.5,444.65 609.0,445.22 609.5,445.78 610.0,446.33 610.5,446.88 611.0,447.42 611.5,447.95 612.0,448.48 612.5,449.00 613.0,449.51 613.5,450.01 614.0,450.51 614.5,451.00 615.0,451.48 615.5,451.95 616.0,452.42 616.5,452.88 617.0,453.33 617.5,453.77 618.0,454.20 618.5,454.63 619.0,455.05 619.5,455.46 620.0,455.86 620.5,456.25 621.0,456.64 621.5,457.02 622.0,457.39 622.5,457.75 623.0,458.10 623.5,458.44 624.0,458.78 624.5,459.11 625.0,459.43 625.5,459.74 626.0,460.04 626.5,460.33 627.0,460.62 627.5,460.89 628.0,461.16 628.5,461.42 629.0,461.67 629.5,461.91 630.0,462.14 630.5,462.36 631.0,462.58 631.5,462.78 632.0,462.98 632.5,463.17 633.0,463.34 633.5,463.51 634.0,463.67 634.5,463.82 635.0,463.97 635.5,464.10 636.0,464.22 636.5,464.34 637.0,464.44 637.5,464.54 638.0,464.63 638.5,464.71 639.0,464.77 639.5,464.83 640.0,464.88 640.5,464.93 641.0,464.96 641.5,464.98 642.0,465.00 642.5,465.00 643.0,465.00 643.5,464.98 644.0,464.96 644.5,464.93 645.0,464.88 645.5,464.83 646.0,464.77 646.5,464.71 647.0,464.63 647.5,464.54 648.0,464.44 648.5,464.34 649.0,464.22 649.5,464.10 650.0,463.97 650.5,463.82 651.0,463.67 651.5,463.51 652.0,463.34 652.5,463.17 653.0,462.98 653.5,462.78 654.0,462.58 654.5,462.36 655.0,462.14 655.5,461.91 656.0,461.67 656.5,461.42 657.0,461.16 657.5,460.89 658.0,460.62 658.5,460.33 659.0,460.04 659.5,459.74 660.0,459.43 660.5,459.11 661.0,458.78 661.5,458.44 662.0,458.10 662.5,457.75 663.0,457.39 663.5,457.02 664.0,456.64 664.5,456.25 665.0,455.86 665.5,455.46 666.0,455.05 666.5,454.63 667.0,454.20 667.5,453.77 668.0,453.33 668.5,452.88 669.0,452.42 669.5,451.95 670.0,451.48 670.5,451.00 671.0,450.51 671.5,450.01 672.0,449.51 672.5,449.00 673.0,448.48 673.5,447.95 674.0,447.42 674.5,446.88 675.0,446.33 675.5,445.78 676.0,445.22 676.5,444.65 677.0,444.08 677.5,443.50 678.0,442.91 678.5,442.31 679.0,441.71 679.5,441.10 680.0,440.49 680.5,439.87 681.0,439.24 681.5,438.61 682.0,437.97 682.5,437.32 683.0,436.67 683.5,436.01 684.0,435.35 684.5,434.68 685.0,434.01 685.5,433.33 686.0,432.64 686.5,431.95 687.0,431.25 687.5,430.55 688.0,429.85 688.5,429.13 689.0,428.42 689.5,427.69 690.0,426.97 690.5,426.24 691.0,425.50 691.5,424.76 692.0,424.01 692.5,423.26 693.0,422.51 693.5,421.75 694.0,420.99 694.5,420.22 695.0,419.45 695.5,418.68 696.0,417.90 696.5,417.12 697.0,416.33 697.5,415.54 698.0,414.75 698.5,413.95 699.0,413.15 699.5,412.35 700.0,411.55 700.5,410.74 701.0,409.93 701.5,409.11 702.0,408.29 702.5,407.47 703.0,406.65 703.5,405.83 704.0,405.00 704.5,404.17 705.0,403.34 705.5,402.51 706.0,401.67 706.5,400.84 707.0,400.00 707.5,399.16 708.0,398.32 708.5,397.47 709.0,396.63 709.5,395.78 710.0,394.94 710.5,394.09 711.0,393.24 711.5,392.39 712.0,391.54 712.5,390.69 713.0,389.84 713.5,388.98 714.0,388.13 714.5,387.28 715.0,386.43 715.5,385.57 716.0,384.70 716.5,383.84 717.0,382.98 717.5,382.12 718.0,381.25 718.5,380.39 719.0,379.53 719.5,378.67 720.0,377.81 720.5,376.95 721.0,376.09 721.5,375.24 722.0,374.38 722.5,373.53 723.0,372.68 723.5,371.82 724.0,370.98 724.5,370.13 725.0,369.28 725.5,368.44 726.0,367.60 726.5,366.76 727.0,365.92 727.5,365.09 728.0,364.25 728.5,363.42 729.0,362.60 729.5,361.77 730.0,360.95 730.5,360.13 731.0,359.32 731.5,358.50 732.0,357.69 732.5,356.89 733.0,356.08 733.5,355.29 734.0,354.49 734.5,353.70 735.0,352.91 735.5,352.13 736.0,351.34 736.5,350.57 737.0,349.80 737.5,349.03 738.0,348.26 738.5,347.51 739.0,346.75 739.5,346.00 740.0,345.25 740.5,344.51 741.0,343.78 741.5,343.05 742.0,342.32 742.5,341.60 743.0,340.88 743.5,340.17 744.0,339.47 744.5,338.77 745.0,338.07 745.5,337.38 746.0,336.70 746.5,336.02 747.0,335.35 747.5,334.69 748.0,334.03 748.5,333.37 749.0,332.73 749.5,332.09 750.0,331.45 750.5,330.82 751.0,330.20 751.5,329.58 752.0,328.98 752.5,328.37 753.0,327.78 753.5,327.19 754.0,326.61 754.5,326.03 755.0,325.46 755.5,324.90 756.0,324.35 756.5,323.80 757.0,323.26 757.5,322.73 758.0,322.20 758.5,321.69 759.0,321.18 759.5,320.67 760.0,320.18 760.5,319.69 761.0,319.21 761.5,318.74 762.0,318.28 762.5,317.82 763.0,317.37 763.5,316.93 764.0,316.50 764.5,316.08 765.0,315.66 765.5,315.26 766.0,314.86 766.5,314.47 767.0,314.08 767.5,313.71 768.0,313.34 768.5,312.99 769.0,312.64 769.5,312.30 770.0,311.97 770.5,311.64 771.0,311.33 771.5,311.02 772.0,310.73 772.5,310.44 773.0,310.16 773.5,309.89 774.0,309.63 774.5,309.37 775.0,309.13 775.5,308.90 776.0,308.67 776.5,308.45 777.0,308.25 777.5,308.05 778.0,307.86 778.5,307.68 779.0,307.51 779.5,307.50 780.0,307.50 780.5,307.50 781.0,307.50 781.5,307.50 782.0,307.50 782.5,307.50 783.0,307.50 783.5,307.50 784.0,307.50 784.5,307.50 785.0,307.50 785.5,307.50 786.0,307.50 786.5,307.50 787.0,307.50 787.5,307.50 788.0,307.50 788.5,307.50 789.0,307.50 789.5,307.50 790.0,307.50 790.5,307.50 791.0,307.50 791.5,307.50 792.0,307.50 792.5,307.50 793.0,307.50 793.5,307.50 794.0,307.50 794.5,307.50 795.0,307.50 795.5,307.50 796.0,307.50 796.5,307.50 797.0,307.51 797.5,307.68 798.0,307.86 798.5,308.05 799.0,308.25 799.5,308.45 800.0,308.67 800.5,308.90 801.0,309.13 801.5,309.37 802.0,309.63 802.5,309.89 803.0,310.16 803.5,310.44 804.0,310.73 804.5,311.02 805.0,311.33 805.5,311.64 806.0,311.97 806.5,312.30 807.0,312.64 807.5,312.99 808.0,313.34 808.5,313.71 809.0,314.08 809.5,314.47 810.0,314.86 810.5,315.26 811.0,315.66 811.5,316.08 812.0,316.50 812.5,316.93 813.0,317.37 813.5,317.82 814.0,318.28 814.5,318.74 815.0,319.21 815.5,319.69 816.0,320.18 816.5,320.67 817.0,321.18 817.5,321.69 818.0,322.20 818.5,322.73 819.0,323.26 819.5,323.80 820.0,324.35 820.5,324.90 821.0,325.46 821.5,326.03 822.0,326.61 822.5,327.19 823.0,327.78 823.5,328.37 824.0,328.98 824.5,329.58 825.0,330.20 825.5,330.82 826.0,331.45 826.5,332.09 827.0,332.73 827.5,333.37 828.0,334.03 828.5,334.69 829.0,335.35 829.5,336.02 830.0,336.70 830.5,337.38 831.0,338.07 831.5,338.77 832.0,339.47 832.5,340.17 833.0,340.88 833.5,341.60 834.0,342.32 834.5,343.05 835.0,343.78 835.5,344.51 836.0,345.25 836.5,346.00 837.0,346.75 837.5,347.51 838.0,348.26 838.5,349.03 839.0,349.80 839.5,350.57 840.0,351.34 840.5,352.13 841.0,352.91 841.5,353.70 842.0,354.49 842.5,355.29 843.0,356.08 843.5,356.89 844.0,357.69 844.5,358.50 845.0,359.32 845.5,360.13 846.0,360.95 846.5,361.77 847.0,362.60 847.5,363.42 848.0,364.25 848.5,365.09 849.0,365.92 849.5,366.76 850.0,367.60 850.5,368.44 851.0,369.28 851.5,370.13 852.0,370.98 852.5,371.82 853.0,372.68 853.5,373.53 854.0,374.38 854.5,375.24 855.0,376.09 855.5,376.95 856.0,377.81 856.5,378.67 857.0,379.53 857.5,380.39 858.0,381.25 858.5,382.12 859.0,382.98 859.5,383.84 860.0,384.70 860.5,385.57 861.0,386.43 861.5,387.28 862.0,388.13 862.5,388.98 863.0,389.84 863.5,390.69 864.0,391.54 864.5,392.39 865.0,393.24 865.5,394.09 866.0,394.94 866.5,395.78 867.0,396.63 867.5,397.47 868.0,398.32 868.5,399.16 869.0,400.00 869.5,400.84 870.0,401.67 870.5,402.51 871.0,403.34 871.5,404.17 872.0,405.00 872.5,405.83 873.0,406.65 873.5,407.47 874.0,408.29 874.5,409.11 875.0,409.93 875.5,410.74 876.0,411.55 876.5,412.35 877.0,413.15 877.5,413.95 878.0,414.75 878.5,415.54 879.0,416.33 879.5,417.12 880.0,417.90 880.5,418.68 881.0,419.45 881.5,420.22 882.0,420.99 882.5,421.75 883.0,422.51 883.5,423.26 884.0,424.01 884.5,424.76 885.0,425.50 885.5,426.24 886.0,426.97 886.5,427.69 887.0,428.42 887.5,429.13 888.0,429.85 888.5,430.55 889.0,431.25 889.5,431.95 890.0,432.64 890.5,433.33 891.0,434.01 891.5,434.68 892.0,435.35 892.5,436.01 893.0,436.67 893.5,437.32 894.0,437.97 894.5,438.61 895.0,439.24 895.5,439.87 896.0,440.49 896.5,441.10 897.0,441.71 897.5,442.31 898.0,442.91 898.5,443.50 899.0,444.08 899.5,444.65 900.0,445.22 900.5,445.78 901.0,446.33 901.5,446.88 902.0,447.42 902.5,447.95 903.0,448.48 903.5,449.00 904.0,449.51 904.5,450.01 905.0,450.51 905.5,451.00 906.0,451.48 906.5,451.95 907.0,452.42 907.5,452.88 908.0,453.33 908.5,453.77 909.0,454.20 909.5,454.63 910.0,455.05 910.5,455.46 911.0,455.86 911.5,456.25 912.0,456.64 912.5,457.02 913.0,457.39 913.5,457.75 914.0,458.10 914.5,458.44 915.0,458.78 915.5,459.11 916.0,459.43 916.5,459.74 917.0,460.04 917.5,460.33 918.0,460.62 918.5,460.89 919.0,461.16 919.5,461.42 920.0,461.67 920.5,461.91 921.0,462.14 921.5,462.36 922.0,462.58 922.5,462.78 923.0,462.98 923.5,463.17 924.0,463.34 924.5,463.51 925.0,463.67 925.5,463.82 926.0,463.97 926.5,464.10 927.0,464.22 927.5,464.34 928.0,464.44 928.5,464.54 929.0,464.63 929.5,464.71 930.0,464.77 930.5,464.83 931.0,464.88 931.5,464.93 932.0,464.96 932.5,464.98 933.0,465.00 933.5,465.00 934.0,465.00 934.5,464.98 935.0,464.96 935.5,464.93 936.0,464.88 936.5,464.83 937.0,464.77 937.5,464.71 938.0,464.63 938.5,464.54 939.0,464.44 939.5,464.34 940.0,464.22 940.5,464.10 941.0,463.97 941.5,463.82 942.0,463.67 942.5,463.51 943.0,463.34 943.5,463.17 944.0,462.98 944.5,462.78 945.0,462.58 945.5,462.36 946.0,462.14 946.5,461.91 947.0,461.67 947.5,461.42 948.0,461.16 948.5,460.89 949.0,460.62 949.5,460.33 950.0,460.04 950.5,459.74 951.0,459.43 951.5,459.11 952.0,458.78 952.5,458.44 953.0,458.10 953.5,457.75 954.0,457.39 954.5,457.02 955.0,456.64 955.5,456.25 956.0,455.86 956.5,455.46 957.0,455.05 957.5,454.63 958.0,454.20 958.5,453.77 959.0,453.33 959.5,452.88 960.0,452.42 960.5,451.95 961.0,451.48 961.5,451.00 962.0,450.51 962.5,450.01 963.0,449.51 963.5,449.00 964.0,448.48 964.5,447.95 965.0,447.42 965.5,446.88 966.0,446.33 966.5,445.78 967.0,445.22 967.5,444.65 968.0,444.08 968.5,443.50 969.0,442.91 969.5,442.31 970.0,441.71 970.5,441.10 971.0,440.49 971.5,439.87 972.0,439.24 972.5,438.61 973.0,437.97 973.5,437.32 974.0,436.67 974.5,436.01 975.0,435.35 975.5,434.68 976.0,434.01 976.5,433.33 977.0,432.64 977.5,431.95 978.0,431.25 978.5,430.55 979.0,429.85 979.5,429.13 980.0,428.42 980.5,427.69 981.0,426.97 981.5,426.24 982.0,425.50 982.5,424.76 983.0,424.01 983.5,423.26 984.0,422.51 984.5,421.75 985.0,420.99 985.5,420.22 986.0,419.45 986.5,418.68 987.0,417.90 987.5,417.12 988.0,416.33 988.5,415.54 989.0,414.75 989.5,413.95 990.0,413.15 990.5,412.35 991.0,411.55 991.5,410.74 992.0,409.93 992.5,409.11 993.0,408.29 993.5,407.47 994.0,406.65 994.5,405.83 995.0,405.00 995.5,404.17 996.0,403.34 996.5,402.51 997.0,401.67 997.5,400.84 998.0,400.00 998.5,399.16 999.0,398.32 999.5,397.47 1000.0,396.63 1000.5,395.78" fill="none" stroke="#2040c8" stroke-width="1.4"/>
<line x1="540" y1="306.80" x2="544" y2="306.80" stroke="#333" stroke-width="1"/>
<line x1="540" y1="322.72" x2="544" y2="322.72" stroke="#333" stroke-width="1"/>
<line x1="540" y1="338.64" x2="544" y2="338.64" stroke="#333" stroke-width="1"/>
<line x1="540" y1="354.56" x2="544" y2="354.56" stroke="#333" stroke-width="1"/>
<line x1="540" y1="370.48" x2="544" y2="370.48" stroke="#333" stroke-width="1"/>
<line x1="540" y1="386.40" x2="544" y2="386.40" stroke="#333" stroke-width="1"/>
<line x1="540" y1="402.32" x2="544" y2="402.32" stroke="#333" stroke-width="1"/>
<line x1="540" y1="418.24" x2="544" y2="418.24" stroke="#333" stroke-width="1"/>
<line x1="540" y1="434.16" x2="544" y2="434.16" stroke="#333" stroke-width="1"/>
<line x1="540" y1="450.08" x2="544" y2="450.08" stroke="#333" stroke-width="1"/>
<line x1="540" y1="466.00" x2="544" y2="466.00" stroke="#333" stroke-width="1"/>
</svg>
<div class="a" style="left:509px;top:306.4px;width:35px;height:163px;overflow:hidden">
<div class="t" style="left:7.50px;top:-4.47px;font-size:8.7px;line-height:11px;color:#1e1e1e;transform:scaleX(0.8906);transform-origin:0 0;-webkit-text-stroke:0.12px #1e1e1e">1000.0</div>
<div class="t" style="left:10.60px;top:11.45px;font-size:8.7px;line-height:11px;color:#1e1e1e;transform:scaleX(0.9462);transform-origin:0 0;-webkit-text-stroke:0.12px #1e1e1e">888.0</div>
<div class="t" style="left:10.60px;top:27.37px;font-size:8.7px;line-height:11px;color:#1e1e1e;transform:scaleX(0.9462);transform-origin:0 0;-webkit-text-stroke:0.12px #1e1e1e">776.0</div>
<div class="t" style="left:10.60px;top:43.29px;font-size:8.7px;line-height:11px;color:#1e1e1e;transform:scaleX(0.9462);transform-origin:0 0;-webkit-text-stroke:0.12px #1e1e1e">664.0</div>
<div class="t" style="left:10.60px;top:59.21px;font-size:8.7px;line-height:11px;color:#1e1e1e;transform:scaleX(0.9462);transform-origin:0 0;-webkit-text-stroke:0.12px #1e1e1e">552.0</div>
<div class="t" style="left:10.60px;top:75.13px;font-size:8.7px;line-height:11px;color:#1e1e1e;transform:scaleX(0.9462);transform-origin:0 0;-webkit-text-stroke:0.12px #1e1e1e">440.0</div>
<div class="t" style="left:10.60px;top:91.05px;font-size:8.7px;line-height:11px;color:#1e1e1e;transform:scaleX(0.9462);transform-origin:0 0;-webkit-text-stroke:0.12px #1e1e1e">328.0</div>
<div class="t" style="left:10.60px;top:106.97px;font-size:8.7px;line-height:11px;color:#1e1e1e;transform:scaleX(0.9462);transform-origin:0 0;-webkit-text-stroke:0.12px #1e1e1e">216.0</div>
<div class="t" style="left:10.60px;top:122.89px;font-size:8.7px;line-height:11px;color:#1e1e1e;transform:scaleX(0.9462);transform-origin:0 0;-webkit-text-stroke:0.12px #1e1e1e">104.0</div>
<div class="t" style="left:16.90px;top:138.81px;font-size:8.7px;line-height:11px;color:#1e1e1e;transform:scaleX(0.9539);transform-origin:0 0;-webkit-text-stroke:0.12px #1e1e1e">-8.0</div>
<div class="t" style="left:7.60px;top:149.83px;font-size:8.7px;line-height:11px;color:#1e1e1e;transform:scaleX(0.9567);transform-origin:0 0;-webkit-text-stroke:0.12px #1e1e1e">-120.0</div>
</div>
<div class="a" style="left:511px;top:312.7px;width:31.4px;height:7.3px;background:#1f47a0"></div>
<div class="a" style="left:544.5px;top:440px;width:455.5px;height:30px;overflow:hidden">
<div class="t" style="left:-14.80px;top:11.75px;font-size:7.2px;line-height:9px;color:#d4d4d4;transform:scaleX(1.1132);transform-origin:0 0;">10:26:17</div>
<div class="t" style="left:-14.80px;top:18.85px;font-size:7.2px;line-height:9px;color:#d4d4d4;transform:scaleX(1.1132);transform-origin:0 0;">10/14/14</div>
<div class="t" style="left:59.20px;top:11.75px;font-size:7.2px;line-height:9px;color:#d4d4d4;transform:scaleX(1.1132);transform-origin:0 0;">10:27:57</div>
<div class="t" style="left:59.20px;top:18.85px;font-size:7.2px;line-height:9px;color:#d4d4d4;transform:scaleX(1.1132);transform-origin:0 0;">10/14/14</div>
<div class="t" style="left:133.20px;top:11.75px;font-size:7.2px;line-height:9px;color:#d4d4d4;transform:scaleX(1.1132);transform-origin:0 0;">10:29:37</div>
<div class="t" style="left:133.20px;top:18.85px;font-size:7.2px;line-height:9px;color:#d4d4d4;transform:scaleX(1.1132);transform-origin:0 0;">10/14/14</div>
<div class="t" style="left:207.20px;top:11.75px;font-size:7.2px;line-height:9px;color:#d4d4d4;transform:scaleX(1.1132);transform-origin:0 0;">10:31:17</div>
<div class="t" style="left:207.20px;top:18.85px;font-size:7.2px;line-height:9px;color:#d4d4d4;transform:scaleX(1.1132);transform-origin:0 0;">10/14/14</div>
<div class="t" style="left:281.20px;top:11.75px;font-size:7.2px;line-height:9px;color:#d4d4d4;transform:scaleX(1.1132);transform-origin:0 0;">10:32:57</div>
<div class="t" style="left:281.20px;top:18.85px;font-size:7.2px;line-height:9px;color:#d4d4d4;transform:scaleX(1.1132);transform-origin:0 0;">10/14/14</div>
<div class="t" style="left:355.20px;top:11.75px;font-size:7.2px;line-height:9px;color:#d4d4d4;transform:scaleX(1.1132);transform-origin:0 0;">10:34:37</div>
<div class="t" style="left:355.20px;top:18.85px;font-size:7.2px;line-height:9px;color:#d4d4d4;transform:scaleX(1.1132);transform-origin:0 0;">10/14/14</div>
<div class="t" style="left:429.20px;top:11.75px;font-size:7.2px;line-height:9px;color:#d4d4d4;transform:scaleX(1.1132);transform-origin:0 0;">10:36:17</div>
<div class="t" style="left:429.20px;top:18.85px;font-size:7.2px;line-height:9px;color:#d4d4d4;transform:scaleX(1.1132);transform-origin:0 0;">10/14/14</div>
</div>
<div class="t" style="left:759.60px;top:308.89px;font-size:8.6px;line-height:11px;font-family:'Liberation Serif',serif;color:#d0d0d0;transform:scaleX(1.0498);transform-origin:0 0;">1Sec/Dot</div>
<div class="t" style="left:622.50px;top:477.71px;font-size:7.6px;line-height:10px;color:#2434b8;transform:scaleX(1.1043);transform-origin:0 0;">Tag1</div>
<div class="t" style="left:668.50px;top:477.71px;font-size:7.6px;line-height:10px;color:#34c034;transform:scaleX(1.1043);transform-origin:0 0;">Tag2</div>
<div class="t" style="left:714.00px;top:477.71px;font-size:7.6px;line-height:10px;color:#44c4d4;transform:scaleX(1.1043);transform-origin:0 0;">Tag3</div>
<div class="t" style="left:759.00px;top:477.71px;font-size:7.6px;line-height:10px;color:#e42222;transform:scaleX(1.1043);transform-origin:0 0;">Tag4</div>
<div class="t" style="left:805.00px;top:477.71px;font-size:7.6px;line-height:10px;color:#b434c4;transform:scaleX(1.1043);transform-origin:0 0;">Tag5</div>
<div class="t" style="left:851.00px;top:477.71px;font-size:7.6px;line-height:10px;color:#e4d424;transform:scaleX(1.1043);transform-origin:0 0;">Tag6</div>
<div class="a" style="left:511.1px;top:475.6px;width:22.9px;height:20.1px;background:#f2f2f2;border-right:1.2px solid #c4c4c4;border-bottom:1.2px solid #b8b8b8"></div>
<div class="a" style="left:534px;top:473.9px;width:22.8px;height:20.6px;background:#f2f2f2;border-right:1.2px solid #c4c4c4;border-bottom:1.2px solid #b8b8b8"></div>
<div class="a" style="left:511.1px;top:499px;width:22.9px;height:21.2px;background:#f2f2f2;border-right:1.2px solid #c4c4c4;border-bottom:1.2px solid #b8b8b8"></div>
<div class="a" style="left:534px;top:498.4px;width:22.8px;height:21.2px;background:#f2f2f2;border-right:1.2px solid #c4c4c4;border-bottom:1.2px solid #b8b8b8"></div>
<div class="a" style="left:517.8px;top:502.9px;width:12.2px;height:12.8px;background:#000"></div>
<div class="t" style="left:520.50px;top:503.02px;font-size:10.5px;line-height:13px;font-weight:bold;color:#fff;transform:scaleX(0.8967);transform-origin:0 0;">B</div>
<div class="t" style="left:541.20px;top:503.33px;font-size:10.8px;line-height:13px;font-weight:bold;color:#111;transform:scaleX(0.9908);transform-origin:0 0;">W</div>
<svg class="a" style="left:510px;top:474px" width="50" height="22"><path d="M7,12 L11,10 L14,9.5 L16,10 L16,15 L13,15.5 L10,14 Z" fill="#e8e040" stroke="#222" stroke-width="0.7"/><rect x="16" y="9" width="4" height="7" fill="#207080" stroke="#222" stroke-width="0.6"/><rect x="34" y="4" width="6" height="3.5" fill="#207080" stroke="#222" stroke-width="0.6"/><path d="M34,7.5 H40 L39.5,11 L37.5,17 L36.5,17 L35,11 Z" fill="#e8e040" stroke="#222" stroke-width="0.7"/></svg>

<!-- status bar -->
<div class="a" style="left:0;top:525px;width:1000px;height:13px;background:#f0f0f0;border-top:2px solid #a4a4a4"></div>
<div class="a" style="left:0;top:527px;width:1000px;height:1px;background:#e0e0e0"></div>
<div class="a" style="left:105px;top:528px;width:1px;height:10px;background:#c4c4c4"></div>
<div class="a" style="left:106px;top:528px;width:1px;height:10px;background:#fff"></div>
<div class="a" style="left:261px;top:528px;width:1px;height:10px;background:#c4c4c4"></div>
<div class="a" style="left:262px;top:528px;width:1px;height:10px;background:#fff"></div>
<div class="a" style="left:417.5px;top:528px;width:1px;height:10px;background:#c4c4c4"></div>
<div class="a" style="left:418.5px;top:528px;width:1px;height:10px;background:#fff"></div>
<div class="t" style="left:1.00px;top:528.58px;font-size:7px;line-height:9px;color:#282828;transform:scaleX(0.9175);transform-origin:0 0;">Page</div>
<div class="t" style="left:107.00px;top:528.58px;font-size:7px;line-height:9px;color:#282828;transform:scaleX(0.9365);transform-origin:0 0;">Sampling Rate</div>
<div class="t" style="left:263.00px;top:528.58px;font-size:7px;line-height:9px;color:#282828;transform:scaleX(0.9676);transform-origin:0 0;">Scan Time</div>
</body></html>
